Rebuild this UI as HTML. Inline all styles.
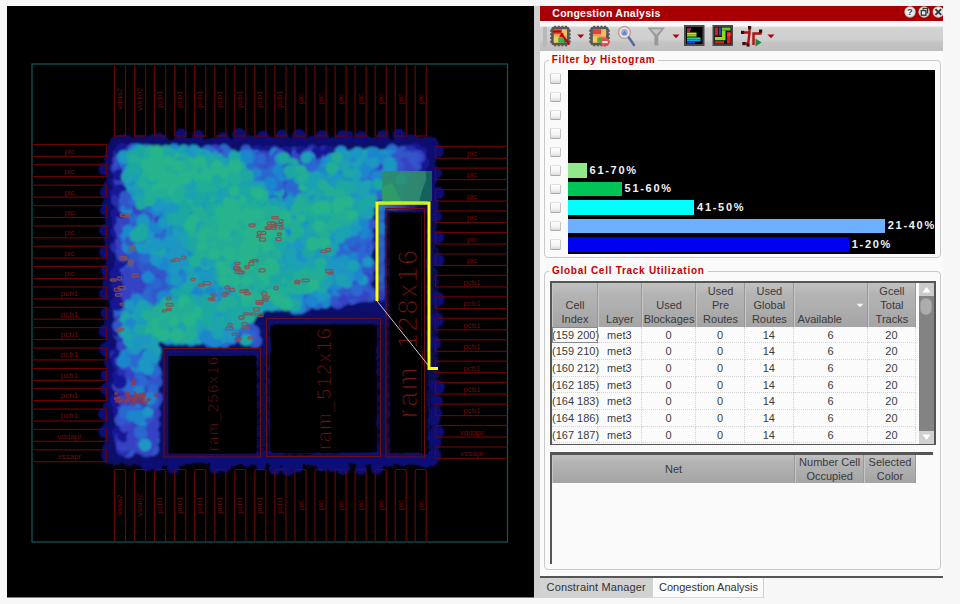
<!DOCTYPE html><html><head><meta charset="utf-8"><title>Congestion Analysis</title><style>
html,body{margin:0;padding:0}
body{width:960px;height:604px;background:#f7f7f7;position:relative;overflow:hidden;font-family:"Liberation Sans",sans-serif;font-size:11px;color:#3c3c3c}
.abs{position:absolute}
#strip{left:534px;top:6px;width:6px;height:591.5px;background:#cfcfcf}
#panel{left:540px;top:6px;width:403px;height:571px;background:#fafafa}
#title{left:540px;top:5.7px;width:403px;height:15.5px;background:#a80000;color:#fff;font-weight:bold;font-size:10.5px;line-height:15px;letter-spacing:0.25px}
#title span{position:absolute;left:12.3px;top:0.7px;white-space:nowrap}
#tbar{left:540px;top:21.2px;width:403px;height:29.4px;background:linear-gradient(#fafafa 0,#fafafa 17.5%,#dddddd 19%,#d2d2d2 27%,#d0d0d0 60%,#c4c4c4 72%,#bebebe 100%)}
.gb{border:1px solid #c9c9c9;border-radius:4px;box-sizing:border-box}
.gt{color:#c40000;font-weight:bold;font-size:10px;background:#fafafa;white-space:nowrap;line-height:12px;padding:0 3px 0 3px}
.cb{left:550px;width:11px;height:10.5px;background:linear-gradient(#fdfdfd 0,#f4f4f4 60%,#dadada 100%);border:1px solid #c4c4c4;border-top-color:#e2e2e2;border-bottom-color:#a8a8a8;box-sizing:border-box;border-radius:1.5px}
.bar{left:568px;height:14.5px}
.bl{color:#f2f2f2;font-weight:bold;font-size:11px;letter-spacing:1.7px;line-height:14.5px;white-space:nowrap}
.hd{background:linear-gradient(#c2c2c2 0,#b4b4b4 25%,#adadad 60%,#a4a4a4 100%);color:#3a3a3a;text-align:center;line-height:14px;font-size:11px;box-sizing:border-box;border-right:1px solid #999;border-left:1px solid #c6c6c6;white-space:nowrap;overflow:hidden;display:flex;flex-direction:column;justify-content:flex-end;padding-bottom:0.8px}
.cell{height:16.7px;line-height:16.7px;text-align:center;font-size:11px;color:#3c3c3c;box-sizing:border-box;border-right:1px dotted #d4d4d4;border-bottom:1px dotted #d4d4d4;white-space:nowrap}
</style></head><body>
<svg width="534" height="604" viewBox="0 0 534 604" style="position:absolute;left:0;top:0">
<defs><filter id="bl" x="-5%" y="-5%" width="110%" height="110%"><feGaussianBlur stdDeviation="1.0"/></filter><clipPath id="die"><rect x="32" y="64" width="475.5" height="478"/></clipPath></defs>
<rect x="7" y="6" width="527" height="591.5" fill="#000"/>
<g filter="url(#bl)">
<g fill="#07074a">
<circle cx="263" cy="322" r="6.0"/>
<circle cx="263" cy="326" r="6.0"/>
<circle cx="264" cy="332" r="6.0"/>
<circle cx="263" cy="335" r="6.0"/>
<circle cx="262" cy="340" r="6.0"/>
<circle cx="264" cy="345" r="6.5"/>
<circle cx="263" cy="350" r="6.0"/>
<circle cx="262" cy="355" r="7.0"/>
<circle cx="264" cy="359" r="6.0"/>
<circle cx="262" cy="364" r="7.0"/>
<circle cx="264" cy="369" r="7.0"/>
<circle cx="262" cy="374" r="6.5"/>
<circle cx="263" cy="377" r="6.0"/>
<circle cx="264" cy="382" r="7.0"/>
<circle cx="262" cy="387" r="6.5"/>
<circle cx="263" cy="392" r="7.0"/>
<circle cx="262" cy="395" r="6.0"/>
<circle cx="264" cy="400" r="6.5"/>
<circle cx="262" cy="404" r="6.0"/>
<circle cx="263" cy="409" r="6.0"/>
<circle cx="264" cy="414" r="6.5"/>
<circle cx="264" cy="420" r="6.5"/>
<circle cx="264" cy="423" r="7.0"/>
<circle cx="263" cy="429" r="6.5"/>
<circle cx="263" cy="434" r="7.0"/>
<circle cx="263" cy="438" r="6.0"/>
<circle cx="263" cy="443" r="6.5"/>
<circle cx="263" cy="447" r="6.5"/>
<circle cx="263" cy="452" r="6.0"/>
<circle cx="262" cy="455" r="6.5"/>
<circle cx="382" cy="211" r="7.0"/>
<circle cx="383" cy="215" r="6.0"/>
<circle cx="384" cy="219" r="6.0"/>
<circle cx="383" cy="223" r="7.0"/>
<circle cx="383" cy="229" r="6.5"/>
<circle cx="383" cy="234" r="6.5"/>
<circle cx="382" cy="238" r="7.0"/>
<circle cx="383" cy="242" r="7.0"/>
<circle cx="383" cy="247" r="7.0"/>
<circle cx="382" cy="251" r="7.0"/>
<circle cx="383" cy="257" r="6.0"/>
<circle cx="383" cy="262" r="7.0"/>
<circle cx="383" cy="266" r="6.5"/>
<circle cx="384" cy="271" r="6.0"/>
<circle cx="383" cy="274" r="7.0"/>
<circle cx="382" cy="279" r="6.0"/>
<circle cx="382" cy="284" r="6.5"/>
<circle cx="383" cy="289" r="7.0"/>
<circle cx="384" cy="293" r="6.0"/>
<circle cx="384" cy="299" r="6.0"/>
<circle cx="382" cy="303" r="7.0"/>
<circle cx="382" cy="307" r="6.5"/>
<circle cx="382" cy="312" r="7.0"/>
<circle cx="382" cy="316" r="6.0"/>
<circle cx="384" cy="322" r="7.0"/>
<circle cx="384" cy="325" r="6.0"/>
<circle cx="382" cy="331" r="6.0"/>
<circle cx="383" cy="335" r="7.0"/>
<circle cx="383" cy="340" r="6.0"/>
<circle cx="383" cy="344" r="6.5"/>
<circle cx="382" cy="350" r="7.0"/>
<circle cx="384" cy="353" r="6.0"/>
<circle cx="382" cy="359" r="7.0"/>
<circle cx="383" cy="363" r="6.0"/>
<circle cx="383" cy="367" r="7.0"/>
<circle cx="382" cy="372" r="6.5"/>
<circle cx="384" cy="376" r="6.0"/>
<circle cx="383" cy="382" r="6.0"/>
<circle cx="383" cy="386" r="6.5"/>
<circle cx="384" cy="392" r="6.0"/>
<circle cx="384" cy="395" r="6.0"/>
<circle cx="383" cy="400" r="7.0"/>
<circle cx="384" cy="405" r="6.5"/>
<circle cx="383" cy="410" r="6.5"/>
<circle cx="384" cy="414" r="7.0"/>
<circle cx="382" cy="418" r="6.0"/>
<circle cx="382" cy="423" r="7.0"/>
<circle cx="384" cy="428" r="6.5"/>
<circle cx="384" cy="433" r="6.0"/>
<circle cx="383" cy="437" r="6.0"/>
<circle cx="384" cy="442" r="7.0"/>
<circle cx="383" cy="447" r="7.0"/>
<circle cx="384" cy="452" r="7.0"/>
<circle cx="383" cy="456" r="6.0"/>
<circle cx="433" cy="206" r="7.0"/>
<circle cx="431" cy="211" r="6.0"/>
<circle cx="432" cy="216" r="6.0"/>
<circle cx="433" cy="221" r="6.0"/>
<circle cx="432" cy="226" r="6.0"/>
<circle cx="431" cy="232" r="6.0"/>
<circle cx="433" cy="237" r="6.0"/>
<circle cx="432" cy="241" r="6.5"/>
<circle cx="432" cy="248" r="6.5"/>
<circle cx="433" cy="252" r="6.5"/>
<circle cx="432" cy="257" r="6.5"/>
<circle cx="431" cy="263" r="7.0"/>
<circle cx="431" cy="267" r="6.0"/>
<circle cx="432" cy="273" r="6.5"/>
<circle cx="433" cy="279" r="6.0"/>
<circle cx="433" cy="283" r="7.0"/>
<circle cx="432" cy="288" r="6.5"/>
<circle cx="432" cy="293" r="6.5"/>
<circle cx="433" cy="299" r="6.5"/>
<circle cx="432" cy="303" r="6.5"/>
<circle cx="433" cy="308" r="6.0"/>
<circle cx="433" cy="313" r="6.0"/>
<circle cx="432" cy="318" r="6.5"/>
<circle cx="433" cy="324" r="6.5"/>
<circle cx="433" cy="330" r="7.0"/>
<circle cx="432" cy="334" r="7.0"/>
<circle cx="433" cy="340" r="6.5"/>
<circle cx="432" cy="345" r="7.0"/>
<circle cx="432" cy="349" r="7.0"/>
<circle cx="433" cy="355" r="6.0"/>
<circle cx="433" cy="361" r="6.5"/>
<circle cx="433" cy="365" r="6.0"/>
<circle cx="433" cy="371" r="6.5"/>
<circle cx="433" cy="375" r="7.0"/>
<circle cx="432" cy="382" r="6.0"/>
<circle cx="433" cy="387" r="7.0"/>
<circle cx="432" cy="391" r="6.0"/>
<circle cx="432" cy="396" r="7.0"/>
<circle cx="432" cy="401" r="7.0"/>
<circle cx="433" cy="406" r="7.0"/>
<circle cx="434" cy="411" r="6.5"/>
<circle cx="434" cy="417" r="6.5"/>
<circle cx="433" cy="422" r="7.0"/>
<circle cx="432" cy="428" r="6.0"/>
<circle cx="433" cy="433" r="6.5"/>
<circle cx="433" cy="438" r="6.5"/>
<circle cx="434" cy="443" r="6.5"/>
<circle cx="434" cy="447" r="6.5"/>
<circle cx="433" cy="454" r="6.0"/>
<circle cx="434" cy="459" r="6.5"/>
<circle cx="387" cy="207" r="7.0"/>
<circle cx="393" cy="207" r="6.5"/>
<circle cx="397" cy="208" r="6.5"/>
<circle cx="401" cy="207" r="6.5"/>
<circle cx="406" cy="207" r="6.5"/>
<circle cx="410" cy="208" r="6.0"/>
<circle cx="415" cy="208" r="7.0"/>
<circle cx="419" cy="207" r="6.0"/>
<circle cx="424" cy="208" r="6.5"/>
<circle cx="427" cy="207" r="6.5"/>
</g>
<g fill="#0a0a6c">
<circle cx="117" cy="143" r="7.5"/>
<circle cx="120" cy="144" r="9.0"/>
<circle cx="125" cy="143" r="9.0"/>
<circle cx="133" cy="147" r="7.5"/>
<circle cx="136" cy="145" r="8.0"/>
<circle cx="139" cy="143" r="8.0"/>
<circle cx="145" cy="144" r="8.0"/>
<circle cx="153" cy="143" r="9.0"/>
<circle cx="154" cy="147" r="9.0"/>
<circle cx="161" cy="143" r="8.5"/>
<circle cx="171" cy="147" r="7.5"/>
<circle cx="178" cy="146" r="7.5"/>
<circle cx="180" cy="144" r="8.5"/>
<circle cx="184" cy="146" r="7.5"/>
<circle cx="191" cy="146" r="8.5"/>
<circle cx="195" cy="144" r="7.5"/>
<circle cx="203" cy="147" r="8.0"/>
<circle cx="208" cy="147" r="8.0"/>
<circle cx="213" cy="146" r="8.0"/>
<circle cx="215" cy="145" r="8.0"/>
<circle cx="224" cy="144" r="8.5"/>
<circle cx="230" cy="146" r="7.5"/>
<circle cx="238" cy="145" r="7.5"/>
<circle cx="243" cy="147" r="9.0"/>
<circle cx="248" cy="144" r="8.5"/>
<circle cx="250" cy="144" r="9.0"/>
<circle cx="254" cy="144" r="8.0"/>
<circle cx="262" cy="147" r="8.0"/>
<circle cx="268" cy="145" r="9.0"/>
<circle cx="272" cy="146" r="8.5"/>
<circle cx="274" cy="146" r="9.0"/>
<circle cx="283" cy="146" r="7.5"/>
<circle cx="287" cy="145" r="8.0"/>
<circle cx="289" cy="146" r="8.5"/>
<circle cx="295" cy="147" r="8.0"/>
<circle cx="303" cy="144" r="9.0"/>
<circle cx="306" cy="147" r="7.5"/>
<circle cx="312" cy="143" r="7.5"/>
<circle cx="314" cy="143" r="7.5"/>
<circle cx="323" cy="147" r="7.5"/>
<circle cx="324" cy="147" r="8.0"/>
<circle cx="333" cy="146" r="9.0"/>
<circle cx="335" cy="145" r="9.0"/>
<circle cx="348" cy="146" r="7.5"/>
<circle cx="351" cy="147" r="8.5"/>
<circle cx="356" cy="147" r="8.5"/>
<circle cx="363" cy="144" r="9.0"/>
<circle cx="365" cy="144" r="9.0"/>
<circle cx="370" cy="145" r="7.5"/>
<circle cx="375" cy="145" r="8.0"/>
<circle cx="379" cy="147" r="9.0"/>
<circle cx="385" cy="145" r="8.5"/>
<circle cx="391" cy="147" r="7.5"/>
<circle cx="396" cy="147" r="8.0"/>
<circle cx="401" cy="145" r="8.0"/>
<circle cx="411" cy="143" r="9.0"/>
<circle cx="414" cy="146" r="7.5"/>
<circle cx="419" cy="145" r="8.0"/>
<circle cx="427" cy="145" r="8.5"/>
<circle cx="430" cy="145" r="9.0"/>
<circle cx="115" cy="149" r="8.0"/>
<circle cx="122" cy="150" r="8.5"/>
<circle cx="133" cy="150" r="9.0"/>
<circle cx="137" cy="150" r="8.5"/>
<circle cx="141" cy="151" r="9.0"/>
<circle cx="146" cy="150" r="8.5"/>
<circle cx="151" cy="152" r="8.5"/>
<circle cx="163" cy="149" r="9.0"/>
<circle cx="173" cy="148" r="8.0"/>
<circle cx="174" cy="150" r="8.5"/>
<circle cx="179" cy="149" r="9.0"/>
<circle cx="184" cy="151" r="7.5"/>
<circle cx="194" cy="151" r="8.0"/>
<circle cx="202" cy="148" r="7.5"/>
<circle cx="210" cy="152" r="8.5"/>
<circle cx="215" cy="150" r="9.0"/>
<circle cx="224" cy="150" r="8.5"/>
<circle cx="231" cy="149" r="7.5"/>
<circle cx="234" cy="149" r="7.5"/>
<circle cx="242" cy="148" r="7.5"/>
<circle cx="246" cy="150" r="9.0"/>
<circle cx="249" cy="149" r="8.0"/>
<circle cx="257" cy="150" r="8.0"/>
<circle cx="259" cy="152" r="8.5"/>
<circle cx="269" cy="149" r="9.0"/>
<circle cx="280" cy="148" r="7.5"/>
<circle cx="293" cy="149" r="8.5"/>
<circle cx="304" cy="148" r="8.0"/>
<circle cx="312" cy="150" r="9.0"/>
<circle cx="314" cy="152" r="8.5"/>
<circle cx="324" cy="152" r="8.5"/>
<circle cx="336" cy="149" r="7.5"/>
<circle cx="345" cy="148" r="7.5"/>
<circle cx="351" cy="149" r="8.0"/>
<circle cx="354" cy="148" r="8.0"/>
<circle cx="359" cy="149" r="9.0"/>
<circle cx="365" cy="149" r="9.0"/>
<circle cx="372" cy="149" r="8.5"/>
<circle cx="376" cy="148" r="8.0"/>
<circle cx="380" cy="148" r="7.5"/>
<circle cx="385" cy="148" r="8.0"/>
<circle cx="392" cy="150" r="8.5"/>
<circle cx="394" cy="150" r="8.5"/>
<circle cx="403" cy="148" r="8.0"/>
<circle cx="408" cy="150" r="8.5"/>
<circle cx="415" cy="150" r="8.0"/>
<circle cx="425" cy="152" r="8.5"/>
<circle cx="114" cy="156" r="8.5"/>
<circle cx="120" cy="153" r="9.0"/>
<circle cx="124" cy="157" r="9.0"/>
<circle cx="135" cy="154" r="9.0"/>
<circle cx="140" cy="155" r="8.0"/>
<circle cx="150" cy="157" r="8.5"/>
<circle cx="160" cy="157" r="8.5"/>
<circle cx="165" cy="154" r="8.0"/>
<circle cx="180" cy="155" r="9.0"/>
<circle cx="206" cy="155" r="7.5"/>
<circle cx="212" cy="156" r="9.0"/>
<circle cx="220" cy="154" r="8.5"/>
<circle cx="232" cy="156" r="8.5"/>
<circle cx="266" cy="157" r="7.5"/>
<circle cx="272" cy="156" r="9.0"/>
<circle cx="275" cy="153" r="8.0"/>
<circle cx="311" cy="155" r="9.0"/>
<circle cx="324" cy="154" r="9.0"/>
<circle cx="337" cy="157" r="8.0"/>
<circle cx="341" cy="154" r="8.0"/>
<circle cx="357" cy="153" r="8.0"/>
<circle cx="359" cy="154" r="8.0"/>
<circle cx="371" cy="153" r="8.5"/>
<circle cx="382" cy="156" r="9.0"/>
<circle cx="387" cy="154" r="8.5"/>
<circle cx="391" cy="155" r="7.5"/>
<circle cx="403" cy="153" r="8.5"/>
<circle cx="425" cy="157" r="7.5"/>
<circle cx="430" cy="155" r="7.5"/>
<circle cx="113" cy="158" r="9.0"/>
<circle cx="118" cy="160" r="8.0"/>
<circle cx="123" cy="161" r="8.5"/>
<circle cx="134" cy="160" r="8.0"/>
<circle cx="141" cy="159" r="8.0"/>
<circle cx="144" cy="159" r="9.0"/>
<circle cx="175" cy="159" r="8.5"/>
<circle cx="183" cy="160" r="8.0"/>
<circle cx="185" cy="160" r="8.0"/>
<circle cx="215" cy="162" r="9.0"/>
<circle cx="233" cy="160" r="7.5"/>
<circle cx="242" cy="160" r="9.0"/>
<circle cx="290" cy="162" r="9.0"/>
<circle cx="296" cy="159" r="8.0"/>
<circle cx="306" cy="158" r="7.5"/>
<circle cx="344" cy="159" r="9.0"/>
<circle cx="353" cy="158" r="7.5"/>
<circle cx="365" cy="159" r="8.0"/>
<circle cx="378" cy="162" r="8.0"/>
<circle cx="383" cy="158" r="8.5"/>
<circle cx="421" cy="161" r="8.0"/>
<circle cx="428" cy="161" r="8.0"/>
<circle cx="115" cy="167" r="9.0"/>
<circle cx="122" cy="164" r="8.5"/>
<circle cx="132" cy="166" r="7.5"/>
<circle cx="134" cy="163" r="8.5"/>
<circle cx="152" cy="163" r="7.5"/>
<circle cx="168" cy="165" r="7.5"/>
<circle cx="180" cy="163" r="8.0"/>
<circle cx="197" cy="167" r="9.0"/>
<circle cx="200" cy="163" r="8.5"/>
<circle cx="217" cy="166" r="7.5"/>
<circle cx="221" cy="164" r="7.5"/>
<circle cx="240" cy="167" r="9.0"/>
<circle cx="250" cy="165" r="8.5"/>
<circle cx="257" cy="167" r="9.0"/>
<circle cx="259" cy="164" r="8.0"/>
<circle cx="274" cy="164" r="8.5"/>
<circle cx="287" cy="167" r="8.0"/>
<circle cx="293" cy="164" r="9.0"/>
<circle cx="307" cy="164" r="9.0"/>
<circle cx="350" cy="167" r="9.0"/>
<circle cx="363" cy="163" r="8.0"/>
<circle cx="387" cy="167" r="9.0"/>
<circle cx="400" cy="166" r="9.0"/>
<circle cx="423" cy="163" r="8.5"/>
<circle cx="425" cy="165" r="7.5"/>
<circle cx="111" cy="170" r="7.5"/>
<circle cx="118" cy="168" r="8.0"/>
<circle cx="132" cy="169" r="8.5"/>
<circle cx="150" cy="168" r="9.0"/>
<circle cx="154" cy="170" r="8.5"/>
<circle cx="160" cy="172" r="7.5"/>
<circle cx="170" cy="168" r="7.5"/>
<circle cx="197" cy="172" r="9.0"/>
<circle cx="202" cy="168" r="9.0"/>
<circle cx="211" cy="169" r="8.5"/>
<circle cx="231" cy="169" r="9.0"/>
<circle cx="235" cy="172" r="7.5"/>
<circle cx="241" cy="169" r="8.0"/>
<circle cx="253" cy="168" r="8.5"/>
<circle cx="263" cy="172" r="9.0"/>
<circle cx="290" cy="171" r="8.0"/>
<circle cx="315" cy="170" r="7.5"/>
<circle cx="324" cy="169" r="8.0"/>
<circle cx="335" cy="169" r="8.5"/>
<circle cx="359" cy="171" r="8.0"/>
<circle cx="366" cy="169" r="9.0"/>
<circle cx="380" cy="170" r="7.5"/>
<circle cx="388" cy="172" r="8.5"/>
<circle cx="397" cy="169" r="8.5"/>
<circle cx="399" cy="172" r="9.0"/>
<circle cx="411" cy="172" r="7.5"/>
<circle cx="427" cy="172" r="8.5"/>
<circle cx="429" cy="171" r="9.0"/>
<circle cx="116" cy="177" r="8.0"/>
<circle cx="128" cy="177" r="8.0"/>
<circle cx="141" cy="173" r="8.0"/>
<circle cx="148" cy="174" r="8.5"/>
<circle cx="153" cy="176" r="7.5"/>
<circle cx="158" cy="173" r="9.0"/>
<circle cx="162" cy="174" r="8.0"/>
<circle cx="173" cy="173" r="8.0"/>
<circle cx="202" cy="173" r="9.0"/>
<circle cx="221" cy="175" r="8.5"/>
<circle cx="226" cy="176" r="8.5"/>
<circle cx="247" cy="176" r="8.0"/>
<circle cx="256" cy="173" r="8.5"/>
<circle cx="271" cy="173" r="8.5"/>
<circle cx="277" cy="173" r="8.5"/>
<circle cx="298" cy="173" r="7.5"/>
<circle cx="303" cy="177" r="7.5"/>
<circle cx="316" cy="177" r="8.5"/>
<circle cx="323" cy="173" r="7.5"/>
<circle cx="343" cy="174" r="7.5"/>
<circle cx="417" cy="174" r="9.0"/>
<circle cx="423" cy="175" r="8.0"/>
<circle cx="425" cy="176" r="8.5"/>
<circle cx="431" cy="173" r="8.5"/>
<circle cx="113" cy="179" r="7.5"/>
<circle cx="117" cy="182" r="9.0"/>
<circle cx="121" cy="181" r="7.5"/>
<circle cx="129" cy="178" r="8.5"/>
<circle cx="137" cy="180" r="8.5"/>
<circle cx="159" cy="179" r="7.5"/>
<circle cx="217" cy="180" r="8.0"/>
<circle cx="225" cy="182" r="7.5"/>
<circle cx="236" cy="179" r="7.5"/>
<circle cx="254" cy="181" r="9.0"/>
<circle cx="261" cy="181" r="7.5"/>
<circle cx="274" cy="182" r="8.0"/>
<circle cx="292" cy="180" r="7.5"/>
<circle cx="332" cy="180" r="8.0"/>
<circle cx="350" cy="179" r="9.0"/>
<circle cx="368" cy="179" r="7.5"/>
<circle cx="401" cy="179" r="9.0"/>
<circle cx="409" cy="182" r="9.0"/>
<circle cx="425" cy="178" r="8.5"/>
<circle cx="429" cy="178" r="9.0"/>
<circle cx="112" cy="186" r="8.5"/>
<circle cx="114" cy="185" r="9.0"/>
<circle cx="139" cy="184" r="8.0"/>
<circle cx="144" cy="183" r="7.5"/>
<circle cx="175" cy="185" r="9.0"/>
<circle cx="185" cy="186" r="8.0"/>
<circle cx="203" cy="186" r="8.0"/>
<circle cx="211" cy="186" r="9.0"/>
<circle cx="215" cy="186" r="8.0"/>
<circle cx="233" cy="183" r="7.5"/>
<circle cx="254" cy="185" r="8.5"/>
<circle cx="270" cy="184" r="8.5"/>
<circle cx="279" cy="186" r="7.5"/>
<circle cx="284" cy="186" r="8.0"/>
<circle cx="313" cy="183" r="8.0"/>
<circle cx="315" cy="184" r="7.5"/>
<circle cx="323" cy="185" r="7.5"/>
<circle cx="330" cy="185" r="8.0"/>
<circle cx="342" cy="186" r="8.0"/>
<circle cx="345" cy="184" r="8.0"/>
<circle cx="357" cy="186" r="8.5"/>
<circle cx="369" cy="185" r="8.5"/>
<circle cx="378" cy="184" r="7.5"/>
<circle cx="413" cy="186" r="7.5"/>
<circle cx="428" cy="186" r="7.5"/>
<circle cx="115" cy="188" r="7.5"/>
<circle cx="132" cy="190" r="8.0"/>
<circle cx="156" cy="189" r="9.0"/>
<circle cx="167" cy="191" r="7.5"/>
<circle cx="173" cy="191" r="8.5"/>
<circle cx="177" cy="190" r="9.0"/>
<circle cx="180" cy="191" r="9.0"/>
<circle cx="184" cy="190" r="8.5"/>
<circle cx="201" cy="190" r="7.5"/>
<circle cx="207" cy="190" r="8.0"/>
<circle cx="212" cy="192" r="7.5"/>
<circle cx="222" cy="189" r="9.0"/>
<circle cx="229" cy="190" r="7.5"/>
<circle cx="234" cy="191" r="7.5"/>
<circle cx="251" cy="191" r="9.0"/>
<circle cx="256" cy="191" r="8.0"/>
<circle cx="266" cy="192" r="8.5"/>
<circle cx="279" cy="192" r="9.0"/>
<circle cx="290" cy="189" r="8.0"/>
<circle cx="294" cy="190" r="9.0"/>
<circle cx="301" cy="191" r="8.5"/>
<circle cx="345" cy="192" r="7.5"/>
<circle cx="358" cy="192" r="8.0"/>
<circle cx="378" cy="189" r="8.5"/>
<circle cx="389" cy="191" r="8.0"/>
<circle cx="395" cy="189" r="7.5"/>
<circle cx="406" cy="191" r="7.5"/>
<circle cx="418" cy="192" r="7.5"/>
<circle cx="428" cy="191" r="7.5"/>
<circle cx="429" cy="192" r="7.5"/>
<circle cx="117" cy="194" r="8.0"/>
<circle cx="119" cy="193" r="8.0"/>
<circle cx="138" cy="196" r="9.0"/>
<circle cx="139" cy="197" r="8.0"/>
<circle cx="147" cy="196" r="8.5"/>
<circle cx="152" cy="197" r="8.0"/>
<circle cx="171" cy="197" r="8.5"/>
<circle cx="180" cy="193" r="7.5"/>
<circle cx="196" cy="195" r="9.0"/>
<circle cx="201" cy="197" r="8.5"/>
<circle cx="204" cy="197" r="7.5"/>
<circle cx="217" cy="197" r="9.0"/>
<circle cx="228" cy="193" r="9.0"/>
<circle cx="258" cy="193" r="7.5"/>
<circle cx="262" cy="196" r="9.0"/>
<circle cx="270" cy="195" r="9.0"/>
<circle cx="293" cy="194" r="7.5"/>
<circle cx="298" cy="195" r="8.0"/>
<circle cx="312" cy="196" r="8.5"/>
<circle cx="315" cy="194" r="8.0"/>
<circle cx="353" cy="196" r="9.0"/>
<circle cx="387" cy="193" r="7.5"/>
<circle cx="397" cy="197" r="9.0"/>
<circle cx="408" cy="196" r="8.5"/>
<circle cx="420" cy="195" r="7.5"/>
<circle cx="427" cy="197" r="8.5"/>
<circle cx="429" cy="195" r="8.5"/>
<circle cx="113" cy="200" r="8.5"/>
<circle cx="133" cy="200" r="7.5"/>
<circle cx="136" cy="198" r="8.0"/>
<circle cx="142" cy="199" r="9.0"/>
<circle cx="149" cy="201" r="7.5"/>
<circle cx="154" cy="202" r="8.5"/>
<circle cx="159" cy="202" r="8.5"/>
<circle cx="164" cy="198" r="8.0"/>
<circle cx="187" cy="202" r="9.0"/>
<circle cx="197" cy="201" r="8.5"/>
<circle cx="201" cy="202" r="7.5"/>
<circle cx="205" cy="202" r="9.0"/>
<circle cx="212" cy="198" r="8.0"/>
<circle cx="223" cy="198" r="9.0"/>
<circle cx="229" cy="202" r="9.0"/>
<circle cx="246" cy="201" r="7.5"/>
<circle cx="249" cy="201" r="9.0"/>
<circle cx="262" cy="200" r="9.0"/>
<circle cx="287" cy="202" r="7.5"/>
<circle cx="324" cy="199" r="8.5"/>
<circle cx="331" cy="200" r="8.0"/>
<circle cx="338" cy="202" r="9.0"/>
<circle cx="339" cy="202" r="8.5"/>
<circle cx="348" cy="202" r="8.0"/>
<circle cx="358" cy="202" r="7.5"/>
<circle cx="362" cy="202" r="9.0"/>
<circle cx="371" cy="201" r="9.0"/>
<circle cx="375" cy="201" r="9.0"/>
<circle cx="383" cy="199" r="8.5"/>
<circle cx="387" cy="201" r="8.5"/>
<circle cx="391" cy="199" r="8.0"/>
<circle cx="395" cy="201" r="8.0"/>
<circle cx="402" cy="200" r="7.5"/>
<circle cx="404" cy="202" r="8.5"/>
<circle cx="412" cy="199" r="8.5"/>
<circle cx="416" cy="202" r="9.0"/>
<circle cx="423" cy="200" r="7.5"/>
<circle cx="426" cy="200" r="8.5"/>
<circle cx="429" cy="198" r="7.5"/>
<circle cx="110" cy="205" r="8.0"/>
<circle cx="116" cy="205" r="8.0"/>
<circle cx="149" cy="207" r="8.5"/>
<circle cx="173" cy="206" r="7.5"/>
<circle cx="185" cy="203" r="8.0"/>
<circle cx="189" cy="203" r="8.5"/>
<circle cx="196" cy="207" r="9.0"/>
<circle cx="208" cy="203" r="7.5"/>
<circle cx="236" cy="203" r="9.0"/>
<circle cx="263" cy="203" r="9.0"/>
<circle cx="267" cy="206" r="8.5"/>
<circle cx="306" cy="203" r="7.5"/>
<circle cx="322" cy="203" r="7.5"/>
<circle cx="324" cy="207" r="9.0"/>
<circle cx="338" cy="207" r="8.5"/>
<circle cx="344" cy="207" r="8.0"/>
<circle cx="367" cy="203" r="8.0"/>
<circle cx="370" cy="203" r="8.0"/>
<circle cx="385" cy="205" r="9.0"/>
<circle cx="389" cy="204" r="8.0"/>
<circle cx="398" cy="204" r="8.5"/>
<circle cx="399" cy="205" r="9.0"/>
<circle cx="422" cy="204" r="8.5"/>
<circle cx="426" cy="204" r="8.0"/>
<circle cx="430" cy="204" r="8.5"/>
<circle cx="113" cy="212" r="8.5"/>
<circle cx="114" cy="209" r="8.0"/>
<circle cx="123" cy="208" r="9.0"/>
<circle cx="133" cy="208" r="8.0"/>
<circle cx="138" cy="209" r="8.5"/>
<circle cx="182" cy="210" r="8.0"/>
<circle cx="192" cy="211" r="7.5"/>
<circle cx="198" cy="210" r="7.5"/>
<circle cx="207" cy="210" r="8.5"/>
<circle cx="223" cy="212" r="7.5"/>
<circle cx="273" cy="212" r="8.5"/>
<circle cx="275" cy="211" r="8.0"/>
<circle cx="284" cy="212" r="8.5"/>
<circle cx="293" cy="210" r="9.0"/>
<circle cx="301" cy="208" r="9.0"/>
<circle cx="309" cy="208" r="9.0"/>
<circle cx="319" cy="208" r="7.5"/>
<circle cx="329" cy="210" r="8.0"/>
<circle cx="348" cy="211" r="8.0"/>
<circle cx="366" cy="208" r="8.0"/>
<circle cx="371" cy="212" r="8.5"/>
<circle cx="374" cy="210" r="8.0"/>
<circle cx="117" cy="214" r="8.0"/>
<circle cx="121" cy="213" r="8.5"/>
<circle cx="126" cy="215" r="8.5"/>
<circle cx="138" cy="216" r="8.5"/>
<circle cx="157" cy="214" r="8.0"/>
<circle cx="162" cy="214" r="7.5"/>
<circle cx="176" cy="215" r="7.5"/>
<circle cx="185" cy="216" r="8.5"/>
<circle cx="189" cy="215" r="7.5"/>
<circle cx="206" cy="213" r="8.5"/>
<circle cx="209" cy="213" r="7.5"/>
<circle cx="215" cy="215" r="8.0"/>
<circle cx="220" cy="214" r="8.0"/>
<circle cx="255" cy="214" r="8.5"/>
<circle cx="260" cy="215" r="8.0"/>
<circle cx="269" cy="214" r="9.0"/>
<circle cx="281" cy="215" r="7.5"/>
<circle cx="285" cy="217" r="8.0"/>
<circle cx="311" cy="216" r="8.0"/>
<circle cx="314" cy="214" r="8.5"/>
<circle cx="323" cy="216" r="7.5"/>
<circle cx="343" cy="215" r="8.0"/>
<circle cx="357" cy="216" r="8.0"/>
<circle cx="363" cy="213" r="8.0"/>
<circle cx="372" cy="215" r="8.0"/>
<circle cx="376" cy="217" r="8.5"/>
<circle cx="113" cy="219" r="8.5"/>
<circle cx="118" cy="222" r="9.0"/>
<circle cx="129" cy="218" r="7.5"/>
<circle cx="143" cy="221" r="7.5"/>
<circle cx="160" cy="220" r="9.0"/>
<circle cx="193" cy="220" r="7.5"/>
<circle cx="206" cy="222" r="7.5"/>
<circle cx="218" cy="222" r="8.5"/>
<circle cx="246" cy="220" r="9.0"/>
<circle cx="275" cy="221" r="8.0"/>
<circle cx="288" cy="220" r="8.0"/>
<circle cx="292" cy="218" r="9.0"/>
<circle cx="296" cy="220" r="9.0"/>
<circle cx="300" cy="221" r="9.0"/>
<circle cx="314" cy="218" r="9.0"/>
<circle cx="337" cy="222" r="9.0"/>
<circle cx="339" cy="218" r="8.0"/>
<circle cx="347" cy="219" r="8.5"/>
<circle cx="352" cy="219" r="8.5"/>
<circle cx="359" cy="222" r="8.5"/>
<circle cx="371" cy="219" r="8.5"/>
<circle cx="374" cy="222" r="7.5"/>
<circle cx="115" cy="223" r="7.5"/>
<circle cx="136" cy="223" r="8.0"/>
<circle cx="149" cy="224" r="9.0"/>
<circle cx="155" cy="223" r="8.5"/>
<circle cx="169" cy="224" r="7.5"/>
<circle cx="195" cy="227" r="7.5"/>
<circle cx="225" cy="224" r="8.0"/>
<circle cx="232" cy="224" r="8.0"/>
<circle cx="241" cy="225" r="8.5"/>
<circle cx="256" cy="224" r="8.0"/>
<circle cx="260" cy="223" r="8.0"/>
<circle cx="274" cy="225" r="7.5"/>
<circle cx="280" cy="225" r="9.0"/>
<circle cx="285" cy="223" r="7.5"/>
<circle cx="300" cy="225" r="8.0"/>
<circle cx="319" cy="226" r="7.5"/>
<circle cx="327" cy="224" r="8.0"/>
<circle cx="337" cy="224" r="7.5"/>
<circle cx="357" cy="226" r="8.0"/>
<circle cx="359" cy="223" r="8.5"/>
<circle cx="370" cy="224" r="8.0"/>
<circle cx="374" cy="224" r="8.5"/>
<circle cx="112" cy="229" r="7.5"/>
<circle cx="117" cy="232" r="8.5"/>
<circle cx="120" cy="228" r="7.5"/>
<circle cx="133" cy="231" r="9.0"/>
<circle cx="142" cy="230" r="7.5"/>
<circle cx="170" cy="230" r="8.0"/>
<circle cx="178" cy="231" r="7.5"/>
<circle cx="181" cy="229" r="8.0"/>
<circle cx="202" cy="231" r="8.5"/>
<circle cx="205" cy="229" r="8.0"/>
<circle cx="224" cy="230" r="8.5"/>
<circle cx="230" cy="232" r="8.5"/>
<circle cx="254" cy="229" r="8.5"/>
<circle cx="264" cy="229" r="9.0"/>
<circle cx="276" cy="228" r="7.5"/>
<circle cx="280" cy="230" r="9.0"/>
<circle cx="285" cy="228" r="9.0"/>
<circle cx="309" cy="230" r="8.5"/>
<circle cx="321" cy="228" r="8.5"/>
<circle cx="340" cy="228" r="9.0"/>
<circle cx="344" cy="231" r="7.5"/>
<circle cx="373" cy="231" r="8.5"/>
<circle cx="375" cy="228" r="8.0"/>
<circle cx="116" cy="233" r="9.0"/>
<circle cx="132" cy="235" r="7.5"/>
<circle cx="141" cy="235" r="9.0"/>
<circle cx="152" cy="237" r="8.5"/>
<circle cx="158" cy="233" r="7.5"/>
<circle cx="166" cy="234" r="9.0"/>
<circle cx="169" cy="233" r="9.0"/>
<circle cx="188" cy="237" r="7.5"/>
<circle cx="198" cy="233" r="8.5"/>
<circle cx="202" cy="236" r="9.0"/>
<circle cx="205" cy="235" r="8.5"/>
<circle cx="213" cy="235" r="9.0"/>
<circle cx="224" cy="233" r="8.5"/>
<circle cx="240" cy="235" r="7.5"/>
<circle cx="246" cy="235" r="7.5"/>
<circle cx="270" cy="233" r="8.0"/>
<circle cx="276" cy="234" r="8.5"/>
<circle cx="289" cy="235" r="8.0"/>
<circle cx="301" cy="233" r="8.0"/>
<circle cx="317" cy="233" r="8.0"/>
<circle cx="330" cy="233" r="7.5"/>
<circle cx="342" cy="233" r="8.0"/>
<circle cx="350" cy="234" r="8.0"/>
<circle cx="354" cy="235" r="8.0"/>
<circle cx="373" cy="236" r="8.5"/>
<circle cx="113" cy="240" r="9.0"/>
<circle cx="114" cy="238" r="7.5"/>
<circle cx="119" cy="242" r="8.5"/>
<circle cx="130" cy="241" r="8.0"/>
<circle cx="143" cy="240" r="7.5"/>
<circle cx="153" cy="238" r="8.5"/>
<circle cx="161" cy="242" r="7.5"/>
<circle cx="177" cy="239" r="8.5"/>
<circle cx="209" cy="239" r="9.0"/>
<circle cx="230" cy="238" r="9.0"/>
<circle cx="247" cy="239" r="7.5"/>
<circle cx="278" cy="241" r="9.0"/>
<circle cx="307" cy="240" r="9.0"/>
<circle cx="335" cy="239" r="8.5"/>
<circle cx="344" cy="242" r="9.0"/>
<circle cx="356" cy="239" r="7.5"/>
<circle cx="372" cy="240" r="7.5"/>
<circle cx="112" cy="243" r="7.5"/>
<circle cx="117" cy="247" r="8.0"/>
<circle cx="134" cy="245" r="8.0"/>
<circle cx="143" cy="246" r="8.0"/>
<circle cx="148" cy="244" r="8.0"/>
<circle cx="157" cy="245" r="9.0"/>
<circle cx="162" cy="244" r="7.5"/>
<circle cx="175" cy="245" r="9.0"/>
<circle cx="198" cy="243" r="8.0"/>
<circle cx="202" cy="246" r="9.0"/>
<circle cx="205" cy="243" r="8.5"/>
<circle cx="209" cy="243" r="7.5"/>
<circle cx="217" cy="243" r="8.5"/>
<circle cx="223" cy="245" r="8.5"/>
<circle cx="231" cy="246" r="9.0"/>
<circle cx="252" cy="244" r="8.0"/>
<circle cx="292" cy="243" r="8.0"/>
<circle cx="306" cy="243" r="7.5"/>
<circle cx="324" cy="243" r="9.0"/>
<circle cx="342" cy="244" r="8.0"/>
<circle cx="359" cy="246" r="7.5"/>
<circle cx="366" cy="247" r="8.5"/>
<circle cx="376" cy="247" r="7.5"/>
<circle cx="116" cy="250" r="8.5"/>
<circle cx="130" cy="251" r="9.0"/>
<circle cx="149" cy="252" r="7.5"/>
<circle cx="159" cy="251" r="9.0"/>
<circle cx="201" cy="249" r="8.0"/>
<circle cx="209" cy="252" r="9.0"/>
<circle cx="219" cy="250" r="8.0"/>
<circle cx="224" cy="250" r="7.5"/>
<circle cx="234" cy="251" r="9.0"/>
<circle cx="245" cy="250" r="8.0"/>
<circle cx="265" cy="248" r="9.0"/>
<circle cx="270" cy="248" r="9.0"/>
<circle cx="281" cy="250" r="7.5"/>
<circle cx="320" cy="249" r="8.0"/>
<circle cx="326" cy="248" r="7.5"/>
<circle cx="363" cy="248" r="7.5"/>
<circle cx="367" cy="249" r="8.0"/>
<circle cx="372" cy="250" r="9.0"/>
<circle cx="375" cy="252" r="9.0"/>
<circle cx="111" cy="255" r="8.0"/>
<circle cx="115" cy="253" r="7.5"/>
<circle cx="126" cy="255" r="8.5"/>
<circle cx="141" cy="256" r="8.0"/>
<circle cx="153" cy="253" r="7.5"/>
<circle cx="163" cy="253" r="9.0"/>
<circle cx="164" cy="254" r="8.0"/>
<circle cx="178" cy="255" r="8.0"/>
<circle cx="185" cy="257" r="8.0"/>
<circle cx="202" cy="253" r="9.0"/>
<circle cx="220" cy="253" r="9.0"/>
<circle cx="225" cy="255" r="8.0"/>
<circle cx="262" cy="256" r="7.5"/>
<circle cx="271" cy="254" r="9.0"/>
<circle cx="277" cy="254" r="7.5"/>
<circle cx="288" cy="254" r="8.5"/>
<circle cx="290" cy="255" r="8.0"/>
<circle cx="310" cy="253" r="9.0"/>
<circle cx="321" cy="255" r="8.5"/>
<circle cx="346" cy="257" r="9.0"/>
<circle cx="362" cy="256" r="8.5"/>
<circle cx="372" cy="255" r="7.5"/>
<circle cx="115" cy="259" r="9.0"/>
<circle cx="156" cy="260" r="9.0"/>
<circle cx="161" cy="259" r="8.0"/>
<circle cx="168" cy="259" r="8.5"/>
<circle cx="173" cy="260" r="9.0"/>
<circle cx="174" cy="259" r="8.5"/>
<circle cx="203" cy="260" r="8.5"/>
<circle cx="206" cy="262" r="8.0"/>
<circle cx="214" cy="260" r="7.5"/>
<circle cx="247" cy="261" r="8.0"/>
<circle cx="327" cy="262" r="7.5"/>
<circle cx="340" cy="260" r="8.0"/>
<circle cx="352" cy="260" r="7.5"/>
<circle cx="363" cy="258" r="7.5"/>
<circle cx="373" cy="260" r="7.5"/>
<circle cx="375" cy="259" r="7.5"/>
<circle cx="114" cy="266" r="8.5"/>
<circle cx="126" cy="263" r="8.0"/>
<circle cx="131" cy="266" r="8.5"/>
<circle cx="144" cy="266" r="8.5"/>
<circle cx="149" cy="265" r="9.0"/>
<circle cx="155" cy="264" r="8.5"/>
<circle cx="179" cy="263" r="8.0"/>
<circle cx="191" cy="265" r="8.0"/>
<circle cx="206" cy="264" r="9.0"/>
<circle cx="215" cy="263" r="8.0"/>
<circle cx="241" cy="266" r="8.0"/>
<circle cx="254" cy="264" r="9.0"/>
<circle cx="276" cy="266" r="8.5"/>
<circle cx="308" cy="265" r="8.0"/>
<circle cx="313" cy="263" r="8.5"/>
<circle cx="318" cy="265" r="8.5"/>
<circle cx="325" cy="266" r="8.5"/>
<circle cx="332" cy="263" r="9.0"/>
<circle cx="339" cy="264" r="8.0"/>
<circle cx="362" cy="267" r="8.0"/>
<circle cx="369" cy="266" r="8.5"/>
<circle cx="113" cy="271" r="7.5"/>
<circle cx="115" cy="272" r="8.0"/>
<circle cx="120" cy="268" r="9.0"/>
<circle cx="126" cy="269" r="7.5"/>
<circle cx="137" cy="271" r="9.0"/>
<circle cx="147" cy="271" r="8.0"/>
<circle cx="174" cy="270" r="8.5"/>
<circle cx="179" cy="268" r="9.0"/>
<circle cx="188" cy="270" r="8.0"/>
<circle cx="200" cy="272" r="8.5"/>
<circle cx="209" cy="269" r="9.0"/>
<circle cx="224" cy="271" r="9.0"/>
<circle cx="234" cy="269" r="8.0"/>
<circle cx="263" cy="270" r="8.5"/>
<circle cx="268" cy="268" r="8.0"/>
<circle cx="276" cy="268" r="8.5"/>
<circle cx="286" cy="272" r="8.5"/>
<circle cx="290" cy="269" r="7.5"/>
<circle cx="294" cy="270" r="8.5"/>
<circle cx="313" cy="271" r="8.5"/>
<circle cx="321" cy="272" r="9.0"/>
<circle cx="325" cy="271" r="7.5"/>
<circle cx="332" cy="269" r="7.5"/>
<circle cx="345" cy="272" r="9.0"/>
<circle cx="372" cy="268" r="8.0"/>
<circle cx="375" cy="268" r="9.0"/>
<circle cx="111" cy="277" r="8.5"/>
<circle cx="117" cy="274" r="9.0"/>
<circle cx="119" cy="275" r="8.5"/>
<circle cx="140" cy="274" r="9.0"/>
<circle cx="158" cy="273" r="7.5"/>
<circle cx="160" cy="275" r="8.0"/>
<circle cx="164" cy="274" r="8.5"/>
<circle cx="180" cy="277" r="8.5"/>
<circle cx="186" cy="277" r="9.0"/>
<circle cx="195" cy="273" r="7.5"/>
<circle cx="215" cy="277" r="8.0"/>
<circle cx="227" cy="274" r="7.5"/>
<circle cx="232" cy="273" r="7.5"/>
<circle cx="245" cy="274" r="8.5"/>
<circle cx="249" cy="275" r="7.5"/>
<circle cx="264" cy="274" r="8.0"/>
<circle cx="277" cy="276" r="8.0"/>
<circle cx="290" cy="274" r="8.0"/>
<circle cx="306" cy="275" r="8.5"/>
<circle cx="312" cy="277" r="9.0"/>
<circle cx="319" cy="275" r="8.5"/>
<circle cx="357" cy="275" r="9.0"/>
<circle cx="372" cy="277" r="8.5"/>
<circle cx="374" cy="276" r="8.0"/>
<circle cx="111" cy="282" r="7.5"/>
<circle cx="114" cy="282" r="9.0"/>
<circle cx="119" cy="279" r="8.0"/>
<circle cx="154" cy="280" r="7.5"/>
<circle cx="161" cy="278" r="7.5"/>
<circle cx="180" cy="282" r="8.0"/>
<circle cx="188" cy="282" r="8.5"/>
<circle cx="198" cy="278" r="8.0"/>
<circle cx="212" cy="280" r="8.5"/>
<circle cx="224" cy="281" r="8.5"/>
<circle cx="234" cy="281" r="9.0"/>
<circle cx="239" cy="279" r="8.0"/>
<circle cx="264" cy="279" r="8.0"/>
<circle cx="269" cy="282" r="9.0"/>
<circle cx="280" cy="279" r="9.0"/>
<circle cx="284" cy="281" r="8.5"/>
<circle cx="293" cy="279" r="7.5"/>
<circle cx="300" cy="282" r="8.5"/>
<circle cx="314" cy="281" r="9.0"/>
<circle cx="328" cy="281" r="9.0"/>
<circle cx="331" cy="282" r="7.5"/>
<circle cx="334" cy="278" r="9.0"/>
<circle cx="349" cy="282" r="9.0"/>
<circle cx="357" cy="282" r="8.5"/>
<circle cx="367" cy="279" r="8.0"/>
<circle cx="373" cy="282" r="7.5"/>
<circle cx="374" cy="278" r="8.5"/>
<circle cx="111" cy="285" r="8.5"/>
<circle cx="117" cy="286" r="9.0"/>
<circle cx="131" cy="285" r="7.5"/>
<circle cx="137" cy="286" r="8.5"/>
<circle cx="149" cy="287" r="8.0"/>
<circle cx="160" cy="287" r="8.5"/>
<circle cx="172" cy="287" r="7.5"/>
<circle cx="195" cy="287" r="9.0"/>
<circle cx="213" cy="284" r="8.5"/>
<circle cx="228" cy="286" r="8.5"/>
<circle cx="229" cy="287" r="9.0"/>
<circle cx="261" cy="286" r="9.0"/>
<circle cx="266" cy="286" r="8.5"/>
<circle cx="276" cy="284" r="8.0"/>
<circle cx="296" cy="283" r="8.0"/>
<circle cx="302" cy="284" r="9.0"/>
<circle cx="306" cy="283" r="7.5"/>
<circle cx="328" cy="283" r="7.5"/>
<circle cx="342" cy="287" r="9.0"/>
<circle cx="361" cy="285" r="8.0"/>
<circle cx="366" cy="286" r="7.5"/>
<circle cx="372" cy="287" r="8.5"/>
<circle cx="112" cy="289" r="8.5"/>
<circle cx="115" cy="290" r="9.0"/>
<circle cx="128" cy="292" r="9.0"/>
<circle cx="130" cy="291" r="7.5"/>
<circle cx="142" cy="290" r="7.5"/>
<circle cx="144" cy="292" r="7.5"/>
<circle cx="150" cy="291" r="7.5"/>
<circle cx="163" cy="288" r="8.0"/>
<circle cx="171" cy="292" r="8.0"/>
<circle cx="190" cy="292" r="7.5"/>
<circle cx="220" cy="289" r="8.5"/>
<circle cx="241" cy="291" r="8.0"/>
<circle cx="246" cy="291" r="9.0"/>
<circle cx="264" cy="290" r="8.0"/>
<circle cx="273" cy="291" r="8.0"/>
<circle cx="275" cy="291" r="9.0"/>
<circle cx="285" cy="290" r="7.5"/>
<circle cx="308" cy="288" r="7.5"/>
<circle cx="333" cy="288" r="7.5"/>
<circle cx="357" cy="290" r="8.5"/>
<circle cx="364" cy="292" r="9.0"/>
<circle cx="369" cy="292" r="8.5"/>
<circle cx="375" cy="291" r="8.5"/>
<circle cx="111" cy="293" r="7.5"/>
<circle cx="116" cy="296" r="7.5"/>
<circle cx="119" cy="293" r="8.0"/>
<circle cx="126" cy="293" r="7.5"/>
<circle cx="130" cy="295" r="9.0"/>
<circle cx="183" cy="294" r="8.0"/>
<circle cx="184" cy="294" r="9.0"/>
<circle cx="193" cy="295" r="8.5"/>
<circle cx="197" cy="293" r="8.5"/>
<circle cx="201" cy="294" r="8.0"/>
<circle cx="205" cy="296" r="8.5"/>
<circle cx="219" cy="293" r="7.5"/>
<circle cx="258" cy="296" r="8.0"/>
<circle cx="268" cy="293" r="8.0"/>
<circle cx="278" cy="293" r="8.0"/>
<circle cx="280" cy="293" r="8.0"/>
<circle cx="286" cy="293" r="7.5"/>
<circle cx="296" cy="297" r="8.0"/>
<circle cx="301" cy="296" r="7.5"/>
<circle cx="310" cy="295" r="7.5"/>
<circle cx="340" cy="297" r="8.0"/>
<circle cx="345" cy="295" r="7.5"/>
<circle cx="350" cy="296" r="7.5"/>
<circle cx="354" cy="294" r="8.0"/>
<circle cx="359" cy="297" r="7.5"/>
<circle cx="370" cy="295" r="7.5"/>
<circle cx="376" cy="296" r="7.5"/>
<circle cx="115" cy="299" r="7.5"/>
<circle cx="133" cy="302" r="7.5"/>
<circle cx="137" cy="300" r="9.0"/>
<circle cx="139" cy="299" r="8.0"/>
<circle cx="147" cy="300" r="7.5"/>
<circle cx="158" cy="298" r="7.5"/>
<circle cx="172" cy="299" r="9.0"/>
<circle cx="175" cy="299" r="7.5"/>
<circle cx="207" cy="301" r="8.5"/>
<circle cx="266" cy="300" r="8.0"/>
<circle cx="291" cy="298" r="8.0"/>
<circle cx="297" cy="298" r="7.5"/>
<circle cx="317" cy="302" r="7.5"/>
<circle cx="333" cy="301" r="8.5"/>
<circle cx="338" cy="302" r="8.0"/>
<circle cx="344" cy="300" r="7.5"/>
<circle cx="352" cy="299" r="8.0"/>
<circle cx="354" cy="298" r="8.0"/>
<circle cx="359" cy="301" r="8.5"/>
<circle cx="364" cy="299" r="9.0"/>
<circle cx="370" cy="301" r="8.0"/>
<circle cx="117" cy="304" r="7.5"/>
<circle cx="127" cy="307" r="7.5"/>
<circle cx="129" cy="305" r="9.0"/>
<circle cx="154" cy="303" r="9.0"/>
<circle cx="161" cy="303" r="9.0"/>
<circle cx="176" cy="306" r="7.5"/>
<circle cx="179" cy="306" r="8.5"/>
<circle cx="185" cy="304" r="8.5"/>
<circle cx="209" cy="304" r="8.0"/>
<circle cx="217" cy="307" r="7.5"/>
<circle cx="222" cy="307" r="9.0"/>
<circle cx="234" cy="306" r="9.0"/>
<circle cx="239" cy="303" r="9.0"/>
<circle cx="246" cy="303" r="8.0"/>
<circle cx="256" cy="303" r="7.5"/>
<circle cx="272" cy="305" r="9.0"/>
<circle cx="277" cy="303" r="9.0"/>
<circle cx="313" cy="307" r="9.0"/>
<circle cx="317" cy="303" r="8.0"/>
<circle cx="321" cy="306" r="8.0"/>
<circle cx="333" cy="307" r="7.5"/>
<circle cx="334" cy="305" r="7.5"/>
<circle cx="342" cy="304" r="8.0"/>
<circle cx="344" cy="306" r="8.0"/>
<circle cx="352" cy="305" r="7.5"/>
<circle cx="354" cy="304" r="8.5"/>
<circle cx="364" cy="304" r="8.5"/>
<circle cx="114" cy="312" r="7.5"/>
<circle cx="125" cy="310" r="7.5"/>
<circle cx="145" cy="308" r="8.0"/>
<circle cx="158" cy="310" r="8.0"/>
<circle cx="159" cy="311" r="8.0"/>
<circle cx="218" cy="312" r="9.0"/>
<circle cx="222" cy="311" r="8.0"/>
<circle cx="232" cy="309" r="8.5"/>
<circle cx="238" cy="308" r="8.0"/>
<circle cx="241" cy="309" r="8.0"/>
<circle cx="248" cy="309" r="7.5"/>
<circle cx="258" cy="308" r="9.0"/>
<circle cx="263" cy="311" r="7.5"/>
<circle cx="267" cy="311" r="7.5"/>
<circle cx="269" cy="312" r="9.0"/>
<circle cx="276" cy="310" r="9.0"/>
<circle cx="280" cy="311" r="8.0"/>
<circle cx="287" cy="312" r="8.0"/>
<circle cx="290" cy="309" r="7.5"/>
<circle cx="295" cy="308" r="9.0"/>
<circle cx="300" cy="308" r="9.0"/>
<circle cx="307" cy="309" r="9.0"/>
<circle cx="309" cy="308" r="8.5"/>
<circle cx="317" cy="308" r="7.5"/>
<circle cx="321" cy="310" r="8.0"/>
<circle cx="115" cy="316" r="9.0"/>
<circle cx="138" cy="315" r="7.5"/>
<circle cx="155" cy="317" r="8.0"/>
<circle cx="173" cy="317" r="8.0"/>
<circle cx="176" cy="317" r="9.0"/>
<circle cx="206" cy="313" r="8.0"/>
<circle cx="209" cy="314" r="9.0"/>
<circle cx="258" cy="313" r="9.0"/>
<circle cx="263" cy="315" r="8.0"/>
<circle cx="264" cy="313" r="8.0"/>
<circle cx="274" cy="315" r="8.5"/>
<circle cx="290" cy="313" r="8.5"/>
<circle cx="294" cy="315" r="7.5"/>
<circle cx="302" cy="314" r="8.5"/>
<circle cx="304" cy="314" r="8.5"/>
<circle cx="309" cy="313" r="7.5"/>
<circle cx="113" cy="322" r="9.0"/>
<circle cx="114" cy="319" r="8.0"/>
<circle cx="121" cy="320" r="9.0"/>
<circle cx="138" cy="321" r="7.5"/>
<circle cx="145" cy="321" r="9.0"/>
<circle cx="194" cy="319" r="8.0"/>
<circle cx="202" cy="321" r="8.0"/>
<circle cx="230" cy="318" r="9.0"/>
<circle cx="257" cy="321" r="7.5"/>
<circle cx="259" cy="318" r="8.5"/>
<circle cx="113" cy="323" r="8.0"/>
<circle cx="126" cy="327" r="8.0"/>
<circle cx="131" cy="325" r="9.0"/>
<circle cx="145" cy="323" r="8.5"/>
<circle cx="172" cy="324" r="9.0"/>
<circle cx="198" cy="326" r="7.5"/>
<circle cx="211" cy="323" r="8.0"/>
<circle cx="222" cy="323" r="7.5"/>
<circle cx="228" cy="325" r="9.0"/>
<circle cx="244" cy="325" r="8.5"/>
<circle cx="258" cy="323" r="9.0"/>
<circle cx="261" cy="325" r="9.0"/>
<circle cx="112" cy="330" r="8.5"/>
<circle cx="118" cy="331" r="9.0"/>
<circle cx="120" cy="331" r="8.0"/>
<circle cx="125" cy="332" r="9.0"/>
<circle cx="130" cy="332" r="9.0"/>
<circle cx="141" cy="329" r="9.0"/>
<circle cx="146" cy="328" r="8.5"/>
<circle cx="153" cy="331" r="8.0"/>
<circle cx="167" cy="328" r="8.0"/>
<circle cx="191" cy="332" r="8.0"/>
<circle cx="194" cy="329" r="8.5"/>
<circle cx="199" cy="332" r="8.5"/>
<circle cx="216" cy="329" r="8.5"/>
<circle cx="227" cy="328" r="9.0"/>
<circle cx="234" cy="331" r="9.0"/>
<circle cx="258" cy="331" r="8.5"/>
<circle cx="262" cy="328" r="8.0"/>
<circle cx="112" cy="333" r="8.0"/>
<circle cx="124" cy="333" r="9.0"/>
<circle cx="142" cy="334" r="8.0"/>
<circle cx="154" cy="335" r="7.5"/>
<circle cx="163" cy="337" r="9.0"/>
<circle cx="188" cy="337" r="9.0"/>
<circle cx="196" cy="333" r="9.0"/>
<circle cx="202" cy="336" r="8.5"/>
<circle cx="240" cy="337" r="9.0"/>
<circle cx="246" cy="333" r="9.0"/>
<circle cx="258" cy="336" r="8.0"/>
<circle cx="259" cy="337" r="8.5"/>
<circle cx="113" cy="339" r="7.5"/>
<circle cx="115" cy="338" r="8.0"/>
<circle cx="122" cy="341" r="9.0"/>
<circle cx="137" cy="342" r="8.5"/>
<circle cx="150" cy="342" r="7.5"/>
<circle cx="160" cy="342" r="7.5"/>
<circle cx="173" cy="342" r="7.5"/>
<circle cx="182" cy="339" r="9.0"/>
<circle cx="184" cy="342" r="7.5"/>
<circle cx="196" cy="339" r="9.0"/>
<circle cx="205" cy="338" r="9.0"/>
<circle cx="210" cy="341" r="9.0"/>
<circle cx="215" cy="341" r="8.5"/>
<circle cx="222" cy="338" r="8.0"/>
<circle cx="224" cy="341" r="8.0"/>
<circle cx="235" cy="342" r="9.0"/>
<circle cx="246" cy="340" r="7.5"/>
<circle cx="250" cy="338" r="8.0"/>
<circle cx="255" cy="341" r="7.5"/>
<circle cx="262" cy="340" r="8.5"/>
<circle cx="113" cy="344" r="8.0"/>
<circle cx="116" cy="343" r="9.0"/>
<circle cx="122" cy="346" r="8.5"/>
<circle cx="126" cy="345" r="9.0"/>
<circle cx="130" cy="346" r="8.0"/>
<circle cx="136" cy="347" r="8.0"/>
<circle cx="144" cy="344" r="8.5"/>
<circle cx="157" cy="345" r="8.5"/>
<circle cx="161" cy="343" r="8.0"/>
<circle cx="164" cy="346" r="7.5"/>
<circle cx="172" cy="344" r="8.5"/>
<circle cx="177" cy="343" r="9.0"/>
<circle cx="182" cy="343" r="8.0"/>
<circle cx="186" cy="344" r="8.5"/>
<circle cx="191" cy="343" r="8.0"/>
<circle cx="196" cy="346" r="8.5"/>
<circle cx="199" cy="344" r="9.0"/>
<circle cx="207" cy="345" r="8.5"/>
<circle cx="216" cy="344" r="8.0"/>
<circle cx="230" cy="345" r="7.5"/>
<circle cx="242" cy="343" r="8.5"/>
<circle cx="247" cy="343" r="8.5"/>
<circle cx="257" cy="344" r="7.5"/>
<circle cx="263" cy="343" r="8.0"/>
<circle cx="111" cy="351" r="9.0"/>
<circle cx="114" cy="351" r="7.5"/>
<circle cx="120" cy="352" r="8.5"/>
<circle cx="132" cy="350" r="9.0"/>
<circle cx="144" cy="351" r="7.5"/>
<circle cx="156" cy="351" r="9.0"/>
<circle cx="162" cy="348" r="8.5"/>
<circle cx="117" cy="356" r="8.0"/>
<circle cx="130" cy="353" r="9.0"/>
<circle cx="137" cy="354" r="8.0"/>
<circle cx="146" cy="357" r="9.0"/>
<circle cx="149" cy="356" r="8.5"/>
<circle cx="159" cy="356" r="7.5"/>
<circle cx="117" cy="358" r="8.0"/>
<circle cx="121" cy="361" r="9.0"/>
<circle cx="129" cy="360" r="7.5"/>
<circle cx="137" cy="361" r="7.5"/>
<circle cx="139" cy="358" r="9.0"/>
<circle cx="151" cy="359" r="8.5"/>
<circle cx="157" cy="361" r="8.0"/>
<circle cx="162" cy="360" r="8.0"/>
<circle cx="112" cy="363" r="8.0"/>
<circle cx="118" cy="363" r="8.0"/>
<circle cx="119" cy="365" r="8.5"/>
<circle cx="124" cy="365" r="9.0"/>
<circle cx="131" cy="367" r="8.0"/>
<circle cx="145" cy="364" r="7.5"/>
<circle cx="157" cy="365" r="9.0"/>
<circle cx="160" cy="366" r="8.0"/>
<circle cx="113" cy="372" r="7.5"/>
<circle cx="115" cy="372" r="7.5"/>
<circle cx="123" cy="369" r="8.5"/>
<circle cx="133" cy="368" r="8.0"/>
<circle cx="142" cy="372" r="8.0"/>
<circle cx="153" cy="372" r="7.5"/>
<circle cx="155" cy="371" r="9.0"/>
<circle cx="162" cy="372" r="8.0"/>
<circle cx="111" cy="377" r="7.5"/>
<circle cx="131" cy="375" r="8.0"/>
<circle cx="138" cy="375" r="7.5"/>
<circle cx="151" cy="375" r="7.5"/>
<circle cx="156" cy="374" r="8.5"/>
<circle cx="160" cy="375" r="7.5"/>
<circle cx="115" cy="380" r="8.0"/>
<circle cx="120" cy="382" r="8.5"/>
<circle cx="136" cy="379" r="8.0"/>
<circle cx="144" cy="379" r="9.0"/>
<circle cx="150" cy="378" r="8.0"/>
<circle cx="156" cy="382" r="8.5"/>
<circle cx="159" cy="382" r="7.5"/>
<circle cx="118" cy="386" r="7.5"/>
<circle cx="128" cy="386" r="8.0"/>
<circle cx="136" cy="387" r="8.5"/>
<circle cx="158" cy="386" r="9.0"/>
<circle cx="159" cy="386" r="8.0"/>
<circle cx="111" cy="390" r="8.5"/>
<circle cx="115" cy="392" r="7.5"/>
<circle cx="136" cy="392" r="8.5"/>
<circle cx="153" cy="389" r="8.0"/>
<circle cx="157" cy="388" r="7.5"/>
<circle cx="161" cy="391" r="9.0"/>
<circle cx="113" cy="393" r="9.0"/>
<circle cx="114" cy="394" r="7.5"/>
<circle cx="121" cy="395" r="8.5"/>
<circle cx="155" cy="397" r="8.0"/>
<circle cx="162" cy="393" r="9.0"/>
<circle cx="117" cy="400" r="9.0"/>
<circle cx="125" cy="401" r="7.5"/>
<circle cx="138" cy="401" r="7.5"/>
<circle cx="139" cy="398" r="8.0"/>
<circle cx="156" cy="398" r="8.5"/>
<circle cx="112" cy="406" r="9.0"/>
<circle cx="118" cy="405" r="9.0"/>
<circle cx="121" cy="407" r="7.5"/>
<circle cx="129" cy="405" r="8.0"/>
<circle cx="143" cy="405" r="7.5"/>
<circle cx="154" cy="403" r="8.5"/>
<circle cx="162" cy="403" r="7.5"/>
<circle cx="118" cy="411" r="8.0"/>
<circle cx="125" cy="412" r="9.0"/>
<circle cx="139" cy="412" r="8.5"/>
<circle cx="154" cy="411" r="8.5"/>
<circle cx="163" cy="411" r="8.5"/>
<circle cx="113" cy="413" r="8.5"/>
<circle cx="116" cy="415" r="8.0"/>
<circle cx="132" cy="416" r="9.0"/>
<circle cx="135" cy="413" r="9.0"/>
<circle cx="149" cy="416" r="7.5"/>
<circle cx="154" cy="414" r="8.0"/>
<circle cx="160" cy="417" r="7.5"/>
<circle cx="113" cy="419" r="9.0"/>
<circle cx="114" cy="422" r="8.5"/>
<circle cx="121" cy="420" r="8.0"/>
<circle cx="130" cy="421" r="8.5"/>
<circle cx="135" cy="422" r="7.5"/>
<circle cx="140" cy="419" r="7.5"/>
<circle cx="158" cy="418" r="9.0"/>
<circle cx="160" cy="421" r="8.5"/>
<circle cx="112" cy="427" r="9.0"/>
<circle cx="114" cy="423" r="9.0"/>
<circle cx="123" cy="424" r="9.0"/>
<circle cx="129" cy="426" r="9.0"/>
<circle cx="142" cy="423" r="9.0"/>
<circle cx="162" cy="423" r="8.5"/>
<circle cx="111" cy="428" r="8.0"/>
<circle cx="115" cy="428" r="9.0"/>
<circle cx="141" cy="432" r="7.5"/>
<circle cx="158" cy="430" r="8.0"/>
<circle cx="113" cy="433" r="8.0"/>
<circle cx="117" cy="433" r="9.0"/>
<circle cx="124" cy="436" r="7.5"/>
<circle cx="133" cy="437" r="9.0"/>
<circle cx="152" cy="436" r="8.5"/>
<circle cx="160" cy="437" r="8.5"/>
<circle cx="112" cy="440" r="7.5"/>
<circle cx="116" cy="438" r="7.5"/>
<circle cx="121" cy="439" r="8.0"/>
<circle cx="145" cy="441" r="8.0"/>
<circle cx="161" cy="442" r="8.0"/>
<circle cx="113" cy="447" r="8.0"/>
<circle cx="114" cy="446" r="8.5"/>
<circle cx="123" cy="445" r="8.0"/>
<circle cx="128" cy="443" r="8.0"/>
<circle cx="137" cy="445" r="8.0"/>
<circle cx="150" cy="445" r="9.0"/>
<circle cx="157" cy="444" r="8.5"/>
<circle cx="162" cy="445" r="8.0"/>
<circle cx="111" cy="449" r="9.0"/>
<circle cx="115" cy="449" r="7.5"/>
<circle cx="123" cy="449" r="8.5"/>
<circle cx="128" cy="451" r="8.5"/>
<circle cx="130" cy="450" r="8.5"/>
<circle cx="134" cy="452" r="7.5"/>
<circle cx="158" cy="451" r="8.0"/>
<circle cx="159" cy="452" r="8.5"/>
<circle cx="110" cy="455" r="9.0"/>
<circle cx="116" cy="455" r="8.5"/>
<circle cx="123" cy="454" r="8.5"/>
<circle cx="125" cy="453" r="8.0"/>
<circle cx="129" cy="457" r="9.0"/>
<circle cx="138" cy="453" r="7.5"/>
<circle cx="140" cy="457" r="9.0"/>
<circle cx="148" cy="457" r="7.5"/>
<circle cx="153" cy="454" r="9.0"/>
<circle cx="154" cy="454" r="8.0"/>
<circle cx="161" cy="453" r="8.0"/>
<circle cx="116" cy="458" r="7.5"/>
<circle cx="131" cy="458" r="7.5"/>
<circle cx="162" cy="351" r="9.0"/>
<circle cx="164" cy="353" r="8.0"/>
<circle cx="164" cy="358" r="8.0"/>
<circle cx="163" cy="363" r="8.5"/>
<circle cx="163" cy="369" r="7.5"/>
<circle cx="164" cy="373" r="8.5"/>
<circle cx="161" cy="378" r="9.0"/>
<circle cx="165" cy="383" r="8.0"/>
<circle cx="163" cy="389" r="7.5"/>
<circle cx="164" cy="394" r="7.5"/>
<circle cx="165" cy="398" r="8.5"/>
<circle cx="164" cy="400" r="7.5"/>
<circle cx="162" cy="407" r="9.0"/>
<circle cx="163" cy="412" r="8.0"/>
<circle cx="164" cy="415" r="7.5"/>
<circle cx="162" cy="421" r="7.5"/>
<circle cx="161" cy="425" r="8.0"/>
<circle cx="162" cy="429" r="9.0"/>
<circle cx="164" cy="435" r="8.0"/>
<circle cx="163" cy="437" r="8.5"/>
<circle cx="165" cy="445" r="7.5"/>
<circle cx="165" cy="449" r="8.5"/>
<circle cx="164" cy="455" r="8.0"/>
<circle cx="164" cy="459" r="7.5"/>
<circle cx="165" cy="349" r="9.0"/>
<circle cx="171" cy="348" r="8.5"/>
<circle cx="175" cy="350" r="7.5"/>
<circle cx="180" cy="350" r="8.5"/>
<circle cx="185" cy="349" r="8.0"/>
<circle cx="187" cy="348" r="9.0"/>
<circle cx="194" cy="350" r="7.5"/>
<circle cx="197" cy="348" r="7.5"/>
<circle cx="203" cy="349" r="8.0"/>
<circle cx="207" cy="348" r="9.0"/>
<circle cx="212" cy="349" r="8.0"/>
<circle cx="217" cy="350" r="7.5"/>
<circle cx="220" cy="350" r="8.5"/>
<circle cx="225" cy="349" r="8.5"/>
<circle cx="230" cy="350" r="7.5"/>
<circle cx="234" cy="348" r="8.5"/>
<circle cx="239" cy="348" r="9.0"/>
<circle cx="242" cy="348" r="7.5"/>
<circle cx="248" cy="349" r="7.5"/>
<circle cx="251" cy="348" r="7.5"/>
<circle cx="259" cy="349" r="9.0"/>
<circle cx="263" cy="349" r="8.5"/>
<circle cx="269" cy="319" r="8.0"/>
<circle cx="273" cy="317" r="7.5"/>
<circle cx="277" cy="319" r="7.5"/>
<circle cx="283" cy="317" r="9.0"/>
<circle cx="286" cy="318" r="8.5"/>
<circle cx="294" cy="317" r="9.0"/>
<circle cx="299" cy="318" r="8.0"/>
<circle cx="301" cy="317" r="7.5"/>
<circle cx="308" cy="319" r="7.5"/>
<circle cx="311" cy="317" r="7.5"/>
<circle cx="316" cy="317" r="9.0"/>
<circle cx="321" cy="318" r="8.5"/>
<circle cx="326" cy="318" r="8.0"/>
<circle cx="331" cy="317" r="8.0"/>
<circle cx="336" cy="317" r="7.5"/>
<circle cx="340" cy="317" r="7.5"/>
<circle cx="344" cy="319" r="9.0"/>
<circle cx="349" cy="318" r="9.0"/>
<circle cx="357" cy="318" r="8.0"/>
<circle cx="360" cy="318" r="8.5"/>
<circle cx="365" cy="317" r="9.0"/>
<circle cx="369" cy="317" r="8.5"/>
<circle cx="374" cy="317" r="8.5"/>
<circle cx="379" cy="317" r="8.5"/>
<circle cx="300" cy="316" r="7.5"/>
<circle cx="305" cy="317" r="8.5"/>
<circle cx="309" cy="316" r="8.5"/>
<circle cx="315" cy="314" r="8.0"/>
<circle cx="317" cy="312" r="7.5"/>
<circle cx="324" cy="313" r="9.0"/>
<circle cx="327" cy="311" r="9.0"/>
<circle cx="331" cy="313" r="8.0"/>
<circle cx="337" cy="312" r="8.5"/>
<circle cx="343" cy="309" r="9.0"/>
<circle cx="345" cy="311" r="8.0"/>
<circle cx="349" cy="309" r="8.0"/>
<circle cx="357" cy="308" r="9.0"/>
<circle cx="359" cy="309" r="7.5"/>
<circle cx="366" cy="308" r="8.0"/>
<circle cx="370" cy="304" r="7.5"/>
<circle cx="372" cy="303" r="9.0"/>
<circle cx="380" cy="304" r="9.0"/>
<circle cx="342" cy="319" r="8.5"/>
<circle cx="343" cy="318" r="8.5"/>
<circle cx="347" cy="313" r="7.5"/>
<circle cx="351" cy="317" r="9.0"/>
<circle cx="360" cy="312" r="7.5"/>
<circle cx="361" cy="315" r="7.5"/>
<circle cx="367" cy="314" r="9.0"/>
<circle cx="369" cy="310" r="8.0"/>
<circle cx="374" cy="313" r="8.0"/>
<circle cx="379" cy="312" r="8.0"/>
</g>
<g fill="#0c0c78">
<circle cx="173" cy="456" r="6.5"/>
<circle cx="181" cy="459" r="7.0"/>
<circle cx="185" cy="457" r="5.5"/>
<circle cx="190" cy="459" r="5.5"/>
<circle cx="196" cy="457" r="6.5"/>
<circle cx="199" cy="457" r="6.5"/>
<circle cx="206" cy="457" r="7.0"/>
<circle cx="212" cy="458" r="5.5"/>
<circle cx="214" cy="458" r="7.0"/>
<circle cx="219" cy="460" r="6.5"/>
<circle cx="223" cy="458" r="7.0"/>
<circle cx="230" cy="456" r="6.5"/>
<circle cx="234" cy="460" r="6.5"/>
<circle cx="242" cy="458" r="6.0"/>
<circle cx="247" cy="460" r="7.0"/>
<circle cx="252" cy="459" r="6.0"/>
<circle cx="256" cy="459" r="6.5"/>
<circle cx="262" cy="459" r="6.5"/>
<circle cx="268" cy="457" r="6.5"/>
<circle cx="272" cy="460" r="5.5"/>
<circle cx="276" cy="460" r="7.0"/>
<circle cx="280" cy="458" r="6.0"/>
<circle cx="286" cy="461" r="6.5"/>
<circle cx="290" cy="460" r="6.5"/>
<circle cx="297" cy="460" r="5.5"/>
<circle cx="300" cy="459" r="5.5"/>
<circle cx="308" cy="460" r="5.5"/>
<circle cx="312" cy="460" r="6.0"/>
<circle cx="317" cy="459" r="7.0"/>
<circle cx="320" cy="459" r="6.5"/>
<circle cx="328" cy="461" r="6.0"/>
<circle cx="329" cy="458" r="5.5"/>
<circle cx="335" cy="460" r="6.5"/>
<circle cx="340" cy="460" r="7.0"/>
<circle cx="345" cy="458" r="7.0"/>
<circle cx="353" cy="458" r="6.0"/>
<circle cx="357" cy="458" r="6.5"/>
<circle cx="362" cy="457" r="6.0"/>
<circle cx="367" cy="458" r="7.0"/>
<circle cx="373" cy="458" r="6.5"/>
<circle cx="377" cy="457" r="5.5"/>
<circle cx="383" cy="460" r="5.5"/>
<circle cx="388" cy="460" r="7.0"/>
<circle cx="390" cy="460" r="6.5"/>
<circle cx="396" cy="458" r="6.0"/>
<circle cx="403" cy="460" r="6.5"/>
<circle cx="406" cy="458" r="6.0"/>
<circle cx="412" cy="458" r="7.0"/>
<circle cx="416" cy="458" r="7.0"/>
<circle cx="421" cy="460" r="6.5"/>
<circle cx="426" cy="461" r="7.0"/>
<circle cx="431" cy="461" r="5.5"/>
<circle cx="435" cy="385" r="5.5"/>
<circle cx="437" cy="401" r="6.0"/>
<circle cx="434" cy="419" r="6.0"/>
<circle cx="434" cy="437" r="6.0"/>
<circle cx="435" cy="455" r="6.5"/>
<circle cx="159" cy="138" r="5.5"/>
<circle cx="181" cy="135" r="6.5"/>
<circle cx="198" cy="136" r="6.0"/>
<circle cx="223" cy="138" r="6.0"/>
<circle cx="239" cy="135" r="7.0"/>
<circle cx="263" cy="137" r="6.5"/>
<circle cx="282" cy="136" r="6.5"/>
<circle cx="299" cy="136" r="7.0"/>
<circle cx="322" cy="137" r="7.0"/>
<circle cx="343" cy="137" r="7.0"/>
<circle cx="348" cy="136" r="5.5"/>
<circle cx="361" cy="138" r="7.0"/>
<circle cx="383" cy="136" r="6.0"/>
<circle cx="399" cy="135" r="6.5"/>
<circle cx="105" cy="169" r="6.5"/>
<circle cx="106" cy="192" r="6.0"/>
<circle cx="106" cy="210" r="6.0"/>
<circle cx="105" cy="230" r="6.0"/>
<circle cx="105" cy="252" r="6.0"/>
<circle cx="106" cy="270" r="5.5"/>
<circle cx="105" cy="294" r="6.0"/>
<circle cx="106" cy="313" r="5.5"/>
<circle cx="105" cy="331" r="6.5"/>
<circle cx="106" cy="349" r="7.0"/>
<circle cx="106" cy="375" r="5.5"/>
<circle cx="106" cy="389" r="6.0"/>
<circle cx="104" cy="414" r="6.0"/>
<circle cx="105" cy="432" r="6.5"/>
<circle cx="437" cy="151" r="7.0"/>
<circle cx="436" cy="173" r="6.0"/>
<circle cx="438" cy="193" r="6.5"/>
<circle cx="436" cy="216" r="6.0"/>
<circle cx="438" cy="237" r="6.5"/>
<circle cx="438" cy="260" r="6.5"/>
<circle cx="438" cy="299" r="7.0"/>
<circle cx="437" cy="320" r="7.0"/>
<circle cx="435" cy="343" r="6.0"/>
<circle cx="438" cy="387" r="7.0"/>
<circle cx="436" cy="413" r="6.0"/>
<circle cx="438" cy="432" r="6.5"/>
<circle cx="436" cy="442" r="5.5"/>
<circle cx="147" cy="465" r="6.5"/>
<circle cx="157" cy="466" r="5.5"/>
<circle cx="173" cy="468" r="6.0"/>
<circle cx="215" cy="468" r="6.0"/>
<circle cx="225" cy="466" r="6.5"/>
<circle cx="261" cy="465" r="5.5"/>
<circle cx="275" cy="469" r="6.0"/>
<circle cx="288" cy="469" r="7.0"/>
<circle cx="298" cy="467" r="5.5"/>
<circle cx="322" cy="466" r="5.5"/>
<circle cx="332" cy="466" r="6.0"/>
<circle cx="343" cy="468" r="7.0"/>
<circle cx="361" cy="469" r="6.0"/>
<circle cx="377" cy="468" r="6.5"/>
</g>
<g fill="#181896">
<circle cx="123" cy="424" r="6.5"/>
<circle cx="121" cy="428" r="6.5"/>
<circle cx="421" cy="154" r="5.5"/>
<circle cx="118" cy="405" r="6.0"/>
<circle cx="418" cy="166" r="7.0"/>
<circle cx="118" cy="222" r="6.5"/>
<circle cx="122" cy="388" r="5.5"/>
<circle cx="118" cy="411" r="5.5"/>
<circle cx="419" cy="170" r="6.5"/>
<circle cx="119" cy="199" r="5.5"/>
<circle cx="118" cy="363" r="6.5"/>
<circle cx="422" cy="152" r="5.5"/>
<circle cx="394" cy="150" r="5.5"/>
<circle cx="118" cy="376" r="6.0"/>
<circle cx="117" cy="214" r="6.5"/>
<circle cx="117" cy="433" r="5.5"/>
<circle cx="117" cy="232" r="6.5"/>
<circle cx="117" cy="194" r="7.0"/>
<circle cx="408" cy="150" r="6.0"/>
<circle cx="419" cy="184" r="5.5"/>
<circle cx="119" cy="279" r="6.5"/>
<circle cx="119" cy="203" r="5.5"/>
</g>
<g fill="#272dad">
<circle cx="314" cy="152" r="5.5"/>
<circle cx="120" cy="383" r="7.0"/>
<circle cx="312" cy="150" r="5.5"/>
<circle cx="259" cy="152" r="5.5"/>
<circle cx="119" cy="326" r="7.0"/>
<circle cx="119" cy="275" r="6.0"/>
<circle cx="122" cy="409" r="6.0"/>
<circle cx="120" cy="187" r="6.0"/>
<circle cx="121" cy="283" r="6.0"/>
<circle cx="332" cy="154" r="6.5"/>
<circle cx="119" cy="289" r="6.0"/>
<circle cx="118" cy="200" r="7.0"/>
<circle cx="122" cy="304" r="6.5"/>
<circle cx="294" cy="152" r="5.5"/>
<circle cx="117" cy="247" r="6.5"/>
<circle cx="417" cy="174" r="6.0"/>
<circle cx="120" cy="153" r="6.5"/>
<circle cx="123" cy="369" r="7.0"/>
</g>
<g fill="#3642c4">
<circle cx="378" cy="162" r="5.5"/>
<circle cx="135" cy="281" r="6.5"/>
<circle cx="322" cy="154" r="6.5"/>
<circle cx="119" cy="193" r="5.5"/>
<circle cx="127" cy="416" r="6.5"/>
<circle cx="132" cy="273" r="7.0"/>
<circle cx="301" cy="153" r="7.0"/>
<circle cx="146" cy="428" r="6.5"/>
<circle cx="338" cy="302" r="7.0"/>
<circle cx="133" cy="395" r="6.0"/>
<circle cx="127" cy="279" r="5.5"/>
<circle cx="285" cy="188" r="6.5"/>
<circle cx="414" cy="187" r="6.5"/>
<circle cx="360" cy="288" r="6.0"/>
<circle cx="130" cy="295" r="6.5"/>
<circle cx="273" cy="159" r="7.0"/>
<circle cx="128" cy="443" r="7.0"/>
<circle cx="131" cy="266" r="6.0"/>
<circle cx="155" cy="397" r="6.0"/>
<circle cx="311" cy="155" r="7.0"/>
<circle cx="398" cy="175" r="6.0"/>
<circle cx="154" cy="434" r="5.5"/>
<circle cx="117" cy="356" r="7.0"/>
<circle cx="400" cy="190" r="7.0"/>
<circle cx="124" cy="375" r="6.0"/>
<circle cx="284" cy="186" r="5.5"/>
<circle cx="132" cy="190" r="6.0"/>
<circle cx="140" cy="295" r="7.0"/>
<circle cx="137" cy="271" r="6.0"/>
<circle cx="149" cy="281" r="7.0"/>
<circle cx="418" cy="192" r="5.5"/>
<circle cx="146" cy="222" r="6.0"/>
<circle cx="277" cy="173" r="7.0"/>
<circle cx="135" cy="273" r="5.5"/>
<circle cx="129" cy="259" r="7.0"/>
<circle cx="369" cy="292" r="6.5"/>
<circle cx="144" cy="292" r="5.5"/>
<circle cx="145" cy="441" r="7.0"/>
<circle cx="127" cy="283" r="6.5"/>
<circle cx="135" cy="413" r="7.0"/>
<circle cx="138" cy="262" r="6.5"/>
<circle cx="143" cy="405" r="7.0"/>
<circle cx="264" cy="169" r="7.0"/>
<circle cx="118" cy="168" r="7.0"/>
<circle cx="134" cy="293" r="7.0"/>
<circle cx="119" cy="355" r="5.5"/>
<circle cx="142" cy="290" r="6.5"/>
<circle cx="125" cy="389" r="6.5"/>
<circle cx="142" cy="435" r="5.5"/>
<circle cx="405" cy="183" r="6.5"/>
<circle cx="129" cy="213" r="7.0"/>
<circle cx="129" cy="218" r="6.0"/>
<circle cx="137" cy="286" r="6.0"/>
<circle cx="128" cy="451" r="7.0"/>
<circle cx="136" cy="403" r="5.5"/>
<circle cx="127" cy="431" r="5.5"/>
<circle cx="130" cy="280" r="6.0"/>
<circle cx="352" cy="299" r="6.0"/>
<circle cx="408" cy="162" r="6.0"/>
<circle cx="369" cy="245" r="6.5"/>
<circle cx="164" cy="274" r="6.5"/>
<circle cx="164" cy="267" r="7.0"/>
<circle cx="396" cy="153" r="6.0"/>
<circle cx="412" cy="189" r="6.5"/>
<circle cx="279" cy="186" r="7.0"/>
</g>
<g fill="#3155ca">
<circle cx="133" cy="368" r="6.5"/>
<circle cx="172" cy="287" r="6.0"/>
<circle cx="401" cy="177" r="6.5"/>
<circle cx="129" cy="317" r="5.5"/>
<circle cx="274" cy="164" r="5.5"/>
<circle cx="223" cy="152" r="6.5"/>
<circle cx="255" cy="341" r="7.0"/>
<circle cx="320" cy="249" r="5.5"/>
<circle cx="135" cy="409" r="6.5"/>
<circle cx="135" cy="238" r="7.0"/>
<circle cx="345" cy="295" r="5.5"/>
<circle cx="387" cy="187" r="5.5"/>
<circle cx="123" cy="219" r="6.5"/>
<circle cx="120" cy="334" r="6.5"/>
<circle cx="246" cy="150" r="5.5"/>
<circle cx="324" cy="288" r="5.5"/>
<circle cx="136" cy="265" r="6.0"/>
<circle cx="164" cy="245" r="7.0"/>
<circle cx="403" cy="153" r="7.0"/>
<circle cx="189" cy="283" r="6.0"/>
<circle cx="149" cy="287" r="6.5"/>
<circle cx="134" cy="257" r="6.5"/>
<circle cx="148" cy="419" r="5.5"/>
<circle cx="155" cy="290" r="5.5"/>
<circle cx="378" cy="184" r="6.5"/>
<circle cx="123" cy="161" r="5.5"/>
<circle cx="149" cy="416" r="7.0"/>
<circle cx="131" cy="272" r="7.0"/>
<circle cx="370" cy="295" r="7.0"/>
<circle cx="240" cy="328" r="7.0"/>
<circle cx="235" cy="336" r="7.0"/>
<circle cx="126" cy="151" r="5.5"/>
<circle cx="388" cy="172" r="6.0"/>
<circle cx="406" cy="172" r="6.5"/>
<circle cx="131" cy="442" r="5.5"/>
<circle cx="143" cy="216" r="5.5"/>
<circle cx="133" cy="302" r="6.5"/>
<circle cx="253" cy="332" r="7.0"/>
<circle cx="126" cy="260" r="5.5"/>
<circle cx="294" cy="243" r="6.5"/>
</g>
<g fill="#2c68d0">
<circle cx="142" cy="354" r="6.5"/>
<circle cx="142" cy="372" r="6.0"/>
<circle cx="137" cy="371" r="6.0"/>
<circle cx="348" cy="245" r="6.5"/>
<circle cx="341" cy="298" r="7.0"/>
<circle cx="125" cy="178" r="7.0"/>
<circle cx="125" cy="310" r="7.0"/>
<circle cx="338" cy="295" r="5.5"/>
<circle cx="293" cy="263" r="5.5"/>
<circle cx="179" cy="268" r="5.5"/>
<circle cx="375" cy="170" r="6.0"/>
<circle cx="148" cy="244" r="7.0"/>
<circle cx="157" cy="219" r="5.5"/>
<circle cx="315" cy="194" r="7.0"/>
<circle cx="353" cy="229" r="6.0"/>
<circle cx="363" cy="277" r="5.5"/>
<circle cx="357" cy="282" r="6.5"/>
<circle cx="180" cy="282" r="5.5"/>
<circle cx="349" cy="272" r="7.0"/>
<circle cx="372" cy="163" r="7.0"/>
<circle cx="303" cy="162" r="7.0"/>
<circle cx="155" cy="223" r="6.5"/>
<circle cx="140" cy="346" r="5.5"/>
<circle cx="368" cy="179" r="6.0"/>
<circle cx="265" cy="167" r="5.5"/>
<circle cx="362" cy="267" r="7.0"/>
<circle cx="210" cy="152" r="6.0"/>
<circle cx="131" cy="408" r="6.0"/>
<circle cx="184" cy="154" r="6.0"/>
<circle cx="126" cy="215" r="7.0"/>
<circle cx="176" cy="215" r="6.5"/>
<circle cx="154" cy="440" r="5.5"/>
<circle cx="142" cy="423" r="6.5"/>
<circle cx="351" cy="177" r="7.0"/>
<circle cx="400" cy="166" r="5.5"/>
<circle cx="393" cy="160" r="5.5"/>
</g>
<g fill="#1f86cd">
<circle cx="365" cy="239" r="5.5"/>
<circle cx="146" cy="203" r="6.0"/>
<circle cx="158" cy="298" r="7.0"/>
<circle cx="341" cy="152" r="6.5"/>
<circle cx="139" cy="208" r="6.0"/>
<circle cx="161" cy="259" r="7.0"/>
<circle cx="145" cy="392" r="6.5"/>
<circle cx="126" cy="339" r="5.5"/>
<circle cx="370" cy="182" r="5.5"/>
<circle cx="170" cy="230" r="6.0"/>
<circle cx="222" cy="189" r="7.0"/>
<circle cx="290" cy="189" r="6.5"/>
<circle cx="343" cy="255" r="5.5"/>
<circle cx="142" cy="334" r="7.0"/>
<circle cx="333" cy="294" r="5.5"/>
<circle cx="308" cy="183" r="6.5"/>
<circle cx="229" cy="190" r="6.0"/>
<circle cx="310" cy="249" r="7.0"/>
<circle cx="294" cy="262" r="7.0"/>
<circle cx="336" cy="255" r="6.5"/>
<circle cx="128" cy="379" r="6.0"/>
<circle cx="362" cy="179" r="6.0"/>
</g>
<g fill="#1b96c2">
<circle cx="337" cy="173" r="5.5"/>
<circle cx="228" cy="193" r="5.5"/>
<circle cx="227" cy="274" r="6.0"/>
</g>
<g fill="#181896">
<circle cx="119" cy="242" r="6.0"/>
<circle cx="119" cy="365" r="6.0"/>
<circle cx="121" cy="407" r="6.0"/>
<circle cx="322" cy="152" r="5.5"/>
<circle cx="121" cy="213" r="5.5"/>
<circle cx="257" cy="150" r="5.5"/>
<circle cx="423" cy="163" r="6.5"/>
<circle cx="117" cy="358" r="6.5"/>
<circle cx="117" cy="286" r="6.5"/>
<circle cx="120" cy="373" r="6.0"/>
<circle cx="117" cy="182" r="6.5"/>
<circle cx="121" cy="436" r="6.5"/>
<circle cx="122" cy="150" r="7.0"/>
<circle cx="421" cy="161" r="7.0"/>
<circle cx="419" cy="182" r="5.5"/>
</g>
<g fill="#272dad">
<circle cx="274" cy="151" r="5.5"/>
<circle cx="124" cy="421" r="6.0"/>
<circle cx="324" cy="152" r="6.5"/>
<circle cx="123" cy="302" r="6.5"/>
<circle cx="124" cy="372" r="7.0"/>
<circle cx="315" cy="158" r="7.0"/>
<circle cx="324" cy="154" r="6.5"/>
</g>
<g fill="#3642c4">
<circle cx="118" cy="160" r="5.5"/>
<circle cx="279" cy="202" r="6.5"/>
<circle cx="359" cy="185" r="7.0"/>
<circle cx="140" cy="271" r="5.5"/>
<circle cx="414" cy="178" r="7.0"/>
<circle cx="406" cy="191" r="5.5"/>
<circle cx="359" cy="297" r="5.5"/>
<circle cx="284" cy="182" r="6.5"/>
<circle cx="126" cy="300" r="5.5"/>
<circle cx="130" cy="243" r="6.0"/>
<circle cx="283" cy="167" r="6.5"/>
<circle cx="152" cy="425" r="6.5"/>
<circle cx="160" cy="275" r="6.5"/>
<circle cx="317" cy="302" r="7.0"/>
<circle cx="123" cy="224" r="6.5"/>
<circle cx="409" cy="155" r="6.0"/>
<circle cx="269" cy="163" r="7.0"/>
<circle cx="413" cy="159" r="6.5"/>
</g>
<g fill="#3155ca">
<circle cx="250" cy="338" r="5.5"/>
<circle cx="161" cy="278" r="5.5"/>
<circle cx="133" cy="150" r="6.5"/>
<circle cx="256" cy="172" r="6.5"/>
<circle cx="395" cy="189" r="6.0"/>
<circle cx="139" cy="184" r="5.5"/>
<circle cx="367" cy="266" r="7.0"/>
<circle cx="144" cy="405" r="6.5"/>
<circle cx="269" cy="168" r="7.0"/>
<circle cx="265" cy="161" r="7.0"/>
<circle cx="130" cy="251" r="7.0"/>
<circle cx="387" cy="193" r="7.0"/>
<circle cx="122" cy="233" r="6.0"/>
<circle cx="131" cy="367" r="5.5"/>
<circle cx="150" cy="378" r="6.5"/>
<circle cx="202" cy="292" r="5.5"/>
<circle cx="366" cy="286" r="5.5"/>
<circle cx="366" cy="247" r="6.5"/>
<circle cx="354" cy="298" r="5.5"/>
<circle cx="130" cy="291" r="6.0"/>
<circle cx="158" cy="233" r="5.5"/>
<circle cx="349" cy="227" r="7.0"/>
<circle cx="359" cy="238" r="6.5"/>
<circle cx="272" cy="156" r="7.0"/>
<circle cx="126" cy="396" r="7.0"/>
<circle cx="149" cy="274" r="6.0"/>
<circle cx="119" cy="315" r="5.5"/>
<circle cx="152" cy="449" r="7.0"/>
</g>
<g fill="#2c68d0">
<circle cx="249" cy="336" r="7.0"/>
<circle cx="392" cy="150" r="6.0"/>
<circle cx="283" cy="169" r="6.0"/>
<circle cx="327" cy="196" r="5.5"/>
<circle cx="364" cy="292" r="5.5"/>
<circle cx="143" cy="240" r="6.0"/>
<circle cx="310" cy="191" r="6.0"/>
<circle cx="350" cy="296" r="5.5"/>
<circle cx="387" cy="167" r="6.5"/>
<circle cx="129" cy="206" r="5.5"/>
<circle cx="148" cy="280" r="7.0"/>
<circle cx="144" cy="396" r="7.0"/>
<circle cx="209" cy="304" r="5.5"/>
<circle cx="128" cy="187" r="6.5"/>
<circle cx="144" cy="379" r="6.0"/>
<circle cx="340" cy="260" r="6.0"/>
<circle cx="227" cy="328" r="7.0"/>
<circle cx="151" cy="405" r="7.0"/>
<circle cx="153" cy="302" r="7.0"/>
<circle cx="344" cy="288" r="7.0"/>
<circle cx="164" cy="211" r="6.5"/>
<circle cx="257" cy="167" r="6.0"/>
<circle cx="131" cy="383" r="7.0"/>
<circle cx="201" cy="278" r="7.0"/>
<circle cx="173" cy="206" r="6.0"/>
<circle cx="397" cy="169" r="6.0"/>
<circle cx="367" cy="235" r="7.0"/>
<circle cx="183" cy="214" r="7.0"/>
<circle cx="224" cy="150" r="6.0"/>
<circle cx="366" cy="253" r="6.0"/>
<circle cx="234" cy="285" r="7.0"/>
<circle cx="162" cy="224" r="6.5"/>
<circle cx="157" cy="214" r="5.5"/>
<circle cx="320" cy="164" r="6.0"/>
</g>
<g fill="#1f86cd">
<circle cx="309" cy="177" r="6.0"/>
<circle cx="139" cy="385" r="6.0"/>
<circle cx="379" cy="176" r="5.5"/>
<circle cx="135" cy="154" r="7.0"/>
<circle cx="180" cy="277" r="6.5"/>
<circle cx="359" cy="154" r="6.5"/>
<circle cx="161" cy="242" r="6.0"/>
<circle cx="144" cy="377" r="6.0"/>
<circle cx="130" cy="193" r="5.5"/>
<circle cx="162" cy="244" r="7.0"/>
<circle cx="313" cy="289" r="7.0"/>
<circle cx="208" cy="203" r="6.5"/>
<circle cx="366" cy="188" r="6.5"/>
<circle cx="357" cy="168" r="6.5"/>
<circle cx="285" cy="239" r="6.0"/>
<circle cx="201" cy="207" r="6.0"/>
<circle cx="256" cy="157" r="7.0"/>
<circle cx="162" cy="214" r="6.0"/>
<circle cx="137" cy="354" r="5.5"/>
<circle cx="138" cy="401" r="6.0"/>
<circle cx="164" cy="254" r="6.0"/>
<circle cx="224" cy="291" r="6.0"/>
<circle cx="150" cy="352" r="7.0"/>
<circle cx="174" cy="150" r="6.5"/>
<circle cx="193" cy="295" r="6.5"/>
<circle cx="287" cy="167" r="6.0"/>
<circle cx="181" cy="229" r="6.5"/>
<circle cx="387" cy="154" r="5.5"/>
<circle cx="147" cy="242" r="6.0"/>
<circle cx="174" cy="259" r="5.5"/>
<circle cx="163" cy="288" r="6.0"/>
<circle cx="365" cy="198" r="6.5"/>
<circle cx="145" cy="235" r="6.0"/>
<circle cx="264" cy="237" r="5.5"/>
<circle cx="333" cy="164" r="6.5"/>
<circle cx="307" cy="302" r="7.0"/>
</g>
<g fill="#1b96c2">
<circle cx="306" cy="202" r="7.0"/>
<circle cx="210" cy="332" r="6.0"/>
<circle cx="148" cy="257" r="7.0"/>
<circle cx="175" cy="252" r="6.5"/>
<circle cx="298" cy="168" r="7.0"/>
<circle cx="335" cy="263" r="5.5"/>
<circle cx="153" cy="253" r="6.5"/>
<circle cx="297" cy="184" r="6.5"/>
<circle cx="133" cy="231" r="7.0"/>
<circle cx="194" cy="162" r="5.5"/>
<circle cx="307" cy="240" r="7.0"/>
<circle cx="188" cy="270" r="7.0"/>
<circle cx="265" cy="187" r="5.5"/>
<circle cx="191" cy="265" r="7.0"/>
<circle cx="340" cy="228" r="6.0"/>
<circle cx="309" cy="278" r="7.0"/>
<circle cx="176" cy="155" r="6.0"/>
<circle cx="323" cy="199" r="7.0"/>
<circle cx="127" cy="307" r="6.0"/>
<circle cx="134" cy="163" r="5.5"/>
<circle cx="300" cy="241" r="5.5"/>
<circle cx="285" cy="228" r="6.0"/>
<circle cx="285" cy="235" r="7.0"/>
<circle cx="230" cy="306" r="6.0"/>
<circle cx="302" cy="306" r="7.0"/>
<circle cx="309" cy="169" r="6.5"/>
<circle cx="152" cy="305" r="7.0"/>
<circle cx="298" cy="253" r="6.0"/>
<circle cx="220" cy="289" r="5.5"/>
<circle cx="383" cy="164" r="6.5"/>
<circle cx="318" cy="292" r="7.0"/>
<circle cx="327" cy="224" r="6.5"/>
<circle cx="386" cy="188" r="6.0"/>
<circle cx="169" cy="254" r="6.0"/>
<circle cx="149" cy="210" r="6.5"/>
<circle cx="329" cy="196" r="7.0"/>
<circle cx="327" cy="294" r="7.0"/>
<circle cx="154" cy="202" r="6.5"/>
<circle cx="365" cy="159" r="6.0"/>
<circle cx="199" cy="332" r="7.0"/>
<circle cx="191" cy="339" r="7.0"/>
<circle cx="301" cy="194" r="6.5"/>
<circle cx="342" cy="233" r="6.0"/>
</g>
<g fill="#1ba1b3">
<circle cx="157" cy="197" r="5.5"/>
<circle cx="326" cy="180" r="6.5"/>
<circle cx="167" cy="205" r="6.0"/>
<circle cx="357" cy="216" r="5.5"/>
<circle cx="343" cy="270" r="6.5"/>
<circle cx="233" cy="160" r="6.0"/>
<circle cx="372" cy="195" r="6.0"/>
<circle cx="138" cy="309" r="5.5"/>
<circle cx="306" cy="222" r="6.5"/>
<circle cx="204" cy="332" r="7.0"/>
<circle cx="384" cy="161" r="7.0"/>
<circle cx="290" cy="224" r="6.5"/>
<circle cx="308" cy="230" r="6.5"/>
<circle cx="195" cy="227" r="6.0"/>
<circle cx="137" cy="203" r="6.5"/>
<circle cx="244" cy="325" r="5.5"/>
<circle cx="185" cy="203" r="6.5"/>
<circle cx="328" cy="256" r="5.5"/>
<circle cx="166" cy="291" r="7.0"/>
</g>
<g fill="#1da7a3">
<circle cx="142" cy="199" r="5.5"/>
<circle cx="304" cy="297" r="6.5"/>
<circle cx="220" cy="300" r="6.0"/>
<circle cx="325" cy="266" r="7.0"/>
<circle cx="253" cy="307" r="7.0"/>
<circle cx="353" cy="206" r="6.5"/>
</g>
<g fill="#181896">
<circle cx="267" cy="152" r="6.5"/>
<circle cx="415" cy="150" r="7.0"/>
<circle cx="120" cy="268" r="6.5"/>
<circle cx="117" cy="274" r="7.0"/>
</g>
<g fill="#272dad">
<circle cx="121" cy="439" r="7.0"/>
</g>
<g fill="#3642c4">
<circle cx="354" cy="294" r="6.0"/>
<circle cx="152" cy="436" r="7.0"/>
<circle cx="351" cy="255" r="6.0"/>
<circle cx="148" cy="437" r="6.5"/>
<circle cx="121" cy="181" r="7.0"/>
<circle cx="133" cy="208" r="7.0"/>
<circle cx="137" cy="292" r="7.0"/>
<circle cx="136" cy="220" r="6.5"/>
<circle cx="152" cy="393" r="6.0"/>
<circle cx="126" cy="345" r="6.0"/>
<circle cx="140" cy="442" r="6.5"/>
<circle cx="131" cy="375" r="6.0"/>
<circle cx="154" cy="414" r="6.5"/>
<circle cx="220" cy="154" r="5.5"/>
<circle cx="396" cy="181" r="7.0"/>
<circle cx="367" cy="277" r="7.0"/>
<circle cx="124" cy="407" r="7.0"/>
<circle cx="291" cy="156" r="6.0"/>
<circle cx="124" cy="365" r="5.5"/>
<circle cx="282" cy="181" r="5.5"/>
<circle cx="124" cy="349" r="5.5"/>
<circle cx="126" cy="255" r="6.5"/>
<circle cx="156" cy="374" r="6.0"/>
<circle cx="142" cy="448" r="5.5"/>
</g>
<g fill="#3155ca">
<circle cx="149" cy="265" r="7.0"/>
<circle cx="328" cy="163" r="5.5"/>
<circle cx="178" cy="274" r="5.5"/>
<circle cx="147" cy="285" r="6.0"/>
<circle cx="130" cy="450" r="5.5"/>
<circle cx="261" cy="181" r="6.0"/>
<circle cx="333" cy="301" r="5.5"/>
<circle cx="270" cy="179" r="6.0"/>
<circle cx="121" cy="361" r="6.0"/>
<circle cx="249" cy="327" r="6.0"/>
<circle cx="284" cy="157" r="6.5"/>
<circle cx="147" cy="271" r="6.5"/>
<circle cx="357" cy="270" r="5.5"/>
<circle cx="151" cy="220" r="7.0"/>
<circle cx="297" cy="156" r="6.5"/>
<circle cx="151" cy="230" r="6.0"/>
<circle cx="409" cy="166" r="6.0"/>
<circle cx="138" cy="375" r="6.0"/>
<circle cx="139" cy="394" r="7.0"/>
<circle cx="416" cy="168" r="5.5"/>
</g>
<g fill="#2c68d0">
<circle cx="137" cy="437" r="5.5"/>
<circle cx="217" cy="291" r="6.5"/>
<circle cx="122" cy="164" r="6.5"/>
<circle cx="177" cy="286" r="5.5"/>
<circle cx="315" cy="170" r="7.0"/>
<circle cx="120" cy="309" r="7.0"/>
<circle cx="137" cy="180" r="6.5"/>
<circle cx="155" cy="238" r="6.5"/>
<circle cx="139" cy="412" r="5.5"/>
<circle cx="149" cy="387" r="7.0"/>
<circle cx="367" cy="249" r="6.0"/>
<circle cx="356" cy="239" r="7.0"/>
<circle cx="126" cy="269" r="6.0"/>
<circle cx="210" cy="341" r="6.5"/>
<circle cx="194" cy="153" r="7.0"/>
<circle cx="361" cy="174" r="6.0"/>
<circle cx="209" cy="336" r="5.5"/>
<circle cx="130" cy="353" r="6.0"/>
<circle cx="224" cy="341" r="7.0"/>
<circle cx="360" cy="234" r="6.5"/>
<circle cx="126" cy="202" r="7.0"/>
</g>
<g fill="#1f86cd">
<circle cx="129" cy="187" r="6.0"/>
<circle cx="137" cy="445" r="5.5"/>
<circle cx="166" cy="217" r="5.5"/>
<circle cx="363" cy="163" r="6.5"/>
<circle cx="303" cy="264" r="6.5"/>
<circle cx="344" cy="231" r="6.0"/>
<circle cx="306" cy="283" r="6.5"/>
<circle cx="377" cy="181" r="6.5"/>
<circle cx="168" cy="293" r="6.5"/>
<circle cx="345" cy="267" r="6.0"/>
<circle cx="292" cy="180" r="5.5"/>
<circle cx="141" cy="256" r="6.5"/>
<circle cx="276" cy="234" r="7.0"/>
<circle cx="314" cy="163" r="6.5"/>
<circle cx="301" cy="296" r="7.0"/>
<circle cx="170" cy="274" r="7.0"/>
<circle cx="240" cy="327" r="6.0"/>
<circle cx="183" cy="334" r="5.5"/>
<circle cx="244" cy="318" r="6.5"/>
<circle cx="332" cy="180" r="6.0"/>
<circle cx="218" cy="295" r="6.5"/>
<circle cx="132" cy="337" r="7.0"/>
<circle cx="142" cy="313" r="6.0"/>
<circle cx="200" cy="286" r="6.0"/>
<circle cx="279" cy="304" r="7.0"/>
<circle cx="286" cy="173" r="6.5"/>
<circle cx="124" cy="240" r="6.0"/>
<circle cx="243" cy="156" r="6.0"/>
<circle cx="356" cy="257" r="7.0"/>
<circle cx="243" cy="339" r="5.5"/>
<circle cx="148" cy="210" r="6.0"/>
<circle cx="290" cy="162" r="6.0"/>
<circle cx="131" cy="224" r="7.0"/>
</g>
<g fill="#1b96c2">
<circle cx="217" cy="323" r="6.5"/>
<circle cx="215" cy="277" r="7.0"/>
<circle cx="178" cy="223" r="7.0"/>
<circle cx="178" cy="255" r="6.5"/>
<circle cx="151" cy="259" r="6.5"/>
<circle cx="282" cy="263" r="5.5"/>
<circle cx="192" cy="211" r="5.5"/>
<circle cx="318" cy="259" r="7.0"/>
<circle cx="212" cy="198" r="6.5"/>
<circle cx="145" cy="323" r="5.5"/>
<circle cx="195" cy="228" r="6.5"/>
<circle cx="175" cy="235" r="5.5"/>
<circle cx="275" cy="191" r="6.0"/>
<circle cx="342" cy="244" r="6.0"/>
<circle cx="207" cy="210" r="5.5"/>
<circle cx="345" cy="279" r="6.0"/>
<circle cx="317" cy="182" r="6.0"/>
<circle cx="342" cy="287" r="7.0"/>
<circle cx="345" cy="272" r="6.0"/>
<circle cx="348" cy="178" r="5.5"/>
<circle cx="332" cy="275" r="5.5"/>
<circle cx="291" cy="298" r="5.5"/>
<circle cx="369" cy="185" r="7.0"/>
<circle cx="289" cy="228" r="6.0"/>
<circle cx="338" cy="245" r="6.5"/>
<circle cx="143" cy="252" r="6.5"/>
<circle cx="328" cy="231" r="5.5"/>
<circle cx="286" cy="298" r="6.0"/>
<circle cx="272" cy="207" r="6.5"/>
<circle cx="318" cy="265" r="6.5"/>
<circle cx="287" cy="283" r="5.5"/>
<circle cx="310" cy="201" r="6.0"/>
<circle cx="314" cy="218" r="7.0"/>
<circle cx="144" cy="344" r="5.5"/>
<circle cx="362" cy="202" r="6.0"/>
</g>
<g fill="#1ba1b3">
<circle cx="199" cy="339" r="5.5"/>
<circle cx="204" cy="185" r="6.0"/>
<circle cx="359" cy="222" r="7.0"/>
<circle cx="222" cy="338" r="5.5"/>
<circle cx="224" cy="240" r="5.5"/>
<circle cx="322" cy="203" r="7.0"/>
<circle cx="217" cy="157" r="5.5"/>
<circle cx="215" cy="162" r="5.5"/>
<circle cx="330" cy="284" r="7.0"/>
<circle cx="176" cy="292" r="6.5"/>
<circle cx="291" cy="174" r="5.5"/>
<circle cx="332" cy="232" r="6.0"/>
<circle cx="205" cy="243" r="6.0"/>
<circle cx="244" cy="180" r="6.0"/>
<circle cx="238" cy="321" r="6.0"/>
<circle cx="314" cy="281" r="7.0"/>
<circle cx="287" cy="202" r="6.0"/>
<circle cx="288" cy="276" r="5.5"/>
<circle cx="160" cy="313" r="7.0"/>
<circle cx="214" cy="260" r="6.5"/>
<circle cx="322" cy="289" r="5.5"/>
<circle cx="138" cy="321" r="7.0"/>
<circle cx="223" cy="162" r="6.5"/>
<circle cx="127" cy="190" r="5.5"/>
<circle cx="329" cy="174" r="7.0"/>
<circle cx="222" cy="258" r="6.0"/>
<circle cx="343" cy="224" r="7.0"/>
<circle cx="285" cy="265" r="7.0"/>
<circle cx="188" cy="282" r="7.0"/>
<circle cx="154" cy="303" r="6.0"/>
<circle cx="323" cy="258" r="7.0"/>
<circle cx="186" cy="259" r="6.5"/>
<circle cx="232" cy="156" r="6.5"/>
<circle cx="126" cy="327" r="5.5"/>
</g>
<g fill="#1da7a3">
<circle cx="185" cy="186" r="6.5"/>
<circle cx="327" cy="177" r="7.0"/>
<circle cx="212" cy="280" r="7.0"/>
<circle cx="169" cy="233" r="6.0"/>
<circle cx="247" cy="316" r="7.0"/>
<circle cx="190" cy="158" r="6.0"/>
<circle cx="240" cy="254" r="5.5"/>
<circle cx="287" cy="258" r="7.0"/>
<circle cx="342" cy="208" r="6.5"/>
<circle cx="211" cy="254" r="7.0"/>
<circle cx="338" cy="235" r="6.5"/>
<circle cx="186" cy="193" r="6.5"/>
<circle cx="191" cy="332" r="7.0"/>
<circle cx="292" cy="290" r="6.5"/>
<circle cx="367" cy="203" r="6.0"/>
<circle cx="180" cy="155" r="6.5"/>
<circle cx="159" cy="179" r="7.0"/>
<circle cx="274" cy="250" r="5.5"/>
<circle cx="229" cy="272" r="6.5"/>
<circle cx="237" cy="254" r="6.5"/>
<circle cx="235" cy="172" r="7.0"/>
<circle cx="234" cy="306" r="6.5"/>
<circle cx="338" cy="195" r="5.5"/>
<circle cx="226" cy="267" r="6.5"/>
<circle cx="230" cy="318" r="6.5"/>
<circle cx="206" cy="224" r="5.5"/>
</g>
<g fill="#22ae96">
<circle cx="194" cy="175" r="6.0"/>
<circle cx="236" cy="203" r="7.0"/>
<circle cx="203" cy="219" r="6.5"/>
<circle cx="220" cy="314" r="5.5"/>
<circle cx="153" cy="187" r="6.0"/>
<circle cx="229" cy="287" r="6.5"/>
<circle cx="162" cy="326" r="6.5"/>
<circle cx="166" cy="177" r="5.5"/>
</g>
<g fill="#181896">
<circle cx="286" cy="152" r="6.0"/>
<circle cx="120" cy="191" r="7.0"/>
<circle cx="329" cy="152" r="6.0"/>
<circle cx="120" cy="352" r="7.0"/>
<circle cx="119" cy="293" r="6.0"/>
</g>
<g fill="#272dad">
<circle cx="419" cy="192" r="6.5"/>
<circle cx="123" cy="449" r="7.0"/>
</g>
<g fill="#3642c4">
<circle cx="121" cy="395" r="6.0"/>
<circle cx="140" cy="274" r="6.5"/>
<circle cx="156" cy="398" r="7.0"/>
<circle cx="123" cy="171" r="5.5"/>
<circle cx="154" cy="424" r="6.0"/>
<circle cx="153" cy="272" r="6.0"/>
<circle cx="149" cy="410" r="6.5"/>
<circle cx="165" cy="284" r="6.5"/>
<circle cx="150" cy="445" r="6.0"/>
<circle cx="215" cy="150" r="5.5"/>
<circle cx="364" cy="296" r="6.0"/>
<circle cx="162" cy="272" r="6.0"/>
<circle cx="150" cy="420" r="6.0"/>
<circle cx="121" cy="320" r="6.0"/>
<circle cx="140" cy="447" r="7.0"/>
<circle cx="118" cy="386" r="6.0"/>
<circle cx="140" cy="282" r="7.0"/>
<circle cx="362" cy="256" r="6.0"/>
<circle cx="146" cy="450" r="7.0"/>
<circle cx="134" cy="397" r="7.0"/>
</g>
<g fill="#3155ca">
<circle cx="340" cy="297" r="6.0"/>
<circle cx="165" cy="270" r="7.0"/>
<circle cx="258" cy="158" r="7.0"/>
<circle cx="415" cy="195" r="6.5"/>
<circle cx="305" cy="305" r="7.0"/>
<circle cx="266" cy="157" r="5.5"/>
<circle cx="120" cy="331" r="7.0"/>
<circle cx="143" cy="246" r="6.5"/>
<circle cx="336" cy="275" r="7.0"/>
<circle cx="320" cy="159" r="5.5"/>
<circle cx="135" cy="440" r="6.5"/>
<circle cx="405" cy="181" r="6.0"/>
<circle cx="408" cy="196" r="6.5"/>
<circle cx="148" cy="295" r="5.5"/>
<circle cx="357" cy="285" r="6.0"/>
<circle cx="130" cy="421" r="5.5"/>
</g>
<g fill="#2c68d0">
<circle cx="402" cy="194" r="6.5"/>
<circle cx="331" cy="282" r="6.0"/>
<circle cx="146" cy="150" r="6.0"/>
<circle cx="149" cy="252" r="5.5"/>
<circle cx="129" cy="426" r="7.0"/>
<circle cx="139" cy="398" r="5.5"/>
<circle cx="322" cy="169" r="6.0"/>
<circle cx="319" cy="301" r="5.5"/>
<circle cx="286" cy="195" r="6.5"/>
<circle cx="153" cy="238" r="5.5"/>
<circle cx="357" cy="258" r="5.5"/>
<circle cx="149" cy="207" r="7.0"/>
<circle cx="126" cy="263" r="7.0"/>
<circle cx="268" cy="178" r="6.0"/>
<circle cx="413" cy="186" r="5.5"/>
<circle cx="344" cy="242" r="6.0"/>
<circle cx="129" cy="405" r="6.5"/>
<circle cx="133" cy="431" r="6.5"/>
<circle cx="128" cy="292" r="6.0"/>
<circle cx="155" cy="257" r="5.5"/>
<circle cx="333" cy="288" r="7.0"/>
<circle cx="138" cy="425" r="6.5"/>
<circle cx="345" cy="249" r="5.5"/>
</g>
<g fill="#1f86cd">
<circle cx="216" cy="329" r="6.5"/>
<circle cx="266" cy="192" r="6.0"/>
<circle cx="274" cy="182" r="6.0"/>
<circle cx="297" cy="180" r="5.5"/>
<circle cx="149" cy="294" r="5.5"/>
<circle cx="350" cy="247" r="5.5"/>
<circle cx="213" cy="284" r="5.5"/>
<circle cx="296" cy="250" r="5.5"/>
<circle cx="132" cy="350" r="6.0"/>
<circle cx="151" cy="364" r="7.0"/>
<circle cx="326" cy="162" r="5.5"/>
<circle cx="194" cy="289" r="6.5"/>
<circle cx="300" cy="308" r="6.0"/>
<circle cx="349" cy="248" r="5.5"/>
<circle cx="220" cy="333" r="7.0"/>
<circle cx="129" cy="178" r="5.5"/>
</g>
<g fill="#1b96c2">
<circle cx="226" cy="336" r="5.5"/>
<circle cx="130" cy="346" r="6.0"/>
<circle cx="337" cy="252" r="6.0"/>
<circle cx="353" cy="158" r="6.0"/>
<circle cx="132" cy="235" r="6.5"/>
<circle cx="303" cy="270" r="5.5"/>
<circle cx="172" cy="299" r="7.0"/>
<circle cx="292" cy="218" r="7.0"/>
<circle cx="141" cy="191" r="6.5"/>
<circle cx="134" cy="191" r="5.5"/>
<circle cx="363" cy="196" r="6.0"/>
<circle cx="276" cy="196" r="5.5"/>
<circle cx="325" cy="299" r="5.5"/>
<circle cx="300" cy="259" r="6.5"/>
<circle cx="144" cy="351" r="5.5"/>
<circle cx="315" cy="283" r="7.0"/>
<circle cx="181" cy="244" r="6.5"/>
<circle cx="322" cy="247" r="6.5"/>
<circle cx="337" cy="224" r="5.5"/>
<circle cx="334" cy="278" r="5.5"/>
<circle cx="301" cy="233" r="6.5"/>
<circle cx="332" cy="263" r="6.0"/>
</g>
<g fill="#1ba1b3">
<circle cx="188" cy="263" r="7.0"/>
<circle cx="166" cy="234" r="6.0"/>
<circle cx="306" cy="259" r="6.0"/>
<circle cx="305" cy="189" r="6.5"/>
<circle cx="188" cy="248" r="5.5"/>
<circle cx="193" cy="241" r="5.5"/>
<circle cx="145" cy="224" r="6.0"/>
<circle cx="138" cy="248" r="5.5"/>
<circle cx="239" cy="286" r="5.5"/>
<circle cx="212" cy="156" r="7.0"/>
<circle cx="329" cy="255" r="7.0"/>
<circle cx="173" cy="295" r="5.5"/>
<circle cx="182" cy="292" r="7.0"/>
<circle cx="130" cy="320" r="6.5"/>
<circle cx="256" cy="287" r="5.5"/>
<circle cx="344" cy="168" r="7.0"/>
<circle cx="301" cy="184" r="6.0"/>
<circle cx="354" cy="164" r="6.5"/>
<circle cx="126" cy="316" r="5.5"/>
<circle cx="205" cy="202" r="5.5"/>
<circle cx="302" cy="284" r="7.0"/>
<circle cx="188" cy="327" r="6.5"/>
<circle cx="330" cy="233" r="6.0"/>
<circle cx="337" cy="229" r="7.0"/>
<circle cx="366" cy="219" r="5.5"/>
<circle cx="230" cy="238" r="6.5"/>
<circle cx="227" cy="162" r="6.5"/>
<circle cx="204" cy="181" r="6.0"/>
<circle cx="247" cy="161" r="7.0"/>
<circle cx="353" cy="196" r="6.0"/>
</g>
<g fill="#1da7a3">
<circle cx="245" cy="203" r="5.5"/>
<circle cx="181" cy="220" r="7.0"/>
<circle cx="228" cy="164" r="5.5"/>
<circle cx="279" cy="219" r="7.0"/>
<circle cx="242" cy="197" r="6.5"/>
<circle cx="255" cy="270" r="5.5"/>
<circle cx="192" cy="276" r="6.5"/>
<circle cx="294" cy="270" r="5.5"/>
<circle cx="252" cy="257" r="6.5"/>
<circle cx="314" cy="271" r="6.0"/>
<circle cx="187" cy="202" r="7.0"/>
<circle cx="265" cy="248" r="5.5"/>
<circle cx="280" cy="301" r="5.5"/>
<circle cx="255" cy="255" r="6.0"/>
<circle cx="182" cy="170" r="6.0"/>
<circle cx="338" cy="202" r="5.5"/>
<circle cx="242" cy="187" r="5.5"/>
<circle cx="241" cy="169" r="7.0"/>
<circle cx="311" cy="258" r="6.5"/>
<circle cx="251" cy="191" r="6.0"/>
<circle cx="185" cy="170" r="7.0"/>
<circle cx="252" cy="232" r="5.5"/>
<circle cx="246" cy="291" r="5.5"/>
<circle cx="275" cy="291" r="5.5"/>
<circle cx="226" cy="176" r="6.5"/>
<circle cx="317" cy="233" r="7.0"/>
<circle cx="232" cy="273" r="7.0"/>
<circle cx="367" cy="154" r="5.5"/>
<circle cx="141" cy="173" r="6.0"/>
<circle cx="158" cy="155" r="5.5"/>
<circle cx="125" cy="322" r="6.5"/>
<circle cx="138" cy="323" r="5.5"/>
<circle cx="294" cy="190" r="7.0"/>
<circle cx="269" cy="243" r="5.5"/>
<circle cx="330" cy="258" r="6.0"/>
<circle cx="146" cy="328" r="7.0"/>
<circle cx="132" cy="166" r="6.5"/>
<circle cx="242" cy="316" r="6.0"/>
</g>
<g fill="#22ae96">
<circle cx="156" cy="189" r="5.5"/>
<circle cx="238" cy="260" r="6.0"/>
<circle cx="280" cy="262" r="6.5"/>
<circle cx="294" cy="204" r="6.5"/>
<circle cx="263" cy="251" r="6.0"/>
<circle cx="238" cy="209" r="5.5"/>
<circle cx="326" cy="248" r="5.5"/>
<circle cx="286" cy="293" r="7.0"/>
<circle cx="244" cy="190" r="6.5"/>
<circle cx="154" cy="335" r="5.5"/>
<circle cx="191" cy="316" r="6.0"/>
<circle cx="305" cy="178" r="7.0"/>
<circle cx="233" cy="183" r="6.0"/>
<circle cx="240" cy="235" r="5.5"/>
<circle cx="224" cy="215" r="6.0"/>
<circle cx="276" cy="246" r="5.5"/>
</g>
<g fill="#28b48c">
<circle cx="358" cy="192" r="6.5"/>
<circle cx="272" cy="277" r="6.5"/>
<circle cx="228" cy="258" r="5.5"/>
<circle cx="261" cy="244" r="5.5"/>
<circle cx="255" cy="201" r="6.0"/>
<circle cx="166" cy="319" r="6.5"/>
<circle cx="144" cy="155" r="6.0"/>
<circle cx="301" cy="191" r="7.0"/>
<circle cx="201" cy="202" r="5.5"/>
<circle cx="171" cy="333" r="6.5"/>
<circle cx="194" cy="239" r="6.5"/>
<circle cx="141" cy="159" r="7.0"/>
<circle cx="250" cy="204" r="6.5"/>
<circle cx="254" cy="233" r="7.0"/>
<circle cx="202" cy="231" r="7.0"/>
<circle cx="255" cy="299" r="6.5"/>
<circle cx="280" cy="283" r="5.5"/>
<circle cx="237" cy="244" r="5.5"/>
</g>
<g fill="#181896">
<circle cx="120" cy="263" r="6.0"/>
<circle cx="317" cy="153" r="6.0"/>
<circle cx="123" cy="260" r="6.0"/>
<circle cx="119" cy="175" r="6.0"/>
<circle cx="119" cy="414" r="5.5"/>
<circle cx="423" cy="175" r="6.5"/>
<circle cx="117" cy="400" r="7.0"/>
</g>
<g fill="#272dad">
<circle cx="411" cy="152" r="6.5"/>
<circle cx="125" cy="252" r="6.0"/>
<circle cx="124" cy="442" r="5.5"/>
<circle cx="123" cy="398" r="6.5"/>
<circle cx="122" cy="341" r="6.0"/>
</g>
<g fill="#3642c4">
<circle cx="144" cy="387" r="6.0"/>
<circle cx="129" cy="173" r="6.5"/>
<circle cx="132" cy="381" r="6.5"/>
<circle cx="125" cy="401" r="6.5"/>
<circle cx="263" cy="172" r="6.5"/>
<circle cx="380" cy="170" r="6.5"/>
<circle cx="126" cy="293" r="6.0"/>
<circle cx="122" cy="243" r="7.0"/>
<circle cx="123" cy="255" r="7.0"/>
<circle cx="135" cy="422" r="5.5"/>
<circle cx="120" cy="228" r="6.0"/>
<circle cx="134" cy="432" r="7.0"/>
<circle cx="412" cy="174" r="6.0"/>
<circle cx="280" cy="195" r="7.0"/>
<circle cx="123" cy="445" r="7.0"/>
<circle cx="392" cy="174" r="6.5"/>
<circle cx="420" cy="195" r="6.0"/>
<circle cx="369" cy="266" r="7.0"/>
<circle cx="401" cy="183" r="6.0"/>
<circle cx="121" cy="252" r="5.5"/>
<circle cx="131" cy="285" r="7.0"/>
<circle cx="263" cy="157" r="6.5"/>
</g>
<g fill="#3155ca">
<circle cx="182" cy="252" r="7.0"/>
<circle cx="401" cy="179" r="6.5"/>
<circle cx="302" cy="163" r="5.5"/>
<circle cx="158" cy="273" r="7.0"/>
<circle cx="167" cy="281" r="5.5"/>
<circle cx="411" cy="194" r="5.5"/>
<circle cx="159" cy="302" r="7.0"/>
<circle cx="118" cy="333" r="5.5"/>
<circle cx="259" cy="164" r="6.5"/>
</g>
<g fill="#2c68d0">
<circle cx="310" cy="295" r="7.0"/>
<circle cx="369" cy="177" r="5.5"/>
<circle cx="128" cy="386" r="7.0"/>
<circle cx="150" cy="291" r="5.5"/>
<circle cx="133" cy="308" r="5.5"/>
<circle cx="138" cy="216" r="6.0"/>
<circle cx="340" cy="251" r="6.0"/>
<circle cx="361" cy="271" r="6.5"/>
<circle cx="139" cy="358" r="6.0"/>
<circle cx="130" cy="332" r="6.5"/>
<circle cx="126" cy="223" r="5.5"/>
</g>
<g fill="#1f86cd">
<circle cx="179" cy="283" r="5.5"/>
<circle cx="314" cy="224" r="7.0"/>
<circle cx="206" cy="281" r="6.5"/>
<circle cx="364" cy="231" r="6.0"/>
<circle cx="136" cy="198" r="6.5"/>
<circle cx="357" cy="182" r="5.5"/>
<circle cx="325" cy="303" r="5.5"/>
<circle cx="358" cy="251" r="5.5"/>
<circle cx="275" cy="153" r="5.5"/>
<circle cx="323" cy="236" r="6.5"/>
<circle cx="391" cy="155" r="6.0"/>
<circle cx="339" cy="202" r="7.0"/>
<circle cx="190" cy="261" r="6.0"/>
<circle cx="149" cy="224" r="7.0"/>
<circle cx="153" cy="213" r="5.5"/>
<circle cx="173" cy="271" r="7.0"/>
<circle cx="295" cy="308" r="6.5"/>
<circle cx="147" cy="426" r="5.5"/>
<circle cx="214" cy="191" r="6.5"/>
<circle cx="196" cy="256" r="7.0"/>
<circle cx="296" cy="297" r="6.0"/>
<circle cx="293" cy="194" r="5.5"/>
<circle cx="302" cy="252" r="7.0"/>
</g>
<g fill="#1b96c2">
<circle cx="270" cy="191" r="7.0"/>
<circle cx="382" cy="182" r="5.5"/>
<circle cx="134" cy="328" r="6.5"/>
<circle cx="233" cy="164" r="6.5"/>
<circle cx="138" cy="177" r="5.5"/>
<circle cx="332" cy="160" r="7.0"/>
<circle cx="380" cy="189" r="7.0"/>
<circle cx="400" cy="162" r="6.5"/>
<circle cx="207" cy="190" r="6.0"/>
<circle cx="172" cy="220" r="7.0"/>
<circle cx="340" cy="277" r="5.5"/>
<circle cx="134" cy="245" r="5.5"/>
<circle cx="142" cy="323" r="5.5"/>
<circle cx="312" cy="277" r="6.0"/>
<circle cx="163" cy="253" r="7.0"/>
<circle cx="173" cy="260" r="6.0"/>
<circle cx="253" cy="178" r="7.0"/>
<circle cx="324" cy="199" r="6.5"/>
<circle cx="324" cy="169" r="5.5"/>
<circle cx="336" cy="160" r="6.5"/>
<circle cx="182" cy="210" r="6.0"/>
<circle cx="248" cy="171" r="5.5"/>
<circle cx="238" cy="299" r="5.5"/>
<circle cx="357" cy="196" r="5.5"/>
<circle cx="359" cy="223" r="5.5"/>
<circle cx="153" cy="346" r="6.0"/>
<circle cx="326" cy="277" r="5.5"/>
<circle cx="169" cy="246" r="7.0"/>
<circle cx="306" cy="197" r="6.5"/>
<circle cx="211" cy="195" r="6.5"/>
</g>
<g fill="#1ba1b3">
<circle cx="179" cy="201" r="5.5"/>
<circle cx="194" cy="265" r="6.5"/>
<circle cx="148" cy="190" r="5.5"/>
<circle cx="309" cy="230" r="6.0"/>
<circle cx="253" cy="312" r="6.5"/>
<circle cx="237" cy="158" r="6.0"/>
<circle cx="306" cy="243" r="6.0"/>
<circle cx="185" cy="160" r="6.0"/>
<circle cx="184" cy="322" r="6.5"/>
<circle cx="209" cy="269" r="6.0"/>
<circle cx="321" cy="282" r="7.0"/>
<circle cx="313" cy="183" r="5.5"/>
<circle cx="292" cy="251" r="6.0"/>
<circle cx="300" cy="225" r="7.0"/>
<circle cx="140" cy="419" r="6.0"/>
<circle cx="300" cy="221" r="6.5"/>
<circle cx="361" cy="189" r="6.5"/>
<circle cx="325" cy="271" r="6.5"/>
<circle cx="196" cy="339" r="5.5"/>
<circle cx="184" cy="151" r="6.5"/>
<circle cx="335" cy="169" r="5.5"/>
<circle cx="363" cy="159" r="6.5"/>
<circle cx="293" cy="210" r="5.5"/>
<circle cx="308" cy="265" r="6.5"/>
<circle cx="262" cy="256" r="6.5"/>
<circle cx="205" cy="296" r="6.5"/>
<circle cx="382" cy="156" r="6.5"/>
<circle cx="321" cy="255" r="6.5"/>
<circle cx="134" cy="306" r="6.0"/>
<circle cx="138" cy="187" r="5.5"/>
<circle cx="183" cy="294" r="6.5"/>
<circle cx="279" cy="192" r="5.5"/>
<circle cx="206" cy="327" r="7.0"/>
<circle cx="332" cy="244" r="6.5"/>
<circle cx="186" cy="243" r="7.0"/>
<circle cx="203" cy="260" r="6.5"/>
</g>
<g fill="#1da7a3">
<circle cx="217" cy="270" r="5.5"/>
<circle cx="160" cy="322" r="6.5"/>
<circle cx="331" cy="239" r="5.5"/>
<circle cx="226" cy="208" r="7.0"/>
<circle cx="292" cy="304" r="6.0"/>
<circle cx="199" cy="265" r="5.5"/>
<circle cx="298" cy="173" r="6.5"/>
<circle cx="229" cy="267" r="7.0"/>
<circle cx="239" cy="219" r="7.0"/>
<circle cx="217" cy="174" r="6.5"/>
<circle cx="377" cy="194" r="6.5"/>
<circle cx="271" cy="241" r="6.0"/>
<circle cx="267" cy="218" r="6.5"/>
<circle cx="261" cy="264" r="7.0"/>
<circle cx="175" cy="299" r="7.0"/>
<circle cx="206" cy="222" r="6.0"/>
<circle cx="145" cy="303" r="7.0"/>
<circle cx="282" cy="274" r="7.0"/>
<circle cx="211" cy="322" r="5.5"/>
<circle cx="278" cy="293" r="7.0"/>
<circle cx="258" cy="308" r="7.0"/>
<circle cx="211" cy="204" r="6.0"/>
<circle cx="280" cy="225" r="6.0"/>
<circle cx="179" cy="318" r="5.5"/>
<circle cx="231" cy="280" r="5.5"/>
<circle cx="221" cy="318" r="5.5"/>
<circle cx="214" cy="283" r="5.5"/>
<circle cx="225" cy="182" r="6.5"/>
<circle cx="177" cy="190" r="6.5"/>
<circle cx="265" cy="197" r="6.5"/>
<circle cx="347" cy="223" r="6.0"/>
<circle cx="181" cy="238" r="7.0"/>
<circle cx="165" cy="154" r="6.0"/>
</g>
<g fill="#22ae96">
<circle cx="236" cy="242" r="6.5"/>
<circle cx="277" cy="281" r="5.5"/>
<circle cx="192" cy="306" r="6.5"/>
<circle cx="276" cy="268" r="6.0"/>
<circle cx="173" cy="317" r="7.0"/>
<circle cx="159" cy="196" r="5.5"/>
<circle cx="344" cy="207" r="7.0"/>
<circle cx="304" cy="214" r="7.0"/>
<circle cx="236" cy="198" r="6.0"/>
<circle cx="252" cy="244" r="5.5"/>
<circle cx="223" cy="225" r="5.5"/>
<circle cx="207" cy="269" r="6.5"/>
<circle cx="229" cy="251" r="6.0"/>
<circle cx="217" cy="197" r="7.0"/>
<circle cx="330" cy="216" r="6.0"/>
<circle cx="194" cy="319" r="7.0"/>
<circle cx="217" cy="243" r="5.5"/>
</g>
<g fill="#28b48c">
<circle cx="176" cy="317" r="6.0"/>
<circle cx="155" cy="317" r="6.0"/>
<circle cx="211" cy="179" r="6.5"/>
<circle cx="176" cy="194" r="7.0"/>
<circle cx="247" cy="261" r="5.5"/>
<circle cx="324" cy="237" r="6.0"/>
<circle cx="270" cy="248" r="7.0"/>
<circle cx="307" cy="177" r="5.5"/>
<circle cx="244" cy="185" r="5.5"/>
<circle cx="201" cy="179" r="6.5"/>
<circle cx="247" cy="239" r="6.5"/>
<circle cx="266" cy="300" r="6.0"/>
<circle cx="197" cy="307" r="6.5"/>
</g>
<g fill="#181896">
<circle cx="117" cy="304" r="7.0"/>
<circle cx="124" cy="436" r="6.5"/>
<circle cx="301" cy="151" r="5.5"/>
<circle cx="120" cy="382" r="7.0"/>
<circle cx="118" cy="331" r="6.5"/>
</g>
<g fill="#272dad">
<circle cx="124" cy="164" r="7.0"/>
</g>
<g fill="#3642c4">
<circle cx="296" cy="159" r="6.0"/>
<circle cx="136" cy="379" r="7.0"/>
<circle cx="133" cy="437" r="6.5"/>
<circle cx="139" cy="265" r="5.5"/>
<circle cx="418" cy="157" r="7.0"/>
<circle cx="399" cy="172" r="5.5"/>
<circle cx="151" cy="439" r="7.0"/>
<circle cx="123" cy="208" r="5.5"/>
<circle cx="126" cy="222" r="5.5"/>
<circle cx="154" cy="280" r="7.0"/>
<circle cx="154" cy="411" r="5.5"/>
<circle cx="349" cy="276" r="6.0"/>
<circle cx="160" cy="220" r="6.0"/>
<circle cx="122" cy="346" r="5.5"/>
<circle cx="130" cy="445" r="5.5"/>
<circle cx="349" cy="283" r="6.5"/>
</g>
<g fill="#3155ca">
<circle cx="160" cy="287" r="6.5"/>
<circle cx="396" cy="158" r="5.5"/>
<circle cx="350" cy="170" r="7.0"/>
<circle cx="307" cy="156" r="6.0"/>
<circle cx="277" cy="159" r="7.0"/>
<circle cx="253" cy="168" r="7.0"/>
<circle cx="368" cy="271" r="5.5"/>
<circle cx="370" cy="224" r="6.5"/>
<circle cx="136" cy="387" r="6.0"/>
<circle cx="124" cy="333" r="6.5"/>
<circle cx="349" cy="282" r="6.0"/>
<circle cx="353" cy="289" r="6.5"/>
<circle cx="408" cy="157" r="6.5"/>
<circle cx="409" cy="182" r="7.0"/>
<circle cx="363" cy="248" r="7.0"/>
<circle cx="148" cy="417" r="6.0"/>
</g>
<g fill="#2c68d0">
<circle cx="148" cy="359" r="6.5"/>
<circle cx="141" cy="432" r="7.0"/>
<circle cx="192" cy="152" r="7.0"/>
<circle cx="294" cy="167" r="6.0"/>
<circle cx="140" cy="375" r="5.5"/>
<circle cx="317" cy="303" r="6.5"/>
<circle cx="171" cy="292" r="7.0"/>
<circle cx="292" cy="186" r="7.0"/>
<circle cx="343" cy="179" r="5.5"/>
<circle cx="277" cy="185" r="7.0"/>
<circle cx="156" cy="283" r="6.0"/>
<circle cx="359" cy="246" r="7.0"/>
<circle cx="141" cy="165" r="5.5"/>
<circle cx="136" cy="223" r="6.5"/>
<circle cx="246" cy="333" r="5.5"/>
<circle cx="366" cy="169" r="6.0"/>
</g>
<g fill="#1f86cd">
<circle cx="195" cy="273" r="6.0"/>
<circle cx="167" cy="232" r="7.0"/>
<circle cx="359" cy="171" r="6.5"/>
<circle cx="136" cy="367" r="5.5"/>
<circle cx="128" cy="230" r="5.5"/>
<circle cx="232" cy="339" r="5.5"/>
<circle cx="139" cy="417" r="7.0"/>
<circle cx="168" cy="238" r="6.0"/>
<circle cx="175" cy="245" r="5.5"/>
<circle cx="127" cy="209" r="6.5"/>
<circle cx="131" cy="325" r="7.0"/>
<circle cx="397" cy="197" r="7.0"/>
<circle cx="128" cy="171" r="5.5"/>
<circle cx="282" cy="176" r="5.5"/>
<circle cx="144" cy="231" r="6.5"/>
<circle cx="181" cy="328" r="6.5"/>
<circle cx="148" cy="277" r="6.5"/>
<circle cx="330" cy="185" r="7.0"/>
<circle cx="363" cy="232" r="7.0"/>
<circle cx="337" cy="290" r="6.0"/>
<circle cx="350" cy="167" r="6.0"/>
<circle cx="335" cy="261" r="5.5"/>
<circle cx="125" cy="355" r="5.5"/>
<circle cx="171" cy="280" r="5.5"/>
<circle cx="251" cy="173" r="6.0"/>
</g>
<g fill="#1b96c2">
<circle cx="350" cy="234" r="7.0"/>
<circle cx="298" cy="241" r="7.0"/>
<circle cx="200" cy="227" r="6.0"/>
<circle cx="152" cy="237" r="6.5"/>
<circle cx="280" cy="230" r="6.0"/>
<circle cx="232" cy="317" r="7.0"/>
<circle cx="332" cy="269" r="6.5"/>
<circle cx="343" cy="174" r="5.5"/>
<circle cx="352" cy="219" r="5.5"/>
<circle cx="220" cy="195" r="7.0"/>
<circle cx="305" cy="169" r="5.5"/>
<circle cx="172" cy="248" r="7.0"/>
<circle cx="228" cy="286" r="7.0"/>
<circle cx="177" cy="239" r="7.0"/>
<circle cx="325" cy="187" r="6.0"/>
<circle cx="148" cy="412" r="5.5"/>
<circle cx="251" cy="186" r="6.5"/>
<circle cx="294" cy="278" r="5.5"/>
<circle cx="185" cy="257" r="6.5"/>
<circle cx="204" cy="197" r="5.5"/>
<circle cx="161" cy="204" r="5.5"/>
<circle cx="145" cy="321" r="7.0"/>
<circle cx="142" cy="365" r="7.0"/>
<circle cx="308" cy="226" r="6.0"/>
</g>
<g fill="#1ba1b3">
<circle cx="317" cy="202" r="6.0"/>
<circle cx="189" cy="154" r="5.5"/>
<circle cx="314" cy="274" r="7.0"/>
<circle cx="195" cy="287" r="6.0"/>
<circle cx="254" cy="185" r="7.0"/>
<circle cx="144" cy="159" r="6.0"/>
<circle cx="279" cy="288" r="6.5"/>
<circle cx="249" cy="318" r="6.0"/>
<circle cx="331" cy="200" r="6.0"/>
<circle cx="310" cy="181" r="7.0"/>
<circle cx="282" cy="241" r="6.0"/>
<circle cx="222" cy="283" r="5.5"/>
<circle cx="371" cy="153" r="6.0"/>
<circle cx="357" cy="226" r="5.5"/>
<circle cx="198" cy="233" r="7.0"/>
<circle cx="231" cy="175" r="6.5"/>
<circle cx="367" cy="196" r="7.0"/>
<circle cx="312" cy="239" r="7.0"/>
<circle cx="281" cy="256" r="6.5"/>
<circle cx="257" cy="276" r="5.5"/>
<circle cx="188" cy="239" r="6.5"/>
<circle cx="146" cy="336" r="6.0"/>
<circle cx="175" cy="293" r="5.5"/>
<circle cx="316" cy="228" r="6.0"/>
</g>
<g fill="#1da7a3">
<circle cx="312" cy="196" r="6.5"/>
<circle cx="201" cy="197" r="6.0"/>
<circle cx="209" cy="265" r="7.0"/>
<circle cx="249" cy="287" r="5.5"/>
<circle cx="366" cy="208" r="7.0"/>
<circle cx="140" cy="155" r="6.5"/>
<circle cx="378" cy="189" r="7.0"/>
<circle cx="182" cy="339" r="6.0"/>
<circle cx="305" cy="272" r="7.0"/>
<circle cx="185" cy="309" r="5.5"/>
<circle cx="269" cy="231" r="5.5"/>
<circle cx="198" cy="278" r="5.5"/>
<circle cx="254" cy="288" r="6.0"/>
<circle cx="289" cy="296" r="6.5"/>
<circle cx="172" cy="214" r="6.0"/>
<circle cx="155" cy="165" r="6.0"/>
<circle cx="205" cy="165" r="6.5"/>
<circle cx="303" cy="289" r="6.0"/>
<circle cx="215" cy="263" r="6.5"/>
<circle cx="293" cy="164" r="6.0"/>
<circle cx="321" cy="272" r="7.0"/>
<circle cx="192" cy="255" r="7.0"/>
<circle cx="212" cy="192" r="5.5"/>
<circle cx="163" cy="337" r="5.5"/>
<circle cx="285" cy="290" r="6.5"/>
<circle cx="205" cy="235" r="6.5"/>
<circle cx="195" cy="269" r="6.0"/>
</g>
<g fill="#22ae96">
<circle cx="180" cy="193" r="5.5"/>
<circle cx="309" cy="208" r="6.0"/>
<circle cx="152" cy="319" r="5.5"/>
<circle cx="241" cy="266" r="5.5"/>
<circle cx="167" cy="312" r="6.5"/>
<circle cx="242" cy="160" r="5.5"/>
<circle cx="232" cy="309" r="6.5"/>
<circle cx="208" cy="173" r="7.0"/>
<circle cx="261" cy="277" r="7.0"/>
<circle cx="257" cy="247" r="7.0"/>
<circle cx="250" cy="210" r="6.0"/>
<circle cx="215" cy="186" r="5.5"/>
<circle cx="202" cy="173" r="6.5"/>
<circle cx="209" cy="243" r="5.5"/>
<circle cx="151" cy="191" r="5.5"/>
<circle cx="178" cy="329" r="6.5"/>
<circle cx="227" cy="207" r="7.0"/>
<circle cx="173" cy="159" r="7.0"/>
<circle cx="249" cy="201" r="6.0"/>
<circle cx="329" cy="210" r="7.0"/>
<circle cx="236" cy="231" r="5.5"/>
<circle cx="144" cy="179" r="7.0"/>
<circle cx="211" cy="323" r="6.5"/>
<circle cx="300" cy="282" r="5.5"/>
<circle cx="337" cy="222" r="6.5"/>
<circle cx="179" cy="182" r="7.0"/>
<circle cx="241" cy="248" r="7.0"/>
<circle cx="290" cy="216" r="7.0"/>
<circle cx="318" cy="190" r="6.5"/>
<circle cx="272" cy="262" r="7.0"/>
<circle cx="284" cy="212" r="6.0"/>
</g>
<g fill="#28b48c">
<circle cx="221" cy="175" r="6.5"/>
<circle cx="222" cy="311" r="5.5"/>
<circle cx="246" cy="220" r="6.5"/>
<circle cx="246" cy="235" r="6.0"/>
<circle cx="211" cy="169" r="5.5"/>
<circle cx="168" cy="165" r="6.0"/>
<circle cx="217" cy="316" r="6.5"/>
<circle cx="249" cy="275" r="6.5"/>
<circle cx="241" cy="225" r="6.0"/>
<circle cx="241" cy="174" r="5.5"/>
<circle cx="246" cy="303" r="6.0"/>
<circle cx="248" cy="253" r="7.0"/>
<circle cx="269" cy="283" r="6.0"/>
<circle cx="163" cy="158" r="6.5"/>
<circle cx="165" cy="180" r="6.0"/>
<circle cx="258" cy="258" r="5.5"/>
<circle cx="261" cy="210" r="5.5"/>
<circle cx="170" cy="164" r="6.5"/>
<circle cx="238" cy="275" r="5.5"/>
<circle cx="248" cy="287" r="6.5"/>
<circle cx="260" cy="223" r="5.5"/>
</g>
<g fill="#3642c4">
<circle cx="151" cy="375" r="6.5"/>
<circle cx="125" cy="427" r="5.5"/>
<circle cx="140" cy="286" r="6.0"/>
<circle cx="405" cy="164" r="7.0"/>
<circle cx="367" cy="279" r="6.0"/>
<circle cx="152" cy="428" r="6.5"/>
<circle cx="136" cy="392" r="6.0"/>
<circle cx="240" cy="337" r="6.0"/>
<circle cx="144" cy="400" r="6.5"/>
<circle cx="344" cy="300" r="5.5"/>
<circle cx="411" cy="172" r="6.0"/>
<circle cx="128" cy="273" r="6.5"/>
<circle cx="133" cy="399" r="6.5"/>
<circle cx="138" cy="209" r="6.0"/>
</g>
<g fill="#3155ca">
<circle cx="139" cy="227" r="6.5"/>
<circle cx="288" cy="170" r="7.0"/>
<circle cx="342" cy="288" r="6.5"/>
<circle cx="118" cy="326" r="5.5"/>
<circle cx="156" cy="268" r="7.0"/>
<circle cx="361" cy="285" r="5.5"/>
<circle cx="307" cy="164" r="7.0"/>
<circle cx="133" cy="254" r="5.5"/>
<circle cx="155" cy="264" r="5.5"/>
<circle cx="156" cy="382" r="6.5"/>
<circle cx="279" cy="154" r="5.5"/>
<circle cx="398" cy="166" r="6.5"/>
<circle cx="174" cy="208" r="6.0"/>
<circle cx="148" cy="217" r="5.5"/>
<circle cx="288" cy="254" r="6.0"/>
<circle cx="151" cy="359" r="5.5"/>
<circle cx="354" cy="246" r="6.5"/>
<circle cx="121" cy="420" r="6.5"/>
<circle cx="414" cy="158" r="6.5"/>
<circle cx="140" cy="350" r="6.0"/>
<circle cx="139" cy="299" r="6.0"/>
<circle cx="128" cy="204" r="5.5"/>
</g>
<g fill="#2c68d0">
<circle cx="357" cy="290" r="6.5"/>
<circle cx="264" cy="175" r="6.5"/>
<circle cx="155" cy="371" r="6.0"/>
<circle cx="234" cy="331" r="6.5"/>
<circle cx="346" cy="257" r="6.5"/>
<circle cx="245" cy="331" r="5.5"/>
<circle cx="133" cy="200" r="5.5"/>
<circle cx="131" cy="389" r="6.5"/>
<circle cx="404" cy="177" r="6.0"/>
<circle cx="206" cy="276" r="7.0"/>
<circle cx="246" cy="163" r="6.5"/>
<circle cx="370" cy="172" r="6.5"/>
<circle cx="208" cy="152" r="7.0"/>
<circle cx="228" cy="153" r="5.5"/>
<circle cx="250" cy="158" r="6.0"/>
<circle cx="125" cy="162" r="7.0"/>
</g>
<g fill="#1f86cd">
<circle cx="337" cy="283" r="7.0"/>
<circle cx="303" cy="256" r="6.5"/>
<circle cx="288" cy="244" r="5.5"/>
<circle cx="128" cy="237" r="7.0"/>
<circle cx="373" cy="189" r="5.5"/>
<circle cx="291" cy="206" r="5.5"/>
<circle cx="389" cy="193" r="6.0"/>
<circle cx="232" cy="323" r="6.0"/>
<circle cx="300" cy="302" r="5.5"/>
<circle cx="215" cy="278" r="7.0"/>
<circle cx="186" cy="277" r="6.5"/>
<circle cx="364" cy="173" r="5.5"/>
<circle cx="377" cy="177" r="6.5"/>
<circle cx="350" cy="179" r="6.5"/>
<circle cx="218" cy="301" r="6.5"/>
<circle cx="223" cy="330" r="6.0"/>
<circle cx="270" cy="195" r="5.5"/>
<circle cx="356" cy="265" r="6.5"/>
<circle cx="170" cy="267" r="6.5"/>
<circle cx="366" cy="167" r="7.0"/>
<circle cx="161" cy="303" r="5.5"/>
<circle cx="219" cy="293" r="6.0"/>
<circle cx="128" cy="247" r="6.5"/>
<circle cx="137" cy="150" r="6.5"/>
<circle cx="178" cy="265" r="6.5"/>
</g>
<g fill="#1b96c2">
<circle cx="363" cy="280" r="5.5"/>
<circle cx="181" cy="260" r="7.0"/>
<circle cx="297" cy="298" r="6.0"/>
<circle cx="340" cy="159" r="6.5"/>
<circle cx="174" cy="270" r="6.0"/>
<circle cx="316" cy="297" r="7.0"/>
<circle cx="311" cy="236" r="6.0"/>
<circle cx="188" cy="237" r="5.5"/>
<circle cx="341" cy="154" r="6.0"/>
<circle cx="135" cy="350" r="5.5"/>
<circle cx="176" cy="280" r="6.0"/>
<circle cx="154" cy="357" r="6.5"/>
<circle cx="254" cy="181" r="5.5"/>
<circle cx="296" cy="283" r="6.0"/>
<circle cx="188" cy="223" r="7.0"/>
<circle cx="321" cy="297" r="5.5"/>
<circle cx="170" cy="305" r="6.0"/>
<circle cx="145" cy="445" r="6.5"/>
<circle cx="179" cy="263" r="7.0"/>
<circle cx="154" cy="252" r="6.5"/>
<circle cx="135" cy="334" r="6.0"/>
<circle cx="309" cy="158" r="6.5"/>
<circle cx="168" cy="259" r="7.0"/>
<circle cx="230" cy="289" r="6.5"/>
</g>
<g fill="#1ba1b3">
<circle cx="178" cy="231" r="5.5"/>
<circle cx="275" cy="221" r="6.5"/>
<circle cx="199" cy="300" r="6.0"/>
<circle cx="190" cy="292" r="5.5"/>
<circle cx="150" cy="246" r="6.0"/>
<circle cx="276" cy="261" r="7.0"/>
<circle cx="156" cy="351" r="5.5"/>
<circle cx="172" cy="199" r="6.5"/>
<circle cx="192" cy="270" r="6.5"/>
<circle cx="317" cy="254" r="6.5"/>
<circle cx="201" cy="311" r="7.0"/>
<circle cx="212" cy="298" r="5.5"/>
<circle cx="356" cy="161" r="7.0"/>
<circle cx="341" cy="190" r="6.0"/>
<circle cx="347" cy="283" r="5.5"/>
<circle cx="159" cy="202" r="7.0"/>
<circle cx="255" cy="252" r="6.5"/>
<circle cx="355" cy="174" r="6.5"/>
<circle cx="164" cy="226" r="7.0"/>
<circle cx="196" cy="333" r="6.0"/>
<circle cx="220" cy="253" r="7.0"/>
<circle cx="201" cy="294" r="7.0"/>
<circle cx="327" cy="208" r="6.0"/>
<circle cx="277" cy="303" r="5.5"/>
<circle cx="267" cy="206" r="6.0"/>
<circle cx="276" cy="199" r="6.5"/>
<circle cx="167" cy="328" r="5.5"/>
<circle cx="208" cy="311" r="5.5"/>
<circle cx="211" cy="158" r="6.0"/>
<circle cx="202" cy="336" r="6.5"/>
<circle cx="145" cy="308" r="6.0"/>
<circle cx="208" cy="286" r="6.5"/>
</g>
<g fill="#1da7a3">
<circle cx="141" cy="182" r="6.0"/>
<circle cx="252" cy="215" r="7.0"/>
<circle cx="240" cy="295" r="5.5"/>
<circle cx="292" cy="243" r="7.0"/>
<circle cx="131" cy="158" r="7.0"/>
<circle cx="295" cy="305" r="6.5"/>
<circle cx="233" cy="222" r="6.0"/>
<circle cx="370" cy="203" r="7.0"/>
<circle cx="189" cy="203" r="6.0"/>
<circle cx="144" cy="198" r="5.5"/>
<circle cx="184" cy="229" r="5.5"/>
<circle cx="141" cy="329" r="7.0"/>
<circle cx="207" cy="254" r="7.0"/>
<circle cx="330" cy="207" r="7.0"/>
<circle cx="226" cy="192" r="5.5"/>
<circle cx="284" cy="281" r="6.0"/>
<circle cx="255" cy="240" r="6.5"/>
<circle cx="265" cy="201" r="6.5"/>
<circle cx="204" cy="290" r="7.0"/>
<circle cx="263" cy="190" r="7.0"/>
<circle cx="197" cy="172" r="5.5"/>
</g>
<g fill="#22ae96">
<circle cx="155" cy="319" r="6.0"/>
<circle cx="319" cy="239" r="5.5"/>
<circle cx="294" cy="226" r="5.5"/>
<circle cx="308" cy="288" r="6.0"/>
<circle cx="261" cy="286" r="5.5"/>
<circle cx="331" cy="222" r="6.0"/>
<circle cx="206" cy="238" r="5.5"/>
<circle cx="151" cy="333" r="7.0"/>
<circle cx="296" cy="220" r="6.0"/>
<circle cx="238" cy="223" r="6.5"/>
<circle cx="214" cy="207" r="6.5"/>
<circle cx="321" cy="228" r="7.0"/>
<circle cx="211" cy="186" r="5.5"/>
<circle cx="217" cy="168" r="6.5"/>
<circle cx="349" cy="208" r="6.5"/>
<circle cx="238" cy="308" r="6.5"/>
<circle cx="209" cy="314" r="6.0"/>
<circle cx="245" cy="197" r="6.5"/>
<circle cx="200" cy="304" r="7.0"/>
<circle cx="288" cy="220" r="6.5"/>
<circle cx="268" cy="268" r="7.0"/>
<circle cx="263" cy="294" r="7.0"/>
<circle cx="150" cy="157" r="5.5"/>
<circle cx="254" cy="264" r="6.0"/>
<circle cx="243" cy="207" r="7.0"/>
<circle cx="264" cy="211" r="5.5"/>
</g>
<g fill="#28b48c">
<circle cx="260" cy="288" r="7.0"/>
<circle cx="259" cy="298" r="5.5"/>
<circle cx="164" cy="198" r="6.0"/>
<circle cx="258" cy="207" r="7.0"/>
<circle cx="175" cy="174" r="7.0"/>
<circle cx="258" cy="296" r="6.0"/>
<circle cx="177" cy="324" r="6.0"/>
<circle cx="160" cy="157" r="5.5"/>
<circle cx="243" cy="260" r="7.0"/>
<circle cx="200" cy="242" r="6.0"/>
<circle cx="220" cy="267" r="6.5"/>
<circle cx="157" cy="187" r="5.5"/>
<circle cx="273" cy="291" r="7.0"/>
<circle cx="260" cy="222" r="7.0"/>
<circle cx="271" cy="221" r="7.0"/>
<circle cx="250" cy="226" r="5.5"/>
<circle cx="231" cy="258" r="7.0"/>
<circle cx="270" cy="226" r="6.5"/>
<circle cx="200" cy="163" r="5.5"/>
<circle cx="154" cy="179" r="7.0"/>
<circle cx="166" cy="317" r="7.0"/>
<circle cx="197" cy="189" r="6.5"/>
<circle cx="233" cy="210" r="6.5"/>
<circle cx="234" cy="269" r="7.0"/>
<circle cx="150" cy="162" r="5.5"/>
<circle cx="153" cy="331" r="7.0"/>
</g>
<g fill="#3155ca">
<circle cx="157" cy="295" r="6.0"/>
<circle cx="125" cy="196" r="5.5"/>
<circle cx="143" cy="259" r="7.0"/>
<circle cx="144" cy="266" r="6.5"/>
<circle cx="154" cy="403" r="6.5"/>
<circle cx="386" cy="182" r="7.0"/>
<circle cx="146" cy="357" r="5.5"/>
<circle cx="130" cy="241" r="5.5"/>
<circle cx="162" cy="228" r="5.5"/>
</g>
<g fill="#2c68d0">
<circle cx="354" cy="235" r="7.0"/>
<circle cx="153" cy="372" r="5.5"/>
<circle cx="153" cy="389" r="5.5"/>
<circle cx="145" cy="258" r="6.0"/>
<circle cx="259" cy="175" r="6.5"/>
<circle cx="250" cy="165" r="6.0"/>
<circle cx="392" cy="182" r="6.0"/>
<circle cx="298" cy="195" r="5.5"/>
<circle cx="271" cy="173" r="6.5"/>
<circle cx="351" cy="240" r="7.0"/>
<circle cx="310" cy="164" r="7.0"/>
<circle cx="189" cy="215" r="6.0"/>
<circle cx="363" cy="258" r="6.5"/>
<circle cx="137" cy="361" r="7.0"/>
<circle cx="249" cy="155" r="6.5"/>
<circle cx="382" cy="195" r="6.0"/>
<circle cx="147" cy="300" r="5.5"/>
<circle cx="273" cy="201" r="6.5"/>
<circle cx="395" cy="184" r="6.5"/>
<circle cx="125" cy="412" r="7.0"/>
<circle cx="160" cy="235" r="6.0"/>
<circle cx="129" cy="360" r="6.5"/>
<circle cx="143" cy="382" r="5.5"/>
</g>
<g fill="#1f86cd">
<circle cx="364" cy="223" r="5.5"/>
<circle cx="357" cy="275" r="6.5"/>
<circle cx="164" cy="248" r="5.5"/>
<circle cx="132" cy="416" r="5.5"/>
<circle cx="323" cy="173" r="6.5"/>
<circle cx="352" cy="156" r="6.5"/>
<circle cx="289" cy="235" r="6.0"/>
<circle cx="312" cy="301" r="6.5"/>
<circle cx="169" cy="224" r="6.0"/>
<circle cx="345" cy="184" r="6.0"/>
<circle cx="163" cy="297" r="6.5"/>
<circle cx="335" cy="167" r="6.0"/>
<circle cx="278" cy="170" r="6.0"/>
<circle cx="190" cy="251" r="5.5"/>
<circle cx="287" cy="204" r="6.0"/>
<circle cx="200" cy="272" r="5.5"/>
<circle cx="197" cy="293" r="6.5"/>
<circle cx="389" cy="183" r="5.5"/>
<circle cx="310" cy="203" r="7.0"/>
<circle cx="383" cy="158" r="6.0"/>
<circle cx="311" cy="220" r="6.0"/>
<circle cx="229" cy="295" r="5.5"/>
<circle cx="352" cy="260" r="6.0"/>
<circle cx="256" cy="173" r="5.5"/>
<circle cx="342" cy="170" r="6.0"/>
<circle cx="166" cy="298" r="6.5"/>
<circle cx="150" cy="399" r="6.5"/>
<circle cx="205" cy="338" r="5.5"/>
<circle cx="162" cy="263" r="7.0"/>
<circle cx="270" cy="184" r="7.0"/>
<circle cx="328" cy="283" r="6.0"/>
<circle cx="158" cy="228" r="5.5"/>
<circle cx="137" cy="300" r="6.5"/>
</g>
<g fill="#1b96c2">
<circle cx="370" cy="160" r="6.0"/>
<circle cx="201" cy="327" r="6.5"/>
<circle cx="368" cy="262" r="5.5"/>
<circle cx="335" cy="239" r="6.0"/>
<circle cx="281" cy="159" r="6.5"/>
<circle cx="336" cy="271" r="5.5"/>
<circle cx="139" cy="311" r="5.5"/>
<circle cx="390" cy="164" r="7.0"/>
<circle cx="347" cy="277" r="7.0"/>
<circle cx="298" cy="202" r="6.5"/>
<circle cx="124" cy="157" r="7.0"/>
<circle cx="212" cy="291" r="6.5"/>
<circle cx="320" cy="195" r="7.0"/>
<circle cx="136" cy="347" r="6.5"/>
<circle cx="363" cy="213" r="6.5"/>
<circle cx="181" cy="227" r="6.0"/>
<circle cx="181" cy="301" r="7.0"/>
<circle cx="145" cy="248" r="6.0"/>
<circle cx="194" cy="151" r="6.5"/>
<circle cx="212" cy="274" r="7.0"/>
<circle cx="289" cy="261" r="6.0"/>
<circle cx="338" cy="191" r="5.5"/>
<circle cx="339" cy="264" r="6.5"/>
<circle cx="358" cy="202" r="5.5"/>
<circle cx="266" cy="304" r="7.0"/>
<circle cx="294" cy="213" r="6.5"/>
<circle cx="137" cy="232" r="6.0"/>
<circle cx="207" cy="304" r="5.5"/>
<circle cx="149" cy="356" r="7.0"/>
</g>
<g fill="#1ba1b3">
<circle cx="350" cy="191" r="6.5"/>
<circle cx="336" cy="186" r="5.5"/>
<circle cx="314" cy="243" r="5.5"/>
<circle cx="325" cy="242" r="6.5"/>
<circle cx="354" cy="219" r="5.5"/>
<circle cx="143" cy="306" r="6.5"/>
<circle cx="222" cy="272" r="5.5"/>
<circle cx="158" cy="310" r="5.5"/>
<circle cx="344" cy="165" r="6.0"/>
<circle cx="236" cy="266" r="6.0"/>
<circle cx="339" cy="218" r="5.5"/>
<circle cx="242" cy="299" r="7.0"/>
<circle cx="259" cy="305" r="5.5"/>
<circle cx="150" cy="342" r="5.5"/>
<circle cx="206" cy="213" r="5.5"/>
<circle cx="282" cy="207" r="6.0"/>
<circle cx="169" cy="330" r="7.0"/>
<circle cx="197" cy="301" r="6.0"/>
<circle cx="272" cy="305" r="6.5"/>
<circle cx="130" cy="340" r="7.0"/>
<circle cx="306" cy="158" r="5.5"/>
<circle cx="333" cy="248" r="6.0"/>
<circle cx="206" cy="155" r="5.5"/>
<circle cx="274" cy="203" r="5.5"/>
<circle cx="154" cy="338" r="7.0"/>
<circle cx="196" cy="221" r="6.5"/>
<circle cx="346" cy="156" r="5.5"/>
<circle cx="178" cy="207" r="7.0"/>
<circle cx="228" cy="183" r="7.0"/>
<circle cx="345" cy="192" r="5.5"/>
<circle cx="143" cy="342" r="7.0"/>
</g>
<g fill="#1da7a3">
<circle cx="290" cy="171" r="6.5"/>
<circle cx="257" cy="221" r="7.0"/>
<circle cx="192" cy="191" r="6.0"/>
<circle cx="281" cy="215" r="6.0"/>
<circle cx="133" cy="156" r="7.0"/>
<circle cx="225" cy="201" r="7.0"/>
<circle cx="264" cy="279" r="6.0"/>
<circle cx="179" cy="306" r="6.0"/>
<circle cx="302" cy="199" r="6.5"/>
<circle cx="269" cy="282" r="7.0"/>
<circle cx="197" cy="248" r="7.0"/>
<circle cx="161" cy="208" r="7.0"/>
<circle cx="360" cy="208" r="6.0"/>
<circle cx="226" cy="313" r="5.5"/>
<circle cx="192" cy="300" r="6.0"/>
<circle cx="271" cy="254" r="5.5"/>
<circle cx="320" cy="192" r="6.0"/>
<circle cx="251" cy="195" r="6.0"/>
<circle cx="191" cy="229" r="7.0"/>
<circle cx="290" cy="269" r="6.0"/>
<circle cx="179" cy="184" r="6.0"/>
<circle cx="323" cy="216" r="5.5"/>
<circle cx="196" cy="195" r="7.0"/>
<circle cx="229" cy="180" r="5.5"/>
<circle cx="379" cy="184" r="6.0"/>
<circle cx="268" cy="263" r="6.0"/>
<circle cx="298" cy="231" r="5.5"/>
<circle cx="317" cy="203" r="5.5"/>
<circle cx="209" cy="219" r="7.0"/>
<circle cx="144" cy="171" r="6.5"/>
<circle cx="159" cy="251" r="7.0"/>
<circle cx="180" cy="203" r="6.5"/>
<circle cx="201" cy="315" r="6.5"/>
</g>
<g fill="#22ae96">
<circle cx="301" cy="171" r="6.0"/>
<circle cx="183" cy="160" r="5.5"/>
<circle cx="214" cy="201" r="5.5"/>
<circle cx="196" cy="207" r="6.5"/>
<circle cx="228" cy="299" r="7.0"/>
<circle cx="205" cy="229" r="6.0"/>
<circle cx="276" cy="228" r="6.5"/>
<circle cx="195" cy="314" r="5.5"/>
<circle cx="177" cy="180" r="6.0"/>
<circle cx="268" cy="238" r="5.5"/>
<circle cx="250" cy="317" r="6.0"/>
<circle cx="167" cy="304" r="7.0"/>
<circle cx="292" cy="242" r="7.0"/>
<circle cx="147" cy="196" r="5.5"/>
<circle cx="231" cy="246" r="5.5"/>
<circle cx="238" cy="220" r="7.0"/>
<circle cx="256" cy="303" r="6.0"/>
<circle cx="274" cy="225" r="6.5"/>
<circle cx="220" cy="169" r="6.5"/>
<circle cx="144" cy="183" r="6.0"/>
<circle cx="134" cy="160" r="6.0"/>
</g>
<g fill="#28b48c">
<circle cx="280" cy="279" r="6.0"/>
<circle cx="216" cy="240" r="7.0"/>
<circle cx="220" cy="214" r="7.0"/>
<circle cx="198" cy="181" r="7.0"/>
<circle cx="211" cy="175" r="7.0"/>
<circle cx="202" cy="168" r="6.5"/>
<circle cx="175" cy="185" r="5.5"/>
<circle cx="202" cy="253" r="6.0"/>
<circle cx="303" cy="215" r="7.0"/>
<circle cx="192" cy="198" r="6.5"/>
<circle cx="239" cy="231" r="6.0"/>
<circle cx="263" cy="235" r="7.0"/>
<circle cx="253" cy="281" r="6.0"/>
<circle cx="173" cy="173" r="5.5"/>
<circle cx="324" cy="214" r="6.5"/>
<circle cx="238" cy="291" r="5.5"/>
<circle cx="250" cy="259" r="7.0"/>
<circle cx="167" cy="191" r="7.0"/>
<circle cx="187" cy="317" r="5.5"/>
<circle cx="221" cy="218" r="6.0"/>
<circle cx="168" cy="172" r="5.5"/>
<circle cx="208" cy="169" r="7.0"/>
<circle cx="239" cy="212" r="7.0"/>
<circle cx="175" cy="159" r="7.0"/>
<circle cx="206" cy="264" r="5.5"/>
<circle cx="218" cy="229" r="6.0"/>
<circle cx="213" cy="235" r="6.0"/>
</g>
<g fill="#2c68d0">
<circle cx="261" cy="159" r="5.5"/>
</g>
<g fill="#1f86cd">
<circle cx="374" cy="154" r="7.0"/>
<circle cx="228" cy="325" r="7.0"/>
<circle cx="239" cy="279" r="5.5"/>
<circle cx="233" cy="332" r="5.5"/>
<circle cx="220" cy="205" r="6.0"/>
<circle cx="247" cy="157" r="7.0"/>
<circle cx="158" cy="209" r="7.0"/>
<circle cx="139" cy="391" r="5.5"/>
<circle cx="210" cy="293" r="6.0"/>
<circle cx="124" cy="361" r="7.0"/>
<circle cx="206" cy="337" r="7.0"/>
<circle cx="215" cy="341" r="7.0"/>
<circle cx="384" cy="175" r="6.0"/>
</g>
<g fill="#1b96c2">
<circle cx="141" cy="319" r="5.5"/>
<circle cx="344" cy="159" r="5.5"/>
<circle cx="157" cy="245" r="7.0"/>
<circle cx="180" cy="163" r="6.0"/>
<circle cx="184" cy="289" r="6.5"/>
<circle cx="165" cy="222" r="7.0"/>
<circle cx="138" cy="196" r="6.5"/>
<circle cx="172" cy="208" r="7.0"/>
<circle cx="129" cy="305" r="5.5"/>
<circle cx="351" cy="199" r="7.0"/>
<circle cx="148" cy="369" r="6.0"/>
<circle cx="354" cy="231" r="5.5"/>
<circle cx="169" cy="242" r="6.5"/>
<circle cx="181" cy="253" r="7.0"/>
<circle cx="206" cy="262" r="5.5"/>
<circle cx="186" cy="332" r="5.5"/>
<circle cx="168" cy="339" r="6.0"/>
<circle cx="285" cy="248" r="7.0"/>
<circle cx="198" cy="215" r="6.5"/>
<circle cx="286" cy="272" r="5.5"/>
<circle cx="146" cy="340" r="5.5"/>
<circle cx="145" cy="364" r="7.0"/>
<circle cx="202" cy="275" r="6.0"/>
<circle cx="322" cy="179" r="6.5"/>
<circle cx="156" cy="260" r="6.0"/>
<circle cx="143" cy="221" r="7.0"/>
<circle cx="344" cy="260" r="5.5"/>
<circle cx="290" cy="201" r="5.5"/>
<circle cx="327" cy="262" r="7.0"/>
<circle cx="172" cy="324" r="7.0"/>
<circle cx="305" cy="256" r="5.5"/>
<circle cx="299" cy="245" r="6.5"/>
<circle cx="137" cy="342" r="5.5"/>
<circle cx="227" cy="295" r="7.0"/>
<circle cx="335" cy="181" r="6.0"/>
<circle cx="390" cy="168" r="7.0"/>
<circle cx="389" cy="191" r="7.0"/>
<circle cx="316" cy="252" r="6.5"/>
<circle cx="194" cy="329" r="6.5"/>
<circle cx="158" cy="205" r="7.0"/>
<circle cx="189" cy="181" r="6.5"/>
<circle cx="357" cy="153" r="6.0"/>
<circle cx="218" cy="312" r="5.5"/>
<circle cx="325" cy="189" r="5.5"/>
<circle cx="374" cy="163" r="5.5"/>
<circle cx="200" cy="208" r="6.5"/>
</g>
<g fill="#1ba1b3">
<circle cx="313" cy="263" r="5.5"/>
<circle cx="221" cy="279" r="6.5"/>
<circle cx="217" cy="307" r="6.0"/>
<circle cx="214" cy="322" r="7.0"/>
<circle cx="223" cy="198" r="7.0"/>
<circle cx="180" cy="327" r="6.0"/>
<circle cx="128" cy="177" r="7.0"/>
<circle cx="191" cy="193" r="7.0"/>
<circle cx="343" cy="165" r="6.0"/>
<circle cx="340" cy="238" r="5.5"/>
<circle cx="152" cy="163" r="6.5"/>
<circle cx="301" cy="208" r="7.0"/>
<circle cx="306" cy="237" r="7.0"/>
<circle cx="218" cy="333" r="6.5"/>
<circle cx="353" cy="266" r="6.0"/>
<circle cx="276" cy="266" r="5.5"/>
<circle cx="341" cy="280" r="6.5"/>
<circle cx="193" cy="279" r="7.0"/>
<circle cx="125" cy="332" r="6.5"/>
<circle cx="279" cy="272" r="6.0"/>
<circle cx="221" cy="184" r="5.5"/>
<circle cx="316" cy="177" r="6.0"/>
<circle cx="368" cy="213" r="6.5"/>
<circle cx="151" cy="312" r="5.5"/>
<circle cx="142" cy="168" r="6.0"/>
<circle cx="281" cy="250" r="5.5"/>
<circle cx="278" cy="214" r="5.5"/>
<circle cx="269" cy="300" r="6.0"/>
<circle cx="290" cy="255" r="7.0"/>
<circle cx="347" cy="233" r="5.5"/>
<circle cx="211" cy="262" r="5.5"/>
</g>
<g fill="#1da7a3">
<circle cx="206" cy="248" r="6.5"/>
<circle cx="171" cy="197" r="5.5"/>
<circle cx="308" cy="251" r="6.0"/>
<circle cx="241" cy="322" r="6.0"/>
<circle cx="212" cy="208" r="6.0"/>
<circle cx="344" cy="193" r="7.0"/>
<circle cx="231" cy="169" r="5.5"/>
<circle cx="246" cy="340" r="6.0"/>
<circle cx="197" cy="167" r="6.5"/>
<circle cx="250" cy="288" r="6.0"/>
<circle cx="316" cy="240" r="5.5"/>
<circle cx="264" cy="290" r="7.0"/>
<circle cx="232" cy="196" r="6.0"/>
<circle cx="265" cy="215" r="6.5"/>
<circle cx="336" cy="210" r="6.0"/>
<circle cx="225" cy="255" r="6.5"/>
<circle cx="298" cy="274" r="7.0"/>
<circle cx="150" cy="168" r="7.0"/>
<circle cx="176" cy="306" r="7.0"/>
<circle cx="241" cy="309" r="6.0"/>
<circle cx="348" cy="211" r="6.0"/>
<circle cx="246" cy="201" r="5.5"/>
<circle cx="356" cy="210" r="7.0"/>
<circle cx="234" cy="157" r="6.0"/>
<circle cx="184" cy="190" r="5.5"/>
<circle cx="300" cy="178" r="6.5"/>
<circle cx="342" cy="186" r="7.0"/>
<circle cx="210" cy="312" r="6.5"/>
<circle cx="293" cy="279" r="6.5"/>
<circle cx="243" cy="190" r="7.0"/>
<circle cx="166" cy="196" r="6.0"/>
<circle cx="314" cy="214" r="7.0"/>
<circle cx="174" cy="219" r="7.0"/>
<circle cx="184" cy="294" r="6.5"/>
<circle cx="164" cy="183" r="5.5"/>
<circle cx="313" cy="227" r="6.5"/>
<circle cx="221" cy="274" r="7.0"/>
<circle cx="322" cy="287" r="6.5"/>
<circle cx="186" cy="222" r="7.0"/>
<circle cx="239" cy="303" r="6.0"/>
<circle cx="248" cy="309" r="6.0"/>
<circle cx="284" cy="158" r="6.0"/>
<circle cx="310" cy="253" r="5.5"/>
<circle cx="207" cy="301" r="7.0"/>
<circle cx="234" cy="236" r="6.5"/>
<circle cx="290" cy="274" r="6.0"/>
<circle cx="311" cy="216" r="6.0"/>
<circle cx="265" cy="253" r="6.5"/>
<circle cx="218" cy="222" r="6.5"/>
<circle cx="132" cy="169" r="6.5"/>
<circle cx="206" cy="313" r="6.5"/>
<circle cx="135" cy="236" r="6.0"/>
</g>
<g fill="#22ae96">
<circle cx="226" cy="245" r="6.5"/>
<circle cx="285" cy="223" r="5.5"/>
<circle cx="152" cy="317" r="6.5"/>
<circle cx="153" cy="325" r="6.0"/>
<circle cx="162" cy="192" r="6.0"/>
<circle cx="303" cy="177" r="5.5"/>
<circle cx="273" cy="212" r="6.5"/>
<circle cx="256" cy="191" r="7.0"/>
<circle cx="343" cy="215" r="6.0"/>
<circle cx="198" cy="185" r="6.5"/>
<circle cx="184" cy="174" r="5.5"/>
<circle cx="347" cy="216" r="6.5"/>
<circle cx="185" cy="304" r="7.0"/>
<circle cx="266" cy="286" r="6.5"/>
<circle cx="337" cy="157" r="5.5"/>
<circle cx="228" cy="221" r="6.5"/>
<circle cx="201" cy="249" r="7.0"/>
<circle cx="198" cy="210" r="5.5"/>
<circle cx="263" cy="203" r="7.0"/>
<circle cx="202" cy="321" r="5.5"/>
<circle cx="329" cy="191" r="6.0"/>
<circle cx="223" cy="181" r="7.0"/>
<circle cx="277" cy="254" r="5.5"/>
<circle cx="321" cy="263" r="6.0"/>
<circle cx="293" cy="287" r="7.0"/>
<circle cx="331" cy="226" r="6.0"/>
<circle cx="193" cy="236" r="5.5"/>
<circle cx="227" cy="304" r="7.0"/>
<circle cx="245" cy="272" r="5.5"/>
<circle cx="195" cy="261" r="6.0"/>
<circle cx="234" cy="251" r="6.0"/>
<circle cx="322" cy="218" r="7.0"/>
<circle cx="296" cy="210" r="6.0"/>
<circle cx="159" cy="311" r="7.0"/>
</g>
<g fill="#28b48c">
<circle cx="247" cy="301" r="6.0"/>
<circle cx="240" cy="200" r="6.0"/>
<circle cx="181" cy="174" r="6.0"/>
<circle cx="262" cy="281" r="7.0"/>
<circle cx="270" cy="233" r="7.0"/>
<circle cx="180" cy="309" r="5.5"/>
<circle cx="191" cy="164" r="7.0"/>
<circle cx="184" cy="301" r="6.0"/>
<circle cx="253" cy="249" r="6.5"/>
<circle cx="250" cy="240" r="7.0"/>
<circle cx="246" cy="230" r="6.0"/>
<circle cx="178" cy="312" r="5.5"/>
<circle cx="229" cy="202" r="6.0"/>
<circle cx="192" cy="177" r="7.0"/>
<circle cx="162" cy="184" r="5.5"/>
<circle cx="173" cy="191" r="6.5"/>
<circle cx="192" cy="171" r="5.5"/>
<circle cx="195" cy="312" r="7.0"/>
<circle cx="148" cy="174" r="5.5"/>
<circle cx="232" cy="235" r="6.5"/>
<circle cx="215" cy="215" r="5.5"/>
<circle cx="217" cy="234" r="6.5"/>
<circle cx="233" cy="216" r="6.5"/>
<circle cx="157" cy="324" r="6.0"/>
<circle cx="217" cy="224" r="5.5"/>
<circle cx="240" cy="277" r="6.5"/>
<circle cx="211" cy="230" r="7.0"/>
<circle cx="243" cy="269" r="7.0"/>
<circle cx="163" cy="166" r="6.0"/>
</g>
<g fill="#1b96c2">
<circle cx="230" cy="336" r="6.0"/>
</g>
<g fill="#1ba1b3">
<circle cx="190" cy="184" r="6.5"/>
<circle cx="176" cy="338" r="7.0"/>
<circle cx="200" cy="154" r="6.0"/>
<circle cx="138" cy="315" r="6.0"/>
<circle cx="356" cy="204" r="6.0"/>
<circle cx="221" cy="164" r="7.0"/>
<circle cx="183" cy="237" r="5.5"/>
<circle cx="297" cy="266" r="6.5"/>
<circle cx="357" cy="186" r="6.5"/>
<circle cx="367" cy="185" r="5.5"/>
<circle cx="260" cy="187" r="6.0"/>
<circle cx="198" cy="326" r="6.0"/>
<circle cx="234" cy="196" r="6.5"/>
<circle cx="228" cy="309" r="7.0"/>
<circle cx="174" cy="170" r="6.0"/>
<circle cx="227" cy="322" r="7.0"/>
<circle cx="328" cy="281" r="5.5"/>
<circle cx="205" cy="159" r="5.5"/>
<circle cx="237" cy="295" r="5.5"/>
<circle cx="139" cy="197" r="5.5"/>
<circle cx="198" cy="243" r="6.5"/>
<circle cx="315" cy="184" r="6.0"/>
<circle cx="239" cy="181" r="6.5"/>
</g>
<g fill="#1da7a3">
<circle cx="141" cy="235" r="7.0"/>
<circle cx="152" cy="178" r="7.0"/>
<circle cx="141" cy="204" r="6.0"/>
<circle cx="201" cy="190" r="6.5"/>
<circle cx="169" cy="154" r="6.5"/>
<circle cx="282" cy="244" r="5.5"/>
<circle cx="217" cy="180" r="5.5"/>
<circle cx="220" cy="239" r="5.5"/>
<circle cx="313" cy="271" r="6.0"/>
<circle cx="222" cy="323" r="5.5"/>
<circle cx="234" cy="176" r="5.5"/>
<circle cx="142" cy="230" r="6.5"/>
<circle cx="363" cy="205" r="5.5"/>
<circle cx="166" cy="152" r="7.0"/>
<circle cx="277" cy="276" r="7.0"/>
<circle cx="188" cy="287" r="5.5"/>
<circle cx="208" cy="322" r="6.5"/>
<circle cx="237" cy="324" r="5.5"/>
<circle cx="135" cy="169" r="6.0"/>
<circle cx="268" cy="293" r="7.0"/>
<circle cx="240" cy="167" r="6.5"/>
<circle cx="212" cy="163" r="6.5"/>
<circle cx="249" cy="299" r="5.5"/>
<circle cx="193" cy="245" r="7.0"/>
<circle cx="240" cy="216" r="6.0"/>
<circle cx="254" cy="229" r="6.0"/>
<circle cx="280" cy="211" r="6.0"/>
<circle cx="324" cy="218" r="6.5"/>
<circle cx="278" cy="241" r="5.5"/>
<circle cx="185" cy="209" r="7.0"/>
<circle cx="276" cy="284" r="6.0"/>
<circle cx="306" cy="203" r="6.0"/>
<circle cx="247" cy="176" r="7.0"/>
<circle cx="185" cy="216" r="6.5"/>
<circle cx="349" cy="187" r="6.5"/>
<circle cx="209" cy="213" r="6.5"/>
<circle cx="141" cy="151" r="6.5"/>
<circle cx="234" cy="184" r="6.0"/>
<circle cx="262" cy="200" r="7.0"/>
<circle cx="308" cy="280" r="6.5"/>
<circle cx="230" cy="232" r="6.0"/>
<circle cx="245" cy="274" r="7.0"/>
<circle cx="197" cy="201" r="5.5"/>
<circle cx="348" cy="173" r="5.5"/>
<circle cx="235" cy="315" r="7.0"/>
</g>
<g fill="#22ae96">
<circle cx="177" cy="198" r="6.0"/>
<circle cx="181" cy="313" r="5.5"/>
<circle cx="152" cy="197" r="5.5"/>
<circle cx="252" cy="272" r="7.0"/>
<circle cx="262" cy="196" r="7.0"/>
<circle cx="245" cy="226" r="6.0"/>
<circle cx="280" cy="293" r="7.0"/>
<circle cx="211" cy="223" r="6.5"/>
<circle cx="209" cy="239" r="6.0"/>
<circle cx="339" cy="194" r="6.0"/>
<circle cx="300" cy="203" r="6.0"/>
<circle cx="239" cy="238" r="5.5"/>
<circle cx="164" cy="325" r="6.0"/>
<circle cx="299" cy="277" r="6.0"/>
<circle cx="308" cy="209" r="5.5"/>
<circle cx="203" cy="186" r="6.5"/>
<circle cx="319" cy="275" r="7.0"/>
<circle cx="220" cy="237" r="6.0"/>
<circle cx="242" cy="244" r="6.5"/>
<circle cx="264" cy="258" r="6.0"/>
<circle cx="188" cy="337" r="6.5"/>
<circle cx="275" cy="211" r="5.5"/>
<circle cx="191" cy="333" r="6.5"/>
<circle cx="220" cy="232" r="6.5"/>
<circle cx="215" cy="252" r="6.0"/>
<circle cx="224" cy="250" r="5.5"/>
<circle cx="222" cy="307" r="5.5"/>
<circle cx="218" cy="209" r="6.0"/>
<circle cx="170" cy="322" r="7.0"/>
<circle cx="249" cy="297" r="7.0"/>
<circle cx="337" cy="217" r="6.0"/>
<circle cx="190" cy="308" r="6.0"/>
<circle cx="323" cy="185" r="5.5"/>
<circle cx="236" cy="179" r="6.0"/>
<circle cx="209" cy="252" r="7.0"/>
<circle cx="269" cy="214" r="5.5"/>
<circle cx="256" cy="224" r="5.5"/>
<circle cx="245" cy="208" r="6.0"/>
<circle cx="315" cy="212" r="5.5"/>
<circle cx="306" cy="275" r="6.5"/>
<circle cx="254" cy="210" r="7.0"/>
<circle cx="149" cy="201" r="5.5"/>
<circle cx="191" cy="325" r="6.0"/>
<circle cx="180" cy="191" r="5.5"/>
<circle cx="231" cy="302" r="6.5"/>
<circle cx="223" cy="245" r="6.5"/>
<circle cx="148" cy="315" r="6.0"/>
<circle cx="219" cy="250" r="5.5"/>
<circle cx="163" cy="331" r="6.0"/>
<circle cx="332" cy="168" r="6.5"/>
<circle cx="299" cy="231" r="5.5"/>
<circle cx="263" cy="259" r="7.0"/>
<circle cx="241" cy="291" r="6.0"/>
<circle cx="151" cy="152" r="7.0"/>
<circle cx="173" cy="309" r="6.0"/>
<circle cx="170" cy="168" r="7.0"/>
<circle cx="347" cy="219" r="5.5"/>
<circle cx="186" cy="166" r="7.0"/>
<circle cx="200" cy="215" r="7.0"/>
<circle cx="258" cy="282" r="6.0"/>
<circle cx="296" cy="233" r="5.5"/>
<circle cx="297" cy="288" r="7.0"/>
<circle cx="224" cy="230" r="7.0"/>
</g>
<g fill="#28b48c">
<circle cx="258" cy="193" r="6.0"/>
<circle cx="255" cy="214" r="5.5"/>
<circle cx="234" cy="281" r="6.0"/>
<circle cx="154" cy="161" r="6.0"/>
<circle cx="202" cy="236" r="5.5"/>
<circle cx="162" cy="174" r="5.5"/>
<circle cx="313" cy="285" r="6.0"/>
<circle cx="263" cy="270" r="5.5"/>
<circle cx="264" cy="274" r="6.5"/>
<circle cx="338" cy="207" r="6.0"/>
<circle cx="261" cy="242" r="5.5"/>
<circle cx="158" cy="173" r="6.5"/>
<circle cx="313" cy="244" r="7.0"/>
<circle cx="217" cy="166" r="6.0"/>
<circle cx="224" cy="172" r="6.0"/>
<circle cx="245" cy="250" r="6.0"/>
<circle cx="319" cy="208" r="6.5"/>
<circle cx="260" cy="229" r="5.5"/>
<circle cx="174" cy="321" r="5.5"/>
<circle cx="247" cy="296" r="6.5"/>
<circle cx="270" cy="295" r="6.0"/>
<circle cx="172" cy="184" r="6.0"/>
<circle cx="224" cy="271" r="6.0"/>
<circle cx="145" cy="164" r="5.5"/>
<circle cx="193" cy="220" r="5.5"/>
<circle cx="352" cy="215" r="5.5"/>
<circle cx="190" cy="226" r="6.0"/>
<circle cx="171" cy="179" r="7.0"/>
<circle cx="160" cy="172" r="6.0"/>
<circle cx="266" cy="247" r="5.5"/>
<circle cx="153" cy="176" r="5.5"/>
<circle cx="264" cy="227" r="7.0"/>
<circle cx="246" cy="281" r="5.5"/>
<circle cx="223" cy="212" r="7.0"/>
<circle cx="324" cy="207" r="7.0"/>
<circle cx="154" cy="170" r="6.0"/>
<circle cx="249" cy="218" r="6.5"/>
<circle cx="249" cy="264" r="6.5"/>
<circle cx="285" cy="217" r="7.0"/>
<circle cx="157" cy="152" r="7.0"/>
<circle cx="185" cy="178" r="7.0"/>
<circle cx="273" cy="268" r="7.0"/>
<circle cx="271" cy="264" r="6.5"/>
<circle cx="232" cy="204" r="6.5"/>
<circle cx="245" cy="266" r="7.0"/>
<circle cx="232" cy="224" r="6.5"/>
<circle cx="229" cy="253" r="6.5"/>
<circle cx="281" cy="235" r="6.0"/>
<circle cx="251" cy="234" r="7.0"/>
<circle cx="200" cy="162" r="6.5"/>
<circle cx="235" cy="166" r="7.0"/>
<circle cx="234" cy="191" r="5.5"/>
<circle cx="339" cy="205" r="7.0"/>
<circle cx="286" cy="304" r="7.0"/>
<circle cx="189" cy="319" r="7.0"/>
<circle cx="224" cy="233" r="7.0"/>
<circle cx="178" cy="166" r="6.5"/>
<circle cx="348" cy="202" r="6.0"/>
<circle cx="319" cy="226" r="6.0"/>
<circle cx="157" cy="332" r="5.5"/>
<circle cx="177" cy="335" r="7.0"/>
<circle cx="264" cy="229" r="7.0"/>
<circle cx="236" cy="216" r="6.0"/>
<circle cx="224" cy="281" r="5.5"/>
<circle cx="164" cy="335" r="6.5"/>
<circle cx="324" cy="243" r="6.5"/>
<circle cx="246" cy="215" r="7.0"/>
<circle cx="278" cy="300" r="6.0"/>
<circle cx="247" cy="246" r="6.5"/>
<circle cx="202" cy="246" r="5.5"/>
<circle cx="215" cy="254" r="6.0"/>
<circle cx="168" cy="161" r="5.5"/>
<circle cx="225" cy="224" r="6.5"/>
<circle cx="260" cy="215" r="5.5"/>
</g>
</g>
<rect x="382.3" y="171" width="49.4" height="30" fill="#2e8c6a" opacity="0.93"/>
<path d="M425.5 171H431.7V201H419.5L421.8 191.3L426.4 179.7Z" fill="#125e5c" opacity="0.9"/>
<path d="M382.3 186L392 183L401 201H382.3Z" fill="#30a266" opacity="0.75"/>
<circle cx="401" cy="179" r="6" fill="#2a9482" opacity="0.7"/>
<g filter="url(#bl)">
<circle cx="381.8" cy="207.0" r="4" fill="#2b6bd0"/>
<circle cx="381.1" cy="210.9" r="4" fill="#2c67d0"/>
<circle cx="381.4" cy="214.8" r="4" fill="#2d65cf"/>
<circle cx="380.8" cy="218.7" r="4" fill="#247ace"/>
<circle cx="380.9" cy="222.7" r="4" fill="#2e60ce"/>
<circle cx="381.8" cy="226.6" r="4" fill="#2181cd"/>
<circle cx="381.3" cy="230.5" r="4" fill="#227ece"/>
<circle cx="381.4" cy="234.4" r="4" fill="#237cce"/>
<circle cx="380.8" cy="238.3" r="4" fill="#3059cb"/>
<circle cx="381.5" cy="242.2" r="4" fill="#2e5fcd"/>
<circle cx="381.4" cy="246.1" r="4" fill="#2a6cd0"/>
<circle cx="381.3" cy="250.0" r="4" fill="#2f5bcc"/>
<circle cx="381.8" cy="254.0" r="4" fill="#2f5ccc"/>
<circle cx="381.2" cy="257.9" r="4" fill="#2f5ecd"/>
<circle cx="380.7" cy="261.8" r="4" fill="#2f5dcc"/>
<circle cx="381.4" cy="265.7" r="4" fill="#324fc8"/>
<circle cx="381.5" cy="269.6" r="4" fill="#3156ca"/>
<circle cx="381.8" cy="273.5" r="4" fill="#3252c9"/>
<circle cx="380.8" cy="277.4" r="4" fill="#2e60ce"/>
<circle cx="381.0" cy="281.3" r="4" fill="#2e5fcd"/>
<circle cx="381.5" cy="285.3" r="4" fill="#344bc7"/>
<circle cx="381.3" cy="289.2" r="4" fill="#3157cb"/>
<circle cx="381.8" cy="293.1" r="4" fill="#3540c2"/>
<circle cx="381.1" cy="297.0" r="4" fill="#323dbe"/>
<circle cx="381.0" cy="206.6" r="3.4" fill="#1c8ccc"/>
<circle cx="384.6" cy="206.4" r="3.4" fill="#237cce"/>
<circle cx="388.1" cy="206.4" r="3.4" fill="#2a6cd0"/>
<circle cx="391.7" cy="206.7" r="3.4" fill="#2e60ce"/>
<circle cx="395.2" cy="207.0" r="3.4" fill="#3156ca"/>
<circle cx="398.8" cy="206.4" r="3.4" fill="#334cc7"/>
<circle cx="402.3" cy="206.6" r="3.4" fill="#3642c4"/>
<circle cx="405.9" cy="206.5" r="3.4" fill="#2e37b8"/>
<circle cx="409.4" cy="206.7" r="3.4" fill="#262cab"/>
<circle cx="413.0" cy="206.5" r="3.4" fill="#1e209f"/>
</g>
<g fill="none" stroke="#8a5050" stroke-width="1.3" opacity="0.9">
<rect x="272.5" y="226.3" width="4.0" height="3.0" rx="1"/>
<rect x="279.1" y="219.6" width="4.0" height="3.0" rx="1"/>
<rect x="270.8" y="222.2" width="5.0" height="3.0" rx="1"/>
<rect x="277.4" y="233.0" width="4.0" height="2.5" rx="1"/>
<rect x="279.1" y="226.7" width="4.0" height="2.5" rx="1"/>
<rect x="271.4" y="224.9" width="5.0" height="2.5" rx="1"/>
<rect x="249.0" y="224.0" width="6.0" height="2.5" rx="1"/>
<rect x="267.4" y="222.2" width="7.0" height="2.5" rx="1"/>
<rect x="276.2" y="237.6" width="5.0" height="3.0" rx="1"/>
<rect x="271.7" y="216.6" width="7.0" height="2.0" rx="1"/>
<rect x="265.1" y="226.4" width="6.0" height="3.0" rx="1"/>
<rect x="276.0" y="223.3" width="7.0" height="2.0" rx="1"/>
<rect x="261.7" y="231.4" width="4.0" height="3.0" rx="1"/>
<rect x="266.5" y="226.5" width="5.0" height="2.0" rx="1"/>
<rect x="257.3" y="231.5" width="4.0" height="3.0" rx="1"/>
<rect x="256.7" y="235.3" width="4.0" height="2.0" rx="1"/>
<rect x="259.5" y="238.2" width="6.0" height="3.0" rx="1"/>
<rect x="259.1" y="268.9" width="6.0" height="3.0" rx="1"/>
<rect x="233.6" y="266.5" width="6.0" height="3.0" rx="1"/>
<rect x="235.0" y="262.6" width="5.0" height="2.0" rx="1"/>
<rect x="238.3" y="271.0" width="6.0" height="2.5" rx="1"/>
<rect x="234.8" y="268.0" width="6.0" height="2.5" rx="1"/>
<rect x="235.2" y="270.6" width="7.0" height="3.0" rx="1"/>
<rect x="252.4" y="259.5" width="6.0" height="2.0" rx="1"/>
<rect x="248.6" y="262.3" width="5.0" height="3.0" rx="1"/>
<rect x="245.0" y="266.0" width="4.0" height="2.5" rx="1"/>
<rect x="249.6" y="260.4" width="4.0" height="2.0" rx="1"/>
<rect x="244.2" y="289.5" width="4.0" height="2.5" rx="1"/>
<rect x="223.8" y="292.1" width="5.0" height="2.0" rx="1"/>
<rect x="239.9" y="290.0" width="7.0" height="2.5" rx="1"/>
<rect x="225.0" y="286.1" width="4.0" height="3.0" rx="1"/>
<rect x="221.9" y="293.1" width="5.0" height="3.0" rx="1"/>
<rect x="229.5" y="288.4" width="5.0" height="3.0" rx="1"/>
<rect x="256.1" y="302.3" width="7.0" height="2.0" rx="1"/>
<rect x="256.1" y="300.6" width="7.0" height="3.0" rx="1"/>
<rect x="244.7" y="292.7" width="6.0" height="2.0" rx="1"/>
<rect x="261.7" y="291.8" width="5.0" height="3.0" rx="1"/>
<rect x="274.3" y="286.6" width="4.0" height="3.0" rx="1"/>
<rect x="262.1" y="299.0" width="6.0" height="2.0" rx="1"/>
<rect x="262.6" y="296.1" width="7.0" height="2.0" rx="1"/>
<rect x="258.1" y="313.5" width="5.0" height="3.0" rx="1"/>
<rect x="243.6" y="312.9" width="6.0" height="2.0" rx="1"/>
<rect x="225.8" y="327.2" width="7.0" height="2.5" rx="1"/>
<rect x="241.9" y="326.9" width="7.0" height="2.0" rx="1"/>
<rect x="241.9" y="322.8" width="6.0" height="3.0" rx="1"/>
<rect x="250.2" y="313.2" width="6.0" height="2.0" rx="1"/>
<rect x="228.2" y="323.3" width="4.0" height="2.5" rx="1"/>
<rect x="253.5" y="307.8" width="6.0" height="3.0" rx="1"/>
<rect x="239.0" y="316.0" width="5.0" height="3.0" rx="1"/>
<rect x="235.4" y="337.7" width="5.0" height="3.0" rx="1"/>
<rect x="236.3" y="337.6" width="5.0" height="2.0" rx="1"/>
<rect x="232.1" y="333.4" width="7.0" height="2.0" rx="1"/>
<rect x="247.9" y="337.0" width="5.0" height="2.0" rx="1"/>
<rect x="127.8" y="249.3" width="7.0" height="2.0" rx="1"/>
<rect x="128.2" y="260.0" width="4.0" height="2.0" rx="1"/>
<rect x="128.4" y="261.6" width="5.0" height="2.5" rx="1"/>
<rect x="132.3" y="273.9" width="6.0" height="3.0" rx="1"/>
<rect x="122.5" y="256.8" width="4.0" height="2.0" rx="1"/>
<rect x="130.1" y="246.4" width="5.0" height="3.0" rx="1"/>
<rect x="120.1" y="256.9" width="7.0" height="3.0" rx="1"/>
<rect x="110.3" y="279.0" width="6.0" height="2.0" rx="1"/>
<rect x="118.2" y="286.4" width="7.0" height="3.0" rx="1"/>
<rect x="115.5" y="293.7" width="6.0" height="2.5" rx="1"/>
<rect x="117.6" y="277.0" width="4.0" height="3.0" rx="1"/>
<rect x="120.0" y="303.2" width="4.0" height="2.0" rx="1"/>
<rect x="114.5" y="288.2" width="6.0" height="3.0" rx="1"/>
<rect x="181.7" y="256.1" width="4.0" height="3.0" rx="1"/>
<rect x="170.2" y="259.6" width="5.0" height="2.0" rx="1"/>
<rect x="173.9" y="258.3" width="6.0" height="2.5" rx="1"/>
<rect x="203.6" y="281.7" width="7.0" height="3.0" rx="1"/>
<rect x="198.3" y="284.2" width="6.0" height="2.0" rx="1"/>
<rect x="191.0" y="278.3" width="4.0" height="2.0" rx="1"/>
<rect x="166.3" y="303.5" width="7.0" height="2.5" rx="1"/>
<rect x="166.5" y="297.4" width="4.0" height="2.5" rx="1"/>
<rect x="162.2" y="309.9" width="4.0" height="2.0" rx="1"/>
<rect x="166.4" y="308.5" width="5.0" height="2.0" rx="1"/>
<rect x="325.5" y="248.5" width="5.0" height="3.0" rx="1"/>
<rect x="321.0" y="250.2" width="6.0" height="2.5" rx="1"/>
<rect x="302.2" y="279.2" width="7.0" height="2.5" rx="1"/>
<rect x="294.8" y="280.8" width="5.0" height="3.0" rx="1"/>
<rect x="294.9" y="280.4" width="5.0" height="2.0" rx="1"/>
<rect x="325.8" y="269.7" width="7.0" height="3.0" rx="1"/>
<rect x="328.0" y="272.0" width="5.0" height="2.0" rx="1"/>
<rect x="208.1" y="298.0" width="5.0" height="2.0" rx="1"/>
<rect x="210.7" y="297.7" width="4.0" height="3.0" rx="1"/>
<rect x="211.1" y="294.1" width="5.0" height="2.0" rx="1"/>
<rect x="120.2" y="213.9" width="7.0" height="2.5" rx="1"/>
<rect x="121.5" y="213.9" width="7.0" height="3.0" rx="1"/>
<rect x="115.9" y="328.8" width="5.0" height="3.0" rx="1"/>
<rect x="118.9" y="328.6" width="5.0" height="2.0" rx="1"/>
</g>
<g fill="#a03838" opacity="0.8">
<rect x="139.1" y="397.5" width="4.0" height="3.0"/>
<rect x="125.4" y="397.7" width="3.0" height="2.0"/>
<rect x="133.9" y="396.0" width="5.0" height="2.0"/>
<rect x="134.9" y="394.4" width="5.0" height="3.0"/>
<rect x="130.1" y="402.5" width="3.0" height="2.0"/>
<rect x="153.4" y="394.4" width="5.0" height="2.0"/>
<rect x="119.9" y="398.8" width="3.0" height="3.0"/>
<rect x="143.3" y="401.3" width="4.0" height="3.0"/>
<rect x="117.3" y="396.4" width="4.0" height="2.0"/>
<rect x="146.9" y="399.3" width="3.0" height="2.0"/>
<rect x="115.1" y="399.7" width="5.0" height="3.0"/>
<rect x="141.9" y="401.0" width="4.0" height="2.0"/>
<rect x="124.4" y="400.2" width="3.0" height="3.0"/>
<rect x="125.9" y="394.7" width="5.0" height="2.0"/>
<rect x="131.8" y="399.9" width="5.0" height="3.0"/>
<rect x="126.9" y="396.9" width="4.0" height="3.0"/>
<rect x="125.5" y="399.0" width="5.0" height="3.0"/>
<rect x="139.9" y="398.7" width="5.0" height="2.0"/>
<rect x="136.6" y="396.8" width="5.0" height="2.0"/>
<rect x="136.0" y="398.3" width="5.0" height="2.0"/>
<rect x="146.2" y="398.3" width="5.0" height="2.0"/>
<rect x="132.6" y="396.7" width="4.0" height="3.0"/>
<rect x="141.9" y="392.7" width="4.0" height="3.0"/>
<rect x="113.9" y="397.0" width="5.0" height="3.0"/>
<rect x="114.5" y="392.3" width="3.0" height="3.0"/>
<rect x="133.0" y="397.1" width="3.0" height="3.0"/>
<rect x="138.7" y="392.7" width="5.0" height="3.0"/>
<rect x="133.6" y="391.5" width="3.0" height="3.0"/>
<rect x="140.9" y="395.8" width="4.0" height="3.0"/>
<rect x="137.8" y="401.8" width="3.0" height="2.0"/>
<rect x="124.9" y="392.1" width="5.0" height="3.0"/>
<rect x="116.7" y="396.2" width="3.0" height="3.0"/>
<rect x="136.7" y="393.8" width="3.0" height="2.0"/>
<rect x="130.4" y="397.2" width="4.0" height="2.0"/>
<rect x="131.6" y="379.2" width="3" height="4"/>
<rect x="131.6" y="379.4" width="3" height="4"/>
<rect x="132.0" y="381.2" width="3" height="4"/>
<rect x="132.7" y="379.0" width="3" height="4"/>
</g>
<rect x="32" y="64" width="475.5" height="478" fill="none" stroke="#0c5c5c" stroke-width="1.2"/>
<g clip-path="url(#die)"><g fill="none" stroke="#6a0404" stroke-width="1.2">
<rect x="114.5" y="60" width="11" height="76"/>
<rect x="114.5" y="469.5" width="11" height="78" rx="1.5"/>
<rect x="134.6" y="60" width="11" height="76"/>
<rect x="134.6" y="469.5" width="11" height="78" rx="1.5"/>
<rect x="154.6" y="60" width="11" height="76"/>
<rect x="154.6" y="469.5" width="11" height="78" rx="1.5"/>
<rect x="174.7" y="60" width="11" height="76"/>
<rect x="174.7" y="469.5" width="11" height="78" rx="1.5"/>
<rect x="194.7" y="60" width="11" height="76"/>
<rect x="194.7" y="469.5" width="11" height="78" rx="1.5"/>
<rect x="214.8" y="60" width="11" height="76"/>
<rect x="214.8" y="469.5" width="11" height="78" rx="1.5"/>
<rect x="234.8" y="60" width="11" height="76"/>
<rect x="234.8" y="469.5" width="11" height="78" rx="1.5"/>
<rect x="254.8" y="60" width="11" height="76"/>
<rect x="254.8" y="469.5" width="11" height="78" rx="1.5"/>
<rect x="274.9" y="60" width="11" height="76"/>
<rect x="274.9" y="469.5" width="11" height="78" rx="1.5"/>
<rect x="295.0" y="60" width="11" height="76"/>
<rect x="295.0" y="469.5" width="11" height="78" rx="1.5"/>
<rect x="315.0" y="60" width="11" height="76"/>
<rect x="315.0" y="469.5" width="11" height="78" rx="1.5"/>
<rect x="335.1" y="60" width="11" height="76"/>
<rect x="335.1" y="469.5" width="11" height="78" rx="1.5"/>
<rect x="355.1" y="60" width="11" height="76"/>
<rect x="355.1" y="469.5" width="11" height="78" rx="1.5"/>
<rect x="375.2" y="60" width="11" height="76"/>
<rect x="375.2" y="469.5" width="11" height="78" rx="1.5"/>
<rect x="395.2" y="60" width="11" height="76"/>
<rect x="395.2" y="469.5" width="11" height="78" rx="1.5"/>
<rect x="415.2" y="60" width="11" height="76"/>
<rect x="415.2" y="469.5" width="11" height="78" rx="1.5"/>
<rect x="26" y="144.5" width="80.3" height="11.9"/>
<rect x="26" y="164.8" width="80.3" height="11.9"/>
<rect x="26" y="185.2" width="80.3" height="11.9"/>
<rect x="26" y="205.6" width="80.3" height="11.9"/>
<rect x="26" y="225.9" width="80.3" height="11.9"/>
<rect x="26" y="246.2" width="80.3" height="11.9"/>
<rect x="26" y="266.6" width="80.3" height="11.9"/>
<rect x="26" y="287.0" width="80.3" height="11.9"/>
<rect x="26" y="307.3" width="80.3" height="11.9"/>
<rect x="26" y="327.6" width="80.3" height="11.9"/>
<rect x="26" y="348.0" width="80.3" height="11.9"/>
<rect x="26" y="368.4" width="80.3" height="11.9"/>
<rect x="26" y="388.7" width="80.3" height="11.9"/>
<rect x="26" y="409.1" width="80.3" height="11.9"/>
<rect x="26" y="429.4" width="80.3" height="11.9"/>
<rect x="26" y="449.8" width="80.3" height="11.9"/>
<rect x="435.5" y="146.7" width="80" height="11.5"/>
<rect x="435.5" y="168.1" width="80" height="11.5"/>
<rect x="435.5" y="189.6" width="80" height="11.5"/>
<rect x="435.5" y="211.0" width="80" height="11.5"/>
<rect x="435.5" y="232.5" width="80" height="11.5"/>
<rect x="435.5" y="253.9" width="80" height="11.5"/>
<rect x="435.5" y="275.4" width="80" height="11.5"/>
<rect x="435.5" y="296.9" width="80" height="11.5"/>
<rect x="435.5" y="318.3" width="80" height="11.5"/>
<rect x="435.5" y="339.8" width="80" height="11.5"/>
<rect x="435.5" y="361.2" width="80" height="11.5"/>
<rect x="435.5" y="382.6" width="80" height="11.5"/>
<rect x="435.5" y="404.1" width="80" height="11.5"/>
<rect x="435.5" y="425.5" width="80" height="11.5"/>
<rect x="435.5" y="447.0" width="80" height="11.5"/>
</g>
<g fill="#6c0c0c" style="font-family:'Liberation Sans',sans-serif;font-size:8px" text-anchor="middle">
<text transform="translate(122.0,99) rotate(-90)">vdda2</text>
<text transform="translate(142.1,99) rotate(-90)">vddio2</text>
<text transform="translate(162.1,99) rotate(-90)">pcb1</text>
<text transform="translate(182.2,99) rotate(-90)">pcb1</text>
<text transform="translate(202.2,99) rotate(-90)">pcb1</text>
<text transform="translate(222.2,99) rotate(-90)">pcb1</text>
<text transform="translate(242.3,99) rotate(-90)">pcb1</text>
<text transform="translate(262.4,99) rotate(-90)">pcb1</text>
<text transform="translate(282.4,99) rotate(-90)">pcb1</text>
<text transform="translate(302.5,99) rotate(-90)">pic</text>
<text transform="translate(322.5,99) rotate(-90)">pic</text>
<text transform="translate(342.6,99) rotate(-90)">pic</text>
<text transform="translate(362.6,99) rotate(-90)">pic</text>
<text transform="translate(382.7,99) rotate(-90)">pic</text>
<text transform="translate(402.7,99) rotate(-90)">pic</text>
<text transform="translate(422.8,99) rotate(-90)">pic</text>
<text transform="translate(122.0,505) rotate(-90)">vssa2</text>
<text transform="translate(142.1,505) rotate(-90)">vssio2</text>
<text transform="translate(162.1,505) rotate(-90)">pcb1</text>
<text transform="translate(182.2,505) rotate(-90)">pcb1</text>
<text transform="translate(202.2,505) rotate(-90)">pcb1</text>
<text transform="translate(222.2,505) rotate(-90)">pcb1</text>
<text transform="translate(242.3,505) rotate(-90)">pcb1</text>
<text transform="translate(262.4,505) rotate(-90)">pcb1</text>
<text transform="translate(282.4,505) rotate(-90)">pcb1</text>
<text transform="translate(302.5,505) rotate(-90)">pic</text>
<text transform="translate(322.5,505) rotate(-90)">pic</text>
<text transform="translate(342.6,505) rotate(-90)">pic</text>
<text transform="translate(362.6,505) rotate(-90)">pic</text>
<text transform="translate(382.7,505) rotate(-90)">pic</text>
<text transform="translate(402.7,505) rotate(-90)">pic</text>
<text transform="translate(422.8,505) rotate(-90)">pic</text>
<text x="69.5" y="153.8">pic</text>
<text x="69.5" y="174.2">pic</text>
<text x="69.5" y="194.5">pic</text>
<text x="69.5" y="214.9">pic</text>
<text x="69.5" y="235.2">pic</text>
<text x="69.5" y="255.6">pic</text>
<text x="69.5" y="275.9">pic</text>
<text x="69.5" y="296.3">pcb1</text>
<text x="69.5" y="316.6">pcb1</text>
<text x="69.5" y="336.9">pcb1</text>
<text x="69.5" y="357.3">pcb1</text>
<text x="69.5" y="377.7">pcb1</text>
<text x="69.5" y="398.0">pcb1</text>
<text x="69.5" y="418.4">pcb1</text>
<text x="69.5" y="438.7">vddapr</text>
<text x="69.5" y="459.1">vssapr</text>
<text x="472" y="156.0">pic</text>
<text x="472" y="177.4">pic</text>
<text x="472" y="198.9">pic</text>
<text x="472" y="220.3">pic</text>
<text x="472" y="241.8">pic</text>
<text x="472" y="263.2">pic</text>
<text x="472" y="284.7">pcb1</text>
<text x="472" y="306.2">pcb1</text>
<text x="472" y="327.6">pcb1</text>
<text x="472" y="349.1">pcb1</text>
<text x="472" y="370.5">pcb1</text>
<text x="472" y="391.9">pcb1</text>
<text x="472" y="413.4">pcb1</text>
<text x="472" y="434.8">vddapr</text>
<text x="472" y="456.3">vssapr</text>
</g></g>
<rect x="168.5" y="356.0" width="87.0" height="98.0" fill="#000"/>
<rect x="164.0" y="348.5" width="96.5" height="108.5" fill="none" stroke="#6a1010" stroke-width="1.1"/>
<rect x="167.0" y="351.5" width="90.5" height="102.5" fill="none" stroke="#4a0c18" stroke-width="1" stroke-dasharray="1 1"/>
<text transform="translate(218.0,451.0) rotate(-90)" fill="#6e1414" stroke="#000" stroke-width="0.51" style="font-family:'Liberation Sans',sans-serif;font-size:14.5px;letter-spacing:1.5px">ram_256x16</text>
<rect x="273.0" y="324.5" width="101.0" height="128.0" fill="#000"/>
<rect x="266.5" y="318.5" width="114.0" height="138.0" fill="none" stroke="#6a1010" stroke-width="1.1"/>
<rect x="269.5" y="321.5" width="108.0" height="132.0" fill="none" stroke="#4a0c18" stroke-width="1" stroke-dasharray="1 1"/>
<text transform="translate(331.0,450.0) rotate(-90)" fill="#6e1414" stroke="#000" stroke-width="0.70" style="font-family:'Liberation Sans',sans-serif;font-size:20.0px;letter-spacing:1.2px">ram_512x16</text>
<rect x="391.0" y="212.5" width="32.8" height="240.0" fill="#000"/>
<rect x="386.0" y="208.5" width="38.5" height="248.5" fill="none" stroke="#6a1010" stroke-width="1.1"/>
<rect x="389.0" y="211.5" width="32.5" height="242.5" fill="none" stroke="#4a0c18" stroke-width="1" stroke-dasharray="1 1"/>
<text transform="translate(416.5,418.0) rotate(-90)" fill="#6e1414" stroke="#000" stroke-width="0.95" style="font-family:'Liberation Sans',sans-serif;font-size:27.0px;letter-spacing:2.0px">ram_128x16</text>
<line x1="377" y1="301" x2="430" y2="367.5" stroke="#c8c8c0" stroke-width="1"/>
<path d="M377 301 V203 H429 V368.5 H438" fill="none" stroke="#ffff00" stroke-width="3"/>
<rect x="378.5" y="201.5" width="49" height="3" fill="#c8f020"/>
</svg>
<div class="abs" id="strip"></div><div class="abs" id="panel"></div>
<div class="abs" id="title"><span>Congestion Analysis</span></div>
<svg class="abs" style="left:900px;top:6px" width="43" height="16" viewBox="900 6 43 16">
<circle cx="910.0" cy="12" r="5.7" fill="#c4c4c4"/><circle cx="910.0" cy="11.8" r="4.9" fill="#e6e6e6"/><circle cx="910.0" cy="11" r="3.4" fill="#f6f6f6" opacity="0.7"/>
<circle cx="924.1" cy="12" r="5.7" fill="#c4c4c4"/><circle cx="924.1" cy="11.8" r="4.9" fill="#e6e6e6"/><circle cx="924.1" cy="11" r="3.4" fill="#f6f6f6" opacity="0.7"/>
<circle cx="938.3" cy="12" r="5.7" fill="#c4c4c4"/><circle cx="938.3" cy="11.8" r="4.9" fill="#e6e6e6"/><circle cx="938.3" cy="11" r="3.4" fill="#f6f6f6" opacity="0.7"/>
<text x="910" y="15.4" text-anchor="middle" style="font-family:'Liberation Sans',sans-serif;font-weight:bold;font-size:9.5px" fill="#444">?</text>
<rect x="921.3" y="10.6" width="4.6" height="4.6" fill="#eee" stroke="#3a3a3a" stroke-width="1.4"/><path d="M923.2 9.8V8.4H927.5V12.8H926.6" fill="none" stroke="#3a3a3a" stroke-width="1.4"/>
<path d="M935.4 9.1L941.2 14.9M941.2 9.1L935.4 14.9" stroke="#3a3a3a" stroke-width="2"/>
</svg>
<div class="abs" id="tbar"></div>
<svg class="abs" style="left:540px;top:21px" width="260" height="30" viewBox="540 21 260 30">
<rect x="543" y="27" width="4" height="20" fill="#b9b9b9"/>
<rect x="551.2" y="26.8" width="18.4" height="18.4" rx="2.5" fill="#575757"/>
<rect x="554.2" y="25.7" width="2" height="20.6" fill="#575757"/>
<rect x="550.1" y="29.8" width="20.6" height="2" fill="#575757"/>
<rect x="557.8" y="25.7" width="2" height="20.6" fill="#575757"/>
<rect x="550.1" y="33.4" width="20.6" height="2" fill="#575757"/>
<rect x="561.4" y="25.7" width="2" height="20.6" fill="#575757"/>
<rect x="550.1" y="37.0" width="20.6" height="2" fill="#575757"/>
<rect x="565.0" y="25.7" width="2" height="20.6" fill="#575757"/>
<rect x="550.1" y="40.6" width="20.6" height="2" fill="#575757"/>
<rect x="553.8" y="29.4" width="13.2" height="13.2" fill="#f0a050"/>
<rect x="553.8" y="29.4" width="8.2" height="4.6" fill="#e84040"/>
<rect x="562.0" y="29.4" width="5" height="6.4" fill="#f0c060"/>
<rect x="553.8" y="36.4" width="5.5" height="6.2" fill="#e8d060"/>
<rect x="558.2" y="37.4" width="5.5" height="5.2" fill="#40b040"/>
<rect x="563.6" y="38.8" width="3.4" height="3.8" fill="#208060"/>
<path d="M553 31.5H561M561 33.5L569.5 44.5" stroke="#c00000" stroke-width="2" fill="none"/><path d="M559 36.5l4-4 1 5z" fill="#c00000"/>
<rect x="590.3" y="26.8" width="18.4" height="18.4" rx="2.5" fill="#575757"/>
<rect x="593.3" y="25.7" width="2" height="20.6" fill="#575757"/>
<rect x="589.2" y="29.8" width="20.6" height="2" fill="#575757"/>
<rect x="596.9" y="25.7" width="2" height="20.6" fill="#575757"/>
<rect x="589.2" y="33.4" width="20.6" height="2" fill="#575757"/>
<rect x="600.5" y="25.7" width="2" height="20.6" fill="#575757"/>
<rect x="589.2" y="37.0" width="20.6" height="2" fill="#575757"/>
<rect x="604.1" y="25.7" width="2" height="20.6" fill="#575757"/>
<rect x="589.2" y="40.6" width="20.6" height="2" fill="#575757"/>
<rect x="592.9" y="29.4" width="13.2" height="13.2" fill="#f0a050"/>
<rect x="592.9" y="29.4" width="8.2" height="4.6" fill="#e84040"/>
<rect x="601.1" y="29.4" width="5" height="6.4" fill="#f0c060"/>
<rect x="592.9" y="36.4" width="5.5" height="6.2" fill="#e8d060"/>
<rect x="597.3" y="37.4" width="5.5" height="5.2" fill="#40b040"/>
<rect x="602.7" y="38.8" width="3.4" height="3.8" fill="#208060"/>
<circle cx="605" cy="42" r="4.6" fill="#e05050"/><rect x="602.3" y="41.1" width="5.4" height="1.8" fill="#fff"/>
<path d="M577.2 34.5h7l-3.5 3.8z" fill="#c00000"/>
<path d="M672.5 34.5h7l-3.5 3.8z" fill="#c00000"/>
<path d="M767.5 34.5h7l-3.5 3.8z" fill="#c00000"/>
<circle cx="624.5" cy="32.5" r="6" fill="#dfe6f2" stroke="#c9a090" stroke-width="1.6"/><circle cx="624.5" cy="32.5" r="3.4" fill="#9ab0d0"/><path d="M622 34.5h5l-2.5-4z" fill="#6080b0"/><path d="M628.8 37.6L634 45" stroke="#5868a0" stroke-width="2.6" stroke-linecap="round"/>
<path d="M647.5 27.5H665L658.3 36V45.5H654.3V36Z" fill="#9a9a9a"/><path d="M651 29.3H661.5L656.5 34.8Z" fill="#c4c4c4"/>
<rect x="684" y="25" width="20.5" height="21" fill="#4a4a4a"/><rect x="686" y="27" width="16.5" height="17" fill="#000"/>
<rect x="687" y="28.0" width="4.0" height="2" fill="#802080"/>
<rect x="687" y="30.0" width="3.0" height="2" fill="#c02020"/>
<rect x="687" y="32.6" width="9.5" height="2" fill="#f0e020"/>
<rect x="687" y="34.6" width="9.5" height="2" fill="#80e020"/>
<rect x="687" y="37.4" width="13.5" height="2" fill="#20d0a0"/>
<rect x="687" y="39.4" width="13.5" height="2" fill="#20a0e0"/>
<rect x="687" y="41.6" width="8.0" height="2" fill="#2040e0"/>
<rect x="712.5" y="25" width="20.5" height="21" fill="#4a4a4a"/><rect x="714.3" y="26.8" width="17" height="17.4" fill="#201010"/>
<rect x="715" y="27.5" width="3" height="8" fill="#d02020"/><rect x="719" y="27.5" width="2.5" height="8" fill="#4040a0"/><rect x="722" y="27.5" width="8.5" height="3" fill="#60d020"/><rect x="722" y="30.5" width="3.5" height="9.5" fill="#80e020"/><rect x="715" y="37" width="10" height="3.2" fill="#90e020"/><rect x="715" y="41" width="9" height="2.6" fill="#d02020"/><rect x="727" y="32" width="3.6" height="11.5" fill="#d02020"/><circle cx="729" cy="34.5" r="2" fill="#ff3030"/>
<path d="M742.5 32.5H749.5V27.5M749.5 32.5L748 45M753.5 45V33.5H760.5V31M744 43.5H748" stroke="#b01010" stroke-width="2.4" fill="none"/>
<rect x="741" y="30.8" width="3.2" height="3.2" fill="#301010"/><rect x="748" y="26" width="3.2" height="3.2" fill="#301010"/><rect x="759" y="29.5" width="3.2" height="3.2" fill="#301010"/><rect x="742.3" y="42" width="3.2" height="3.2" fill="#301010"/><rect x="746.5" y="43.6" width="3" height="3" fill="#301010"/>
<path d="M755.5 38.5L761.5 42.5L755.5 46.5Z" fill="#208040"/>
</svg>
<div class="abs gb" style="left:544px;top:60px;width:396.5px;height:197.5px"></div>
<div class="abs gt" style="left:548.8px;top:54.2px;letter-spacing:0.65px">Filter by Histogram</div>
<div class="abs" style="left:568px;top:70px;width:367px;height:183.5px;background:#000"></div>
<div class="abs cb" style="top:73.0px"></div>
<div class="abs cb" style="top:91.5px"></div>
<div class="abs cb" style="top:109.9px"></div>
<div class="abs cb" style="top:128.3px"></div>
<div class="abs cb" style="top:146.8px"></div>
<div class="abs cb" style="top:165.2px"></div>
<div class="abs cb" style="top:183.7px"></div>
<div class="abs cb" style="top:202.2px"></div>
<div class="abs cb" style="top:220.6px"></div>
<div class="abs cb" style="top:239.0px"></div>
<div class="abs bar" style="top:163.0px;width:18.8px;background:#90ea8c"></div>
<div class="abs bl" style="left:589.6px;top:162.8px">61-70%</div>
<div class="abs bar" style="top:181.6px;width:53.8px;background:#00c455"></div>
<div class="abs bl" style="left:624.6px;top:181.4px">51-60%</div>
<div class="abs bar" style="top:200.2px;width:126.3px;background:#00ffff"></div>
<div class="abs bl" style="left:697.1px;top:200.0px">41-50%</div>
<div class="abs bar" style="top:218.6px;width:317.0px;background:#6eb0ff"></div>
<div class="abs bl" style="left:887.8px;top:218.4px">21-40%</div>
<div class="abs bar" style="top:237.0px;width:281.0px;background:#0000f0"></div>
<div class="abs bl" style="left:851.8px;top:236.8px">1-20%</div>
<div class="abs gb" style="left:544px;top:271px;width:396.5px;height:298.5px"></div>
<div class="abs gt" style="left:549px;top:264.9px;letter-spacing:0.72px">Global Cell Track Utilization</div>
<div class="abs" style="left:550px;top:280.7px;width:385.5px;height:164.3px;background:#555"></div>
<div class="abs" style="left:552px;top:283px;width:381.5px;height:160.5px;background:#fbfbfb"></div>
<div class="abs hd" style="left:552.0px;top:283px;width:46.0px;height:43.5px;"><div>Cell</div><div>Index</div></div>
<div class="abs hd" style="left:598.0px;top:283px;width:43.7px;height:43.5px;"><div>Layer</div></div>
<div class="abs hd" style="left:641.7px;top:283px;width:54.7px;height:43.5px;"><div>Used</div><div>Blockages</div></div>
<div class="abs hd" style="left:696.4px;top:283px;width:48.3px;height:43.5px;"><div>Used</div><div>Pre</div><div>Routes</div></div>
<div class="abs hd" style="left:744.7px;top:283px;width:49.3px;height:43.5px;"><div>Used</div><div>Global</div><div>Routes</div></div>
<div class="abs hd" style="left:794.0px;top:283px;width:74.0px;height:43.5px;text-align:left;padding-left:2.5px;"><div>Available</div></div>
<div class="abs hd" style="left:868.0px;top:283px;width:47.8px;height:43.5px;"><div>Gcell</div><div>Total</div><div>Tracks</div></div>
<svg class="abs" style="left:856px;top:303px" width="8" height="5"><path d="M0.5 0.8h7l-3.5 3.4z" fill="#f4f4f4"/></svg>
<div class="abs cell" style="left:552.0px;top:326.5px;width:46.0px">(159 200)</div>
<div class="abs cell" style="left:598.0px;top:326.5px;width:43.7px">met3</div>
<div class="abs cell" style="left:641.7px;top:326.5px;width:54.7px">0</div>
<div class="abs cell" style="left:696.4px;top:326.5px;width:48.3px">0</div>
<div class="abs cell" style="left:744.7px;top:326.5px;width:49.3px">14</div>
<div class="abs cell" style="left:794.0px;top:326.5px;width:74.0px">6</div>
<div class="abs cell" style="left:868.0px;top:326.5px;width:47.8px">20</div>
<div class="abs cell" style="left:552.0px;top:343.2px;width:46.0px">(159 210)</div>
<div class="abs cell" style="left:598.0px;top:343.2px;width:43.7px">met3</div>
<div class="abs cell" style="left:641.7px;top:343.2px;width:54.7px">0</div>
<div class="abs cell" style="left:696.4px;top:343.2px;width:48.3px">0</div>
<div class="abs cell" style="left:744.7px;top:343.2px;width:49.3px">14</div>
<div class="abs cell" style="left:794.0px;top:343.2px;width:74.0px">6</div>
<div class="abs cell" style="left:868.0px;top:343.2px;width:47.8px">20</div>
<div class="abs cell" style="left:552.0px;top:359.9px;width:46.0px">(160 212)</div>
<div class="abs cell" style="left:598.0px;top:359.9px;width:43.7px">met3</div>
<div class="abs cell" style="left:641.7px;top:359.9px;width:54.7px">0</div>
<div class="abs cell" style="left:696.4px;top:359.9px;width:48.3px">0</div>
<div class="abs cell" style="left:744.7px;top:359.9px;width:49.3px">14</div>
<div class="abs cell" style="left:794.0px;top:359.9px;width:74.0px">6</div>
<div class="abs cell" style="left:868.0px;top:359.9px;width:47.8px">20</div>
<div class="abs cell" style="left:552.0px;top:376.6px;width:46.0px">(162 185)</div>
<div class="abs cell" style="left:598.0px;top:376.6px;width:43.7px">met3</div>
<div class="abs cell" style="left:641.7px;top:376.6px;width:54.7px">0</div>
<div class="abs cell" style="left:696.4px;top:376.6px;width:48.3px">0</div>
<div class="abs cell" style="left:744.7px;top:376.6px;width:49.3px">14</div>
<div class="abs cell" style="left:794.0px;top:376.6px;width:74.0px">6</div>
<div class="abs cell" style="left:868.0px;top:376.6px;width:47.8px">20</div>
<div class="abs cell" style="left:552.0px;top:393.3px;width:46.0px">(164 183)</div>
<div class="abs cell" style="left:598.0px;top:393.3px;width:43.7px">met3</div>
<div class="abs cell" style="left:641.7px;top:393.3px;width:54.7px">0</div>
<div class="abs cell" style="left:696.4px;top:393.3px;width:48.3px">0</div>
<div class="abs cell" style="left:744.7px;top:393.3px;width:49.3px">14</div>
<div class="abs cell" style="left:794.0px;top:393.3px;width:74.0px">6</div>
<div class="abs cell" style="left:868.0px;top:393.3px;width:47.8px">20</div>
<div class="abs cell" style="left:552.0px;top:410.0px;width:46.0px">(164 186)</div>
<div class="abs cell" style="left:598.0px;top:410.0px;width:43.7px">met3</div>
<div class="abs cell" style="left:641.7px;top:410.0px;width:54.7px">0</div>
<div class="abs cell" style="left:696.4px;top:410.0px;width:48.3px">0</div>
<div class="abs cell" style="left:744.7px;top:410.0px;width:49.3px">14</div>
<div class="abs cell" style="left:794.0px;top:410.0px;width:74.0px">6</div>
<div class="abs cell" style="left:868.0px;top:410.0px;width:47.8px">20</div>
<div class="abs cell" style="left:552.0px;top:426.7px;width:46.0px">(167 187)</div>
<div class="abs cell" style="left:598.0px;top:426.7px;width:43.7px">met3</div>
<div class="abs cell" style="left:641.7px;top:426.7px;width:54.7px">0</div>
<div class="abs cell" style="left:696.4px;top:426.7px;width:48.3px">0</div>
<div class="abs cell" style="left:744.7px;top:426.7px;width:49.3px">14</div>
<div class="abs cell" style="left:794.0px;top:426.7px;width:74.0px">6</div>
<div class="abs cell" style="left:868.0px;top:426.7px;width:47.8px">20</div>
<div class="abs" style="left:552px;top:326.5px;width:46px;height:16.7px;box-sizing:border-box;border:1px solid #8a8a8a"></div>
<div class="abs" style="left:918.5px;top:283px;width:15px;height:160.5px;background:#838383"></div>
<div class="abs" style="left:918.5px;top:283px;width:15px;height:12.5px;background:#cbcbcb"></div>
<div class="abs" style="left:920.2px;top:298px;width:12.2px;height:17.4px;background:#adadad;border-radius:5.5px;border:1px solid #9c9c9c;box-sizing:border-box"></div>
<div class="abs" style="left:918.5px;top:430.5px;width:15px;height:13px;background:#d0d0d0"></div>
<svg class="abs" style="left:919px;top:283px" width="15" height="161"><path d="M3.5 9.5h8l-4-5.5z" fill="#fff"/><path d="M3.5 151.5h8l-4 5.5z" fill="#fff"/></svg>
<div class="abs" style="left:550px;top:452px;width:383px;height:2.6px;background:#555"></div>
<div class="abs" style="left:550px;top:452px;width:2px;height:112px;background:#555"></div>
<div class="abs hd" style="left:552.0px;top:454.6px;width:243.2px;height:28.6px;justify-content:center;padding:0"><div>Net</div></div>
<div class="abs hd" style="left:795.2px;top:454.6px;width:69.0px;height:28.6px;justify-content:center;padding:0"><div>Number Cell</div><div>Occupied</div></div>
<div class="abs hd" style="left:864.2px;top:454.6px;width:51.6px;height:28.6px;justify-content:center;padding:0"><div>Selected</div><div>Color</div></div>
<div class="abs" style="left:540px;top:576.2px;width:403px;height:1.8px;background:#555"></div>
<div class="abs" style="left:540px;top:578px;width:112.5px;height:19.5px;background:#d2d2d2;line-height:18px;font-size:11px;color:#333;white-space:nowrap"><span style="position:absolute;left:6.6px;letter-spacing:0.15px">Constraint Manager</span></div>
<div class="abs" style="left:652.5px;top:578px;width:111.5px;height:19.5px;background:#fbfbfb;line-height:19px;font-size:11px;color:#333;box-sizing:border-box;border-right:1px solid #d0d0d0;border-bottom:1px solid #d8d8d8;white-space:nowrap"><span style="position:absolute;left:6.5px">Congestion Analysis</span></div>
</body></html>
